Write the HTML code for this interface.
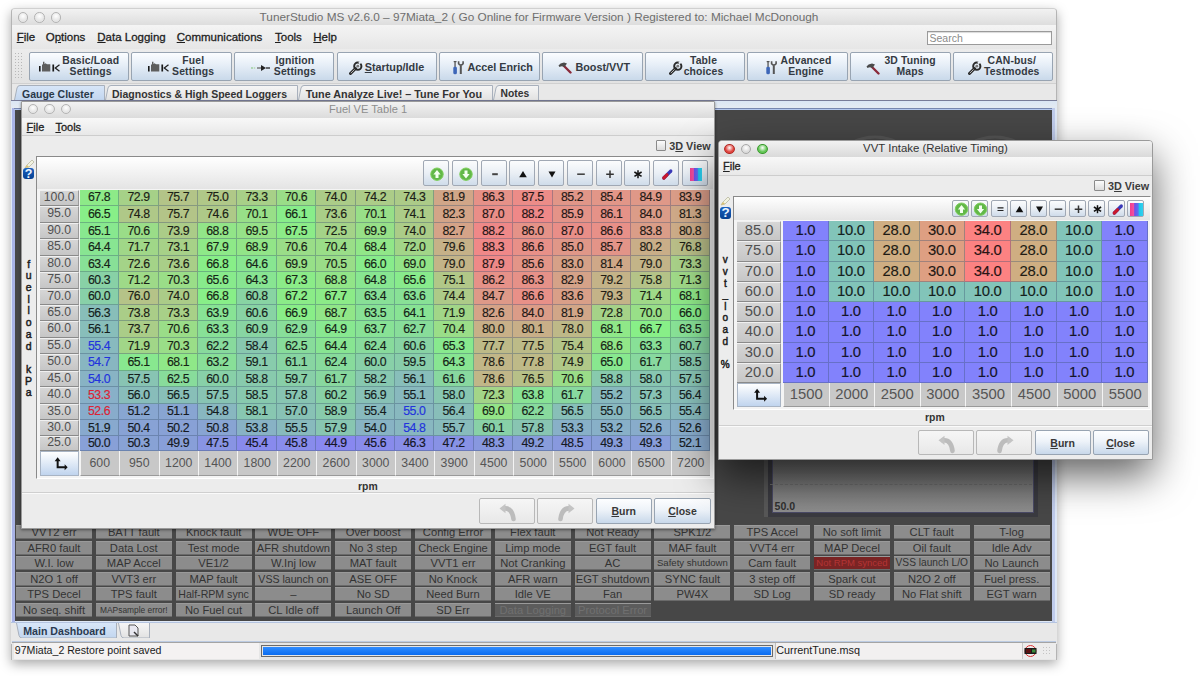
<!DOCTYPE html><html><head><meta charset="utf-8"><style>
html,body{margin:0;padding:0;width:1200px;height:676px;overflow:hidden;background:#fff;font-family:"Liberation Sans", sans-serif;}
div{font-family:"Liberation Sans", sans-serif;}
</style></head><body>
<div style="position:absolute;left:11px;top:7.5px;width:1046px;height:652.5px;box-sizing:border-box;background:#e8e8e8;border:1px solid #b4b4b4;border-top-color:#d0d0d0;border-radius:4px 4px 0 0;box-shadow:0 4px 12px rgba(0,0,0,0.34);"></div>
<div style="position:absolute;left:12px;top:8.5px;width:1044px;height:16.5px;background:linear-gradient(#f2f2f2,#dddddd);border-radius:3px 3px 0 0;border-bottom:1px solid #bcbcbc;"></div>
<div style="position:absolute;left:17.8px;top:12.2px;width:10.4px;height:10.4px;border-radius:50%;box-sizing:border-box;border:1px solid #b4b4b4;background:radial-gradient(circle at 50% 35%, #ffffff 0%, #e6e6e6 60%);"></div>
<div style="position:absolute;left:34.199999999999996px;top:12.2px;width:10.4px;height:10.4px;border-radius:50%;box-sizing:border-box;border:1px solid #b4b4b4;background:radial-gradient(circle at 50% 35%, #ffffff 0%, #e6e6e6 60%);"></div>
<div style="position:absolute;left:50.599999999999994px;top:12.2px;width:10.4px;height:10.4px;border-radius:50%;box-sizing:border-box;border:1px solid #b4b4b4;background:radial-gradient(circle at 50% 35%, #ffffff 0%, #e6e6e6 60%);"></div>
<div style="position:absolute;left:239px;width:600px;text-align:center;top:12px;font-size:11.8px;font-weight:normal;color:#6e6e6e;white-space:nowrap;line-height:1;">TunerStudio MS v2.6.0 – 97Miata_2 ( Go Online for Firmware Version ) Registered to: Michael McDonough</div>
<div style="position:absolute;left:12px;top:25px;width:1044px;height:24px;background:linear-gradient(#f4f4f4,#e6e6e6);border-bottom:1px solid #cfcfcf;"></div>
<div style="position:absolute;left:16.7px;top:32px;font-size:11.5px;font-weight:normal;color:#1e1e1e;white-space:nowrap;line-height:1;-webkit-text-stroke:0.3px #1e1e1e;"><u>F</u>ile</div>
<div style="position:absolute;left:45.7px;top:32px;font-size:11.5px;font-weight:normal;color:#1e1e1e;white-space:nowrap;line-height:1;-webkit-text-stroke:0.3px #1e1e1e;">O<u>p</u>tions</div>
<div style="position:absolute;left:97.3px;top:32px;font-size:11.5px;font-weight:normal;color:#1e1e1e;white-space:nowrap;line-height:1;-webkit-text-stroke:0.3px #1e1e1e;"><u>D</u>ata Logging</div>
<div style="position:absolute;left:176.7px;top:32px;font-size:11.5px;font-weight:normal;color:#1e1e1e;white-space:nowrap;line-height:1;-webkit-text-stroke:0.3px #1e1e1e;"><u>C</u>ommunications</div>
<div style="position:absolute;left:275px;top:32px;font-size:11.5px;font-weight:normal;color:#1e1e1e;white-space:nowrap;line-height:1;-webkit-text-stroke:0.3px #1e1e1e;"><u>T</u>ools</div>
<div style="position:absolute;left:313.3px;top:32px;font-size:11.5px;font-weight:normal;color:#1e1e1e;white-space:nowrap;line-height:1;-webkit-text-stroke:0.3px #1e1e1e;"><u>H</u>elp</div>
<div style="position:absolute;left:927px;top:30.5px;width:125px;height:14px;box-sizing:border-box;background:#fff;border:1px solid #9a9a9a;box-shadow:inset 0 1px 1px rgba(0,0,0,0.15);"></div>
<div style="position:absolute;left:929.5px;top:33px;font-size:10.5px;font-weight:normal;color:#8a8a8a;white-space:nowrap;line-height:1;">Search</div>
<div style="position:absolute;left:12px;top:49px;width:1044px;height:34px;background:linear-gradient(#ececec,#e2e2e2);border-bottom:1px solid #d0d0d0;"></div>
<div style="position:absolute;left:14px;top:52px;width:8px;height:28px;background-image:radial-gradient(#b8b8b8 0.7px, transparent 0.8px);background-size:3px 3px;"></div>
<div style="position:absolute;left:28.5px;top:52.3px;width:100.5px;height:28.5px;box-sizing:border-box;border:1px solid #98a4b2;border-radius:2px;background:linear-gradient(#fbfdff 0%,#e6eef7 45%,#c9d9ea 100%);"><svg style="position:absolute;left:9.899999999999999px;top:8.0px" width="22" height="12" viewBox="0 0 22 12"><rect x="0" y="5" width="1.6" height="5.5" fill="#1a1a1a"/><path d="M3 10.5 V4 L4 3 V0.8 H5.4 V3 L6.5 2.2 L8 3.2 H11.3 V10.5 Z" fill="#5e5e5e"/><rect x="13.4" y="3.5" width="1.7" height="7" fill="#1a1a1a"/><path d="M20.5 3.8 L16.3 7 L20.5 10.2" stroke="#222" stroke-width="1.3" fill="none"/></svg></div>
<div style="position:absolute;left:-209.3px;width:600px;text-align:center;top:55.5px;font-size:10.4px;font-weight:bold;color:#343a42;white-space:nowrap;line-height:1;letter-spacing:0.15px;">Basic/Load</div>
<div style="position:absolute;left:-209.3px;width:600px;text-align:center;top:67.2px;font-size:10.4px;font-weight:bold;color:#343a42;white-space:nowrap;line-height:1;letter-spacing:0.15px;">Settings</div>
<div style="position:absolute;left:131.2px;top:52.3px;width:100.5px;height:28.5px;box-sizing:border-box;border:1px solid #98a4b2;border-radius:2px;background:linear-gradient(#fbfdff 0%,#e6eef7 45%,#c9d9ea 100%);"><svg style="position:absolute;left:16.30000000000001px;top:8.0px" width="22" height="12" viewBox="0 0 22 12"><rect x="0" y="5" width="1.6" height="5.5" fill="#1a1a1a"/><path d="M3 10.5 V4 L4 3 V0.8 H5.4 V3 L6.5 2.2 L8 3.2 H11.3 V10.5 Z" fill="#5e5e5e"/><rect x="13.4" y="3.5" width="1.7" height="7" fill="#1a1a1a"/><path d="M20.5 3.8 L16.3 7 L20.5 10.2" stroke="#222" stroke-width="1.3" fill="none"/></svg></div>
<div style="position:absolute;left:-106.80000000000001px;width:600px;text-align:center;top:55.5px;font-size:10.4px;font-weight:bold;color:#343a42;white-space:nowrap;line-height:1;letter-spacing:0.15px;">Fuel</div>
<div style="position:absolute;left:-106.80000000000001px;width:600px;text-align:center;top:67.2px;font-size:10.4px;font-weight:bold;color:#343a42;white-space:nowrap;line-height:1;letter-spacing:0.15px;">Settings</div>
<div style="position:absolute;left:233.9px;top:52.3px;width:100.5px;height:28.5px;box-sizing:border-box;border:1px solid #98a4b2;border-radius:2px;background:linear-gradient(#fbfdff 0%,#e6eef7 45%,#c9d9ea 100%);"><svg style="position:absolute;left:15.099999999999994px;top:9.200000000000003px" width="22" height="12" viewBox="0 0 22 12"><circle cx="2" cy="6" r="0.9" fill="#9c9"/><circle cx="4.5" cy="6" r="0.9" fill="#bdb"/><path d="M7 6 H11" stroke="#666" stroke-width="1.3"/><path d="M11 3 V9 L16 6 Z" fill="#222"/><path d="M16 6 H20" stroke="#222" stroke-width="1.3"/></svg></div>
<div style="position:absolute;left:-5.100000000000023px;width:600px;text-align:center;top:55.5px;font-size:10.4px;font-weight:bold;color:#343a42;white-space:nowrap;line-height:1;letter-spacing:0.15px;">Ignition</div>
<div style="position:absolute;left:-5.100000000000023px;width:600px;text-align:center;top:67.2px;font-size:10.4px;font-weight:bold;color:#343a42;white-space:nowrap;line-height:1;letter-spacing:0.15px;">Settings</div>
<div style="position:absolute;left:336.6px;top:52.3px;width:100.5px;height:28.5px;box-sizing:border-box;border:1px solid #98a4b2;border-radius:2px;background:linear-gradient(#fbfdff 0%,#e6eef7 45%,#c9d9ea 100%);"><svg style="position:absolute;left:11.099999999999966px;top:7.600000000000001px" width="14" height="14" viewBox="0 0 14 14"><path d="M1.5 12.5 L6.5 7.5" stroke="#2a2a2a" stroke-width="3" stroke-linecap="round"/><path d="M1.8 12.2 L6.2 7.8" stroke="#d8d8d8" stroke-width="0.8"/><circle cx="8.8" cy="5.2" r="3.6" fill="none" stroke="#2a2a2a" stroke-width="2"/><circle cx="8.8" cy="5.2" r="1.4" fill="#777"/><path d="M10 2.5 L13.5 -0.5" stroke="#e8eef6" stroke-width="2.2"/></svg></div>
<div style="position:absolute;left:364.75px;top:61.8px;font-size:10.8px;font-weight:bold;color:#343a42;white-space:nowrap;line-height:1;"><u>S</u>tartup/Idle</div>
<div style="position:absolute;left:439.3px;top:52.3px;width:100.5px;height:28.5px;box-sizing:border-box;border:1px solid #98a4b2;border-radius:2px;background:linear-gradient(#fbfdff 0%,#e6eef7 45%,#c9d9ea 100%);"><svg style="position:absolute;left:12.699999999999989px;top:7.700000000000003px" width="12" height="14" viewBox="0 0 12 14"><rect x="0.3" y="5.5" width="3.6" height="7.8" rx="1.5" fill="#3d66b8"/><rect x="1.4" y="0.3" width="1.3" height="5.5" fill="#555"/><rect x="0.7" y="0" width="2.8" height="1.2" fill="#555"/><path d="M7.8 4.5 V13" stroke="#555" stroke-width="2"/><path d="M5.6 0.3 V2.8 Q7.8 5.5 10.1 2.8 V0.3" stroke="#555" stroke-width="1.6" fill="none"/></svg></div>
<div style="position:absolute;left:467.5px;top:61.8px;font-size:10.8px;font-weight:bold;color:#343a42;white-space:nowrap;line-height:1;">Accel Enrich</div>
<div style="position:absolute;left:542.0px;top:52.3px;width:100.5px;height:28.5px;box-sizing:border-box;border:1px solid #98a4b2;border-radius:2px;background:linear-gradient(#fbfdff 0%,#e6eef7 45%,#c9d9ea 100%);"><svg style="position:absolute;left:15.0px;top:8.700000000000003px" width="14" height="12" viewBox="0 0 14 12"><path d="M5.5 3.5 L12.5 10.5" stroke="#8a2a3a" stroke-width="2.4" stroke-linecap="round"/><path d="M0.5 3.5 Q2 1 6 0.5 L9 1.5 L6.5 5 Q4 3.5 1.5 5 Z" fill="#4a4a4a"/></svg></div>
<div style="position:absolute;left:575.4px;top:61.8px;font-size:10.8px;font-weight:bold;color:#343a42;white-space:nowrap;line-height:1;">Boost/VVT</div>
<div style="position:absolute;left:644.7px;top:52.3px;width:100.5px;height:28.5px;box-sizing:border-box;border:1px solid #98a4b2;border-radius:2px;background:linear-gradient(#fbfdff 0%,#e6eef7 45%,#c9d9ea 100%);"><svg style="position:absolute;left:23.299999999999955px;top:8.200000000000003px" width="14" height="14" viewBox="0 0 14 14"><path d="M1.5 12.5 L6.5 7.5" stroke="#2a2a2a" stroke-width="3" stroke-linecap="round"/><path d="M1.8 12.2 L6.2 7.8" stroke="#d8d8d8" stroke-width="0.8"/><circle cx="8.8" cy="5.2" r="3.6" fill="none" stroke="#2a2a2a" stroke-width="2"/><circle cx="8.8" cy="5.2" r="1.4" fill="#777"/><path d="M10 2.5 L13.5 -0.5" stroke="#e8eef6" stroke-width="2.2"/></svg></div>
<div style="position:absolute;left:403.5px;width:600px;text-align:center;top:55.5px;font-size:10.4px;font-weight:bold;color:#343a42;white-space:nowrap;line-height:1;letter-spacing:0.15px;">Table</div>
<div style="position:absolute;left:403.5px;width:600px;text-align:center;top:67.2px;font-size:10.4px;font-weight:bold;color:#343a42;white-space:nowrap;line-height:1;letter-spacing:0.15px;">choices</div>
<div style="position:absolute;left:747.4px;top:52.3px;width:100.5px;height:28.5px;box-sizing:border-box;border:1px solid #98a4b2;border-radius:2px;background:linear-gradient(#fbfdff 0%,#e6eef7 45%,#c9d9ea 100%);"><svg style="position:absolute;left:18.0px;top:7.700000000000003px" width="12" height="14" viewBox="0 0 12 14"><rect x="0.3" y="5.5" width="3.6" height="7.8" rx="1.5" fill="#3d66b8"/><rect x="1.4" y="0.3" width="1.3" height="5.5" fill="#555"/><rect x="0.7" y="0" width="2.8" height="1.2" fill="#555"/><path d="M7.8 4.5 V13" stroke="#555" stroke-width="2"/><path d="M5.6 0.3 V2.8 Q7.8 5.5 10.1 2.8 V0.3" stroke="#555" stroke-width="1.6" fill="none"/></svg></div>
<div style="position:absolute;left:506.0px;width:600px;text-align:center;top:55.5px;font-size:10.4px;font-weight:bold;color:#343a42;white-space:nowrap;line-height:1;letter-spacing:0.15px;">Advanced</div>
<div style="position:absolute;left:506.0px;width:600px;text-align:center;top:67.2px;font-size:10.4px;font-weight:bold;color:#343a42;white-space:nowrap;line-height:1;letter-spacing:0.15px;">Engine</div>
<div style="position:absolute;left:850.1px;top:52.3px;width:100.5px;height:28.5px;box-sizing:border-box;border:1px solid #98a4b2;border-radius:2px;background:linear-gradient(#fbfdff 0%,#e6eef7 45%,#c9d9ea 100%);"><svg style="position:absolute;left:14.899999999999977px;top:9.700000000000003px" width="14" height="12" viewBox="0 0 14 12"><path d="M5.5 3.5 L12.5 10.5" stroke="#8a2a3a" stroke-width="2.4" stroke-linecap="round"/><path d="M0.5 3.5 Q2 1 6 0.5 L9 1.5 L6.5 5 Q4 3.5 1.5 5 Z" fill="#4a4a4a"/></svg></div>
<div style="position:absolute;left:610.1px;width:600px;text-align:center;top:55.5px;font-size:10.4px;font-weight:bold;color:#343a42;white-space:nowrap;line-height:1;letter-spacing:0.15px;">3D Tuning</div>
<div style="position:absolute;left:610.1px;width:600px;text-align:center;top:67.2px;font-size:10.4px;font-weight:bold;color:#343a42;white-space:nowrap;line-height:1;letter-spacing:0.15px;">Maps</div>
<div style="position:absolute;left:952.8000000000001px;top:52.3px;width:100.5px;height:28.5px;box-sizing:border-box;border:1px solid #98a4b2;border-radius:2px;background:linear-gradient(#fbfdff 0%,#e6eef7 45%,#c9d9ea 100%);"><svg style="position:absolute;left:14.699999999999932px;top:7.700000000000003px" width="14" height="14" viewBox="0 0 14 14"><path d="M1.5 12.5 L6.5 7.5" stroke="#2a2a2a" stroke-width="3" stroke-linecap="round"/><path d="M1.8 12.2 L6.2 7.8" stroke="#d8d8d8" stroke-width="0.8"/><circle cx="8.8" cy="5.2" r="3.6" fill="none" stroke="#2a2a2a" stroke-width="2"/><circle cx="8.8" cy="5.2" r="1.4" fill="#777"/><path d="M10 2.5 L13.5 -0.5" stroke="#e8eef6" stroke-width="2.2"/></svg></div>
<div style="position:absolute;left:711.8000000000001px;width:600px;text-align:center;top:55.5px;font-size:10.4px;font-weight:bold;color:#343a42;white-space:nowrap;line-height:1;letter-spacing:0.15px;">CAN-bus/</div>
<div style="position:absolute;left:711.8000000000001px;width:600px;text-align:center;top:67.2px;font-size:10.4px;font-weight:bold;color:#343a42;white-space:nowrap;line-height:1;letter-spacing:0.15px;">Testmodes</div>
<svg style="position:absolute;left:13.5px;top:85px" width="91" height="15"><defs><linearGradient id="tgsel" x1="0" y1="0" x2="0" y2="1"><stop offset="0" stop-color="#d8e6f8"/><stop offset="1" stop-color="#c2d6ef"/></linearGradient></defs><path d="M0.5 15 L3 3 Q3.6 0.5 6 0.5 H90.5 V15" fill="url(#tgsel)" stroke="#a8b0bc" stroke-width="1"/></svg>
<svg style="position:absolute;left:104.5px;top:85px" width="193" height="15"><defs><linearGradient id="tguns" x1="0" y1="0" x2="0" y2="1"><stop offset="0" stop-color="#f6f6f6"/><stop offset="1" stop-color="#e2e2e2"/></linearGradient></defs><path d="M0.5 15 L3 3 Q3.6 0.5 6 0.5 H192.5 V15" fill="url(#tguns)" stroke="#a8b0bc" stroke-width="1"/></svg>
<svg style="position:absolute;left:297.5px;top:85px" width="195" height="15"><defs><linearGradient id="tguns" x1="0" y1="0" x2="0" y2="1"><stop offset="0" stop-color="#f6f6f6"/><stop offset="1" stop-color="#e2e2e2"/></linearGradient></defs><path d="M0.5 15 L3 3 Q3.6 0.5 6 0.5 H194.5 V15" fill="url(#tguns)" stroke="#a8b0bc" stroke-width="1"/></svg>
<svg style="position:absolute;left:492.5px;top:85px" width="46" height="15"><defs><linearGradient id="tguns" x1="0" y1="0" x2="0" y2="1"><stop offset="0" stop-color="#f6f6f6"/><stop offset="1" stop-color="#e2e2e2"/></linearGradient></defs><path d="M0.5 15 L3 3 Q3.6 0.5 6 0.5 H45.5 V15" fill="url(#tguns)" stroke="#a8b0bc" stroke-width="1"/></svg>
<div style="position:absolute;left:22px;top:88.6px;font-size:10.5px;font-weight:bold;color:#2a3848;white-space:nowrap;line-height:1;">Gauge Cluster</div>
<div style="position:absolute;left:112px;top:88.6px;font-size:10.5px;font-weight:bold;color:#333;white-space:nowrap;line-height:1;">Diagnostics &amp; High Speed Loggers</div>
<div style="position:absolute;left:305.7px;top:88.6px;font-size:10.8px;font-weight:bold;color:#333;white-space:nowrap;line-height:1;">Tune Analyze Live! – Tune For You</div>
<div style="position:absolute;left:500.5px;top:88.9px;font-size:10.3px;font-weight:bold;color:#333;white-space:nowrap;line-height:1;">Notes</div>
<div style="position:absolute;left:11px;top:99.5px;width:1046px;height:523.5px;box-sizing:border-box;background:linear-gradient(#dae6f4,#e6ecf2 8px,#dfe8f6 9px);border-top:1px solid #787c98;"></div>
<div style="position:absolute;left:11.5px;top:107.5px;width:3px;height:515px;background:#a9b3e6;"></div>
<div style="position:absolute;left:13.5px;top:107.5px;width:1041px;height:1px;background:#7888b0;"></div>
<div style="position:absolute;left:13.5px;top:108.5px;width:1041px;height:1.5px;background:#b4c8ee;"></div>
<div style="position:absolute;left:1052px;top:107.5px;width:3px;height:515px;background:#c0ccec;"></div>
<div style="position:absolute;left:15px;top:110px;width:1037px;height:511px;background:#474747;"></div>
<svg style="position:absolute;left:715px;top:110px" width="337" height="31"><circle cx="160" cy="75" r="48" fill="none" stroke="#555" stroke-width="3"/><circle cx="280" cy="75" r="48" fill="none" stroke="#555" stroke-width="3"/></svg>
<div style="position:absolute;left:764px;top:430px;width:274px;height:87px;box-sizing:border-box;border:4px solid #3a3a40;border-left-width:8px;border-top:none;background:linear-gradient(#505050,#8e8e8e);box-shadow:inset 0 0 0 1px #4a4a66;"></div>
<div style="position:absolute;left:764px;top:430px;width:4px;height:87px;background:#585858;"></div>
<div style="position:absolute;left:770px;top:484px;width:262px;height:0;border-top:1px dashed #6a6a6a;"></div>
<div style="position:absolute;left:774.5px;top:501px;font-size:10.6px;font-weight:bold;color:#303030;white-space:nowrap;line-height:1;">50.0</div>
<div style="position:absolute;left:16.0px;top:525.2px;width:76px;height:14px;box-sizing:border-box;background:#8c8c8c;border-top:1px solid #9a9a9a;border-bottom:1px solid #6a6a6a;"></div>
<div style="position:absolute;left:16.0px;top:525.2px;width:76px;height:14px;line-height:14px;text-align:center;font-size:11.2px;color:#333;white-space:nowrap;overflow:hidden;">VVT2 err</div>
<div style="position:absolute;left:95.8px;top:525.2px;width:76px;height:14px;box-sizing:border-box;background:#8c8c8c;border-top:1px solid #9a9a9a;border-bottom:1px solid #6a6a6a;"></div>
<div style="position:absolute;left:95.8px;top:525.2px;width:76px;height:14px;line-height:14px;text-align:center;font-size:11.2px;color:#333;white-space:nowrap;overflow:hidden;">BATT fault</div>
<div style="position:absolute;left:175.6px;top:525.2px;width:76px;height:14px;box-sizing:border-box;background:#8c8c8c;border-top:1px solid #9a9a9a;border-bottom:1px solid #6a6a6a;"></div>
<div style="position:absolute;left:175.6px;top:525.2px;width:76px;height:14px;line-height:14px;text-align:center;font-size:11.2px;color:#333;white-space:nowrap;overflow:hidden;">Knock fault</div>
<div style="position:absolute;left:255.39999999999998px;top:525.2px;width:76px;height:14px;box-sizing:border-box;background:#8c8c8c;border-top:1px solid #9a9a9a;border-bottom:1px solid #6a6a6a;"></div>
<div style="position:absolute;left:255.39999999999998px;top:525.2px;width:76px;height:14px;line-height:14px;text-align:center;font-size:11.2px;color:#333;white-space:nowrap;overflow:hidden;">WUE OFF</div>
<div style="position:absolute;left:335.2px;top:525.2px;width:76px;height:14px;box-sizing:border-box;background:#8c8c8c;border-top:1px solid #9a9a9a;border-bottom:1px solid #6a6a6a;"></div>
<div style="position:absolute;left:335.2px;top:525.2px;width:76px;height:14px;line-height:14px;text-align:center;font-size:11.2px;color:#333;white-space:nowrap;overflow:hidden;">Over boost</div>
<div style="position:absolute;left:415.0px;top:525.2px;width:76px;height:14px;box-sizing:border-box;background:#8c8c8c;border-top:1px solid #9a9a9a;border-bottom:1px solid #6a6a6a;"></div>
<div style="position:absolute;left:415.0px;top:525.2px;width:76px;height:14px;line-height:14px;text-align:center;font-size:11.2px;color:#333;white-space:nowrap;overflow:hidden;">Config Error</div>
<div style="position:absolute;left:494.79999999999995px;top:525.2px;width:76px;height:14px;box-sizing:border-box;background:#8c8c8c;border-top:1px solid #9a9a9a;border-bottom:1px solid #6a6a6a;"></div>
<div style="position:absolute;left:494.79999999999995px;top:525.2px;width:76px;height:14px;line-height:14px;text-align:center;font-size:11.2px;color:#333;white-space:nowrap;overflow:hidden;">Flex fault</div>
<div style="position:absolute;left:574.6px;top:525.2px;width:76px;height:14px;box-sizing:border-box;background:#8c8c8c;border-top:1px solid #9a9a9a;border-bottom:1px solid #6a6a6a;"></div>
<div style="position:absolute;left:574.6px;top:525.2px;width:76px;height:14px;line-height:14px;text-align:center;font-size:11.2px;color:#333;white-space:nowrap;overflow:hidden;">Not Ready</div>
<div style="position:absolute;left:654.4px;top:525.2px;width:76px;height:14px;box-sizing:border-box;background:#8c8c8c;border-top:1px solid #9a9a9a;border-bottom:1px solid #6a6a6a;"></div>
<div style="position:absolute;left:654.4px;top:525.2px;width:76px;height:14px;line-height:14px;text-align:center;font-size:11.2px;color:#333;white-space:nowrap;overflow:hidden;">SPK1/2</div>
<div style="position:absolute;left:734.1999999999999px;top:525.2px;width:76px;height:14px;box-sizing:border-box;background:#8c8c8c;border-top:1px solid #9a9a9a;border-bottom:1px solid #6a6a6a;"></div>
<div style="position:absolute;left:734.1999999999999px;top:525.2px;width:76px;height:14px;line-height:14px;text-align:center;font-size:11.2px;color:#333;white-space:nowrap;overflow:hidden;">TPS Accel</div>
<div style="position:absolute;left:814.0px;top:525.2px;width:76px;height:14px;box-sizing:border-box;background:#8c8c8c;border-top:1px solid #9a9a9a;border-bottom:1px solid #6a6a6a;"></div>
<div style="position:absolute;left:814.0px;top:525.2px;width:76px;height:14px;line-height:14px;text-align:center;font-size:11.2px;color:#333;white-space:nowrap;overflow:hidden;">No soft limit</div>
<div style="position:absolute;left:893.8px;top:525.2px;width:76px;height:14px;box-sizing:border-box;background:#8c8c8c;border-top:1px solid #9a9a9a;border-bottom:1px solid #6a6a6a;"></div>
<div style="position:absolute;left:893.8px;top:525.2px;width:76px;height:14px;line-height:14px;text-align:center;font-size:11.2px;color:#333;white-space:nowrap;overflow:hidden;">CLT fault</div>
<div style="position:absolute;left:973.5999999999999px;top:525.2px;width:76px;height:14px;box-sizing:border-box;background:#8c8c8c;border-top:1px solid #9a9a9a;border-bottom:1px solid #6a6a6a;"></div>
<div style="position:absolute;left:973.5999999999999px;top:525.2px;width:76px;height:14px;line-height:14px;text-align:center;font-size:11.2px;color:#333;white-space:nowrap;overflow:hidden;">T-log</div>
<div style="position:absolute;left:16.0px;top:540.75px;width:76px;height:14px;box-sizing:border-box;background:#8c8c8c;border-top:1px solid #9a9a9a;border-bottom:1px solid #6a6a6a;"></div>
<div style="position:absolute;left:16.0px;top:540.75px;width:76px;height:14px;line-height:14px;text-align:center;font-size:11.2px;color:#333;white-space:nowrap;overflow:hidden;">AFR0 fault</div>
<div style="position:absolute;left:95.8px;top:540.75px;width:76px;height:14px;box-sizing:border-box;background:#8c8c8c;border-top:1px solid #9a9a9a;border-bottom:1px solid #6a6a6a;"></div>
<div style="position:absolute;left:95.8px;top:540.75px;width:76px;height:14px;line-height:14px;text-align:center;font-size:11.2px;color:#333;white-space:nowrap;overflow:hidden;">Data Lost</div>
<div style="position:absolute;left:175.6px;top:540.75px;width:76px;height:14px;box-sizing:border-box;background:#8c8c8c;border-top:1px solid #9a9a9a;border-bottom:1px solid #6a6a6a;"></div>
<div style="position:absolute;left:175.6px;top:540.75px;width:76px;height:14px;line-height:14px;text-align:center;font-size:11.2px;color:#333;white-space:nowrap;overflow:hidden;">Test mode</div>
<div style="position:absolute;left:255.39999999999998px;top:540.75px;width:76px;height:14px;box-sizing:border-box;background:#8c8c8c;border-top:1px solid #9a9a9a;border-bottom:1px solid #6a6a6a;"></div>
<div style="position:absolute;left:255.39999999999998px;top:540.75px;width:76px;height:14px;line-height:14px;text-align:center;font-size:11.2px;color:#333;white-space:nowrap;overflow:hidden;">AFR shutdown</div>
<div style="position:absolute;left:335.2px;top:540.75px;width:76px;height:14px;box-sizing:border-box;background:#8c8c8c;border-top:1px solid #9a9a9a;border-bottom:1px solid #6a6a6a;"></div>
<div style="position:absolute;left:335.2px;top:540.75px;width:76px;height:14px;line-height:14px;text-align:center;font-size:11.2px;color:#333;white-space:nowrap;overflow:hidden;">No 3 step</div>
<div style="position:absolute;left:415.0px;top:540.75px;width:76px;height:14px;box-sizing:border-box;background:#8c8c8c;border-top:1px solid #9a9a9a;border-bottom:1px solid #6a6a6a;"></div>
<div style="position:absolute;left:415.0px;top:540.75px;width:76px;height:14px;line-height:14px;text-align:center;font-size:11.2px;color:#333;white-space:nowrap;overflow:hidden;">Check Engine</div>
<div style="position:absolute;left:494.79999999999995px;top:540.75px;width:76px;height:14px;box-sizing:border-box;background:#8c8c8c;border-top:1px solid #9a9a9a;border-bottom:1px solid #6a6a6a;"></div>
<div style="position:absolute;left:494.79999999999995px;top:540.75px;width:76px;height:14px;line-height:14px;text-align:center;font-size:11.2px;color:#333;white-space:nowrap;overflow:hidden;">Limp mode</div>
<div style="position:absolute;left:574.6px;top:540.75px;width:76px;height:14px;box-sizing:border-box;background:#8c8c8c;border-top:1px solid #9a9a9a;border-bottom:1px solid #6a6a6a;"></div>
<div style="position:absolute;left:574.6px;top:540.75px;width:76px;height:14px;line-height:14px;text-align:center;font-size:11.2px;color:#333;white-space:nowrap;overflow:hidden;">EGT fault</div>
<div style="position:absolute;left:654.4px;top:540.75px;width:76px;height:14px;box-sizing:border-box;background:#8c8c8c;border-top:1px solid #9a9a9a;border-bottom:1px solid #6a6a6a;"></div>
<div style="position:absolute;left:654.4px;top:540.75px;width:76px;height:14px;line-height:14px;text-align:center;font-size:11.2px;color:#333;white-space:nowrap;overflow:hidden;">MAF fault</div>
<div style="position:absolute;left:734.1999999999999px;top:540.75px;width:76px;height:14px;box-sizing:border-box;background:#8c8c8c;border-top:1px solid #9a9a9a;border-bottom:1px solid #6a6a6a;"></div>
<div style="position:absolute;left:734.1999999999999px;top:540.75px;width:76px;height:14px;line-height:14px;text-align:center;font-size:11.2px;color:#333;white-space:nowrap;overflow:hidden;">VVT4 err</div>
<div style="position:absolute;left:814.0px;top:540.75px;width:76px;height:14px;box-sizing:border-box;background:#8c8c8c;border-top:1px solid #9a9a9a;border-bottom:1px solid #6a6a6a;"></div>
<div style="position:absolute;left:814.0px;top:540.75px;width:76px;height:14px;line-height:14px;text-align:center;font-size:11.2px;color:#333;white-space:nowrap;overflow:hidden;">MAP Decel</div>
<div style="position:absolute;left:893.8px;top:540.75px;width:76px;height:14px;box-sizing:border-box;background:#8c8c8c;border-top:1px solid #9a9a9a;border-bottom:1px solid #6a6a6a;"></div>
<div style="position:absolute;left:893.8px;top:540.75px;width:76px;height:14px;line-height:14px;text-align:center;font-size:11.2px;color:#333;white-space:nowrap;overflow:hidden;">Oil fault</div>
<div style="position:absolute;left:973.5999999999999px;top:540.75px;width:76px;height:14px;box-sizing:border-box;background:#8c8c8c;border-top:1px solid #9a9a9a;border-bottom:1px solid #6a6a6a;"></div>
<div style="position:absolute;left:973.5999999999999px;top:540.75px;width:76px;height:14px;line-height:14px;text-align:center;font-size:11.2px;color:#333;white-space:nowrap;overflow:hidden;">Idle Adv</div>
<div style="position:absolute;left:16.0px;top:556.3000000000001px;width:76px;height:14px;box-sizing:border-box;background:#8c8c8c;border-top:1px solid #9a9a9a;border-bottom:1px solid #6a6a6a;"></div>
<div style="position:absolute;left:16.0px;top:556.3000000000001px;width:76px;height:14px;line-height:14px;text-align:center;font-size:11.2px;color:#333;white-space:nowrap;overflow:hidden;">W.I. low</div>
<div style="position:absolute;left:95.8px;top:556.3000000000001px;width:76px;height:14px;box-sizing:border-box;background:#8c8c8c;border-top:1px solid #9a9a9a;border-bottom:1px solid #6a6a6a;"></div>
<div style="position:absolute;left:95.8px;top:556.3000000000001px;width:76px;height:14px;line-height:14px;text-align:center;font-size:11.2px;color:#333;white-space:nowrap;overflow:hidden;">MAP Accel</div>
<div style="position:absolute;left:175.6px;top:556.3000000000001px;width:76px;height:14px;box-sizing:border-box;background:#8c8c8c;border-top:1px solid #9a9a9a;border-bottom:1px solid #6a6a6a;"></div>
<div style="position:absolute;left:175.6px;top:556.3000000000001px;width:76px;height:14px;line-height:14px;text-align:center;font-size:11.2px;color:#333;white-space:nowrap;overflow:hidden;">VE1/2</div>
<div style="position:absolute;left:255.39999999999998px;top:556.3000000000001px;width:76px;height:14px;box-sizing:border-box;background:#8c8c8c;border-top:1px solid #9a9a9a;border-bottom:1px solid #6a6a6a;"></div>
<div style="position:absolute;left:255.39999999999998px;top:556.3000000000001px;width:76px;height:14px;line-height:14px;text-align:center;font-size:11.2px;color:#333;white-space:nowrap;overflow:hidden;">W.Inj low</div>
<div style="position:absolute;left:335.2px;top:556.3000000000001px;width:76px;height:14px;box-sizing:border-box;background:#8c8c8c;border-top:1px solid #9a9a9a;border-bottom:1px solid #6a6a6a;"></div>
<div style="position:absolute;left:335.2px;top:556.3000000000001px;width:76px;height:14px;line-height:14px;text-align:center;font-size:11.2px;color:#333;white-space:nowrap;overflow:hidden;">MAT fault</div>
<div style="position:absolute;left:415.0px;top:556.3000000000001px;width:76px;height:14px;box-sizing:border-box;background:#8c8c8c;border-top:1px solid #9a9a9a;border-bottom:1px solid #6a6a6a;"></div>
<div style="position:absolute;left:415.0px;top:556.3000000000001px;width:76px;height:14px;line-height:14px;text-align:center;font-size:11.2px;color:#333;white-space:nowrap;overflow:hidden;">VVT1 err</div>
<div style="position:absolute;left:494.79999999999995px;top:556.3000000000001px;width:76px;height:14px;box-sizing:border-box;background:#8c8c8c;border-top:1px solid #9a9a9a;border-bottom:1px solid #6a6a6a;"></div>
<div style="position:absolute;left:494.79999999999995px;top:556.3000000000001px;width:76px;height:14px;line-height:14px;text-align:center;font-size:11.2px;color:#333;white-space:nowrap;overflow:hidden;">Not Cranking</div>
<div style="position:absolute;left:574.6px;top:556.3000000000001px;width:76px;height:14px;box-sizing:border-box;background:#8c8c8c;border-top:1px solid #9a9a9a;border-bottom:1px solid #6a6a6a;"></div>
<div style="position:absolute;left:574.6px;top:556.3000000000001px;width:76px;height:14px;line-height:14px;text-align:center;font-size:11.2px;color:#333;white-space:nowrap;overflow:hidden;">AC</div>
<div style="position:absolute;left:654.4px;top:556.3000000000001px;width:76px;height:14px;box-sizing:border-box;background:#8c8c8c;border-top:1px solid #9a9a9a;border-bottom:1px solid #6a6a6a;"></div>
<div style="position:absolute;left:654.4px;top:556.3000000000001px;width:76px;height:14px;line-height:14px;text-align:center;font-size:9.6px;color:#333;white-space:nowrap;overflow:hidden;">Safety shutdown</div>
<div style="position:absolute;left:734.1999999999999px;top:556.3000000000001px;width:76px;height:14px;box-sizing:border-box;background:#8c8c8c;border-top:1px solid #9a9a9a;border-bottom:1px solid #6a6a6a;"></div>
<div style="position:absolute;left:734.1999999999999px;top:556.3000000000001px;width:76px;height:14px;line-height:14px;text-align:center;font-size:11.2px;color:#333;white-space:nowrap;overflow:hidden;">Cam fault</div>
<div style="position:absolute;left:814.0px;top:556.3000000000001px;width:76px;height:14px;box-sizing:border-box;background:#7a2424;border-top:1px solid #9a9a9a;border-bottom:1px solid #6a6a6a;"></div>
<div style="position:absolute;left:814.0px;top:556.3000000000001px;width:76px;height:14px;line-height:14px;text-align:center;font-size:9.5px;color:#b43434;white-space:nowrap;overflow:hidden;">Not RPM synced</div>
<div style="position:absolute;left:893.8px;top:556.3000000000001px;width:76px;height:14px;box-sizing:border-box;background:#8c8c8c;border-top:1px solid #9a9a9a;border-bottom:1px solid #6a6a6a;"></div>
<div style="position:absolute;left:893.8px;top:556.3000000000001px;width:76px;height:14px;line-height:14px;text-align:center;font-size:10.2px;color:#333;white-space:nowrap;overflow:hidden;">VSS launch L/O</div>
<div style="position:absolute;left:973.5999999999999px;top:556.3000000000001px;width:76px;height:14px;box-sizing:border-box;background:#8c8c8c;border-top:1px solid #9a9a9a;border-bottom:1px solid #6a6a6a;"></div>
<div style="position:absolute;left:973.5999999999999px;top:556.3000000000001px;width:76px;height:14px;line-height:14px;text-align:center;font-size:11.2px;color:#333;white-space:nowrap;overflow:hidden;">No Launch</div>
<div style="position:absolute;left:16.0px;top:571.85px;width:76px;height:14px;box-sizing:border-box;background:#8c8c8c;border-top:1px solid #9a9a9a;border-bottom:1px solid #6a6a6a;"></div>
<div style="position:absolute;left:16.0px;top:571.85px;width:76px;height:14px;line-height:14px;text-align:center;font-size:11.2px;color:#333;white-space:nowrap;overflow:hidden;">N2O 1 off</div>
<div style="position:absolute;left:95.8px;top:571.85px;width:76px;height:14px;box-sizing:border-box;background:#8c8c8c;border-top:1px solid #9a9a9a;border-bottom:1px solid #6a6a6a;"></div>
<div style="position:absolute;left:95.8px;top:571.85px;width:76px;height:14px;line-height:14px;text-align:center;font-size:11.2px;color:#333;white-space:nowrap;overflow:hidden;">VVT3 err</div>
<div style="position:absolute;left:175.6px;top:571.85px;width:76px;height:14px;box-sizing:border-box;background:#8c8c8c;border-top:1px solid #9a9a9a;border-bottom:1px solid #6a6a6a;"></div>
<div style="position:absolute;left:175.6px;top:571.85px;width:76px;height:14px;line-height:14px;text-align:center;font-size:11.2px;color:#333;white-space:nowrap;overflow:hidden;">MAP fault</div>
<div style="position:absolute;left:255.39999999999998px;top:571.85px;width:76px;height:14px;box-sizing:border-box;background:#8c8c8c;border-top:1px solid #9a9a9a;border-bottom:1px solid #6a6a6a;"></div>
<div style="position:absolute;left:255.39999999999998px;top:571.85px;width:76px;height:14px;line-height:14px;text-align:center;font-size:10.6px;color:#333;white-space:nowrap;overflow:hidden;">VSS launch on</div>
<div style="position:absolute;left:335.2px;top:571.85px;width:76px;height:14px;box-sizing:border-box;background:#8c8c8c;border-top:1px solid #9a9a9a;border-bottom:1px solid #6a6a6a;"></div>
<div style="position:absolute;left:335.2px;top:571.85px;width:76px;height:14px;line-height:14px;text-align:center;font-size:11.2px;color:#333;white-space:nowrap;overflow:hidden;">ASE OFF</div>
<div style="position:absolute;left:415.0px;top:571.85px;width:76px;height:14px;box-sizing:border-box;background:#8c8c8c;border-top:1px solid #9a9a9a;border-bottom:1px solid #6a6a6a;"></div>
<div style="position:absolute;left:415.0px;top:571.85px;width:76px;height:14px;line-height:14px;text-align:center;font-size:11.2px;color:#333;white-space:nowrap;overflow:hidden;">No Knock</div>
<div style="position:absolute;left:494.79999999999995px;top:571.85px;width:76px;height:14px;box-sizing:border-box;background:#8c8c8c;border-top:1px solid #9a9a9a;border-bottom:1px solid #6a6a6a;"></div>
<div style="position:absolute;left:494.79999999999995px;top:571.85px;width:76px;height:14px;line-height:14px;text-align:center;font-size:11.2px;color:#333;white-space:nowrap;overflow:hidden;">AFR warn</div>
<div style="position:absolute;left:574.6px;top:571.85px;width:76px;height:14px;box-sizing:border-box;background:#8c8c8c;border-top:1px solid #9a9a9a;border-bottom:1px solid #6a6a6a;"></div>
<div style="position:absolute;left:574.6px;top:571.85px;width:76px;height:14px;line-height:14px;text-align:center;font-size:11.2px;color:#333;white-space:nowrap;overflow:hidden;">EGT shutdown</div>
<div style="position:absolute;left:654.4px;top:571.85px;width:76px;height:14px;box-sizing:border-box;background:#8c8c8c;border-top:1px solid #9a9a9a;border-bottom:1px solid #6a6a6a;"></div>
<div style="position:absolute;left:654.4px;top:571.85px;width:76px;height:14px;line-height:14px;text-align:center;font-size:11.2px;color:#333;white-space:nowrap;overflow:hidden;">SYNC fault</div>
<div style="position:absolute;left:734.1999999999999px;top:571.85px;width:76px;height:14px;box-sizing:border-box;background:#8c8c8c;border-top:1px solid #9a9a9a;border-bottom:1px solid #6a6a6a;"></div>
<div style="position:absolute;left:734.1999999999999px;top:571.85px;width:76px;height:14px;line-height:14px;text-align:center;font-size:11.2px;color:#333;white-space:nowrap;overflow:hidden;">3 step off</div>
<div style="position:absolute;left:814.0px;top:571.85px;width:76px;height:14px;box-sizing:border-box;background:#8c8c8c;border-top:1px solid #9a9a9a;border-bottom:1px solid #6a6a6a;"></div>
<div style="position:absolute;left:814.0px;top:571.85px;width:76px;height:14px;line-height:14px;text-align:center;font-size:11.2px;color:#333;white-space:nowrap;overflow:hidden;">Spark cut</div>
<div style="position:absolute;left:893.8px;top:571.85px;width:76px;height:14px;box-sizing:border-box;background:#8c8c8c;border-top:1px solid #9a9a9a;border-bottom:1px solid #6a6a6a;"></div>
<div style="position:absolute;left:893.8px;top:571.85px;width:76px;height:14px;line-height:14px;text-align:center;font-size:11.2px;color:#333;white-space:nowrap;overflow:hidden;">N2O 2 off</div>
<div style="position:absolute;left:973.5999999999999px;top:571.85px;width:76px;height:14px;box-sizing:border-box;background:#8c8c8c;border-top:1px solid #9a9a9a;border-bottom:1px solid #6a6a6a;"></div>
<div style="position:absolute;left:973.5999999999999px;top:571.85px;width:76px;height:14px;line-height:14px;text-align:center;font-size:11.2px;color:#333;white-space:nowrap;overflow:hidden;">Fuel press.</div>
<div style="position:absolute;left:16.0px;top:587.4000000000001px;width:76px;height:14px;box-sizing:border-box;background:#8c8c8c;border-top:1px solid #9a9a9a;border-bottom:1px solid #6a6a6a;"></div>
<div style="position:absolute;left:16.0px;top:587.4000000000001px;width:76px;height:14px;line-height:14px;text-align:center;font-size:11.2px;color:#333;white-space:nowrap;overflow:hidden;">TPS Decel</div>
<div style="position:absolute;left:95.8px;top:587.4000000000001px;width:76px;height:14px;box-sizing:border-box;background:#8c8c8c;border-top:1px solid #9a9a9a;border-bottom:1px solid #6a6a6a;"></div>
<div style="position:absolute;left:95.8px;top:587.4000000000001px;width:76px;height:14px;line-height:14px;text-align:center;font-size:11.2px;color:#333;white-space:nowrap;overflow:hidden;">TPS fault</div>
<div style="position:absolute;left:175.6px;top:587.4000000000001px;width:76px;height:14px;box-sizing:border-box;background:#8c8c8c;border-top:1px solid #9a9a9a;border-bottom:1px solid #6a6a6a;"></div>
<div style="position:absolute;left:175.6px;top:587.4000000000001px;width:76px;height:14px;line-height:14px;text-align:center;font-size:10.6px;color:#333;white-space:nowrap;overflow:hidden;">Half-RPM sync</div>
<div style="position:absolute;left:255.39999999999998px;top:587.4000000000001px;width:76px;height:14px;box-sizing:border-box;background:#8c8c8c;border-top:1px solid #9a9a9a;border-bottom:1px solid #6a6a6a;"></div>
<div style="position:absolute;left:255.39999999999998px;top:587.4000000000001px;width:76px;height:14px;line-height:14px;text-align:center;font-size:11.2px;color:#333;white-space:nowrap;overflow:hidden;">–</div>
<div style="position:absolute;left:335.2px;top:587.4000000000001px;width:76px;height:14px;box-sizing:border-box;background:#8c8c8c;border-top:1px solid #9a9a9a;border-bottom:1px solid #6a6a6a;"></div>
<div style="position:absolute;left:335.2px;top:587.4000000000001px;width:76px;height:14px;line-height:14px;text-align:center;font-size:11.2px;color:#333;white-space:nowrap;overflow:hidden;">No SD</div>
<div style="position:absolute;left:415.0px;top:587.4000000000001px;width:76px;height:14px;box-sizing:border-box;background:#8c8c8c;border-top:1px solid #9a9a9a;border-bottom:1px solid #6a6a6a;"></div>
<div style="position:absolute;left:415.0px;top:587.4000000000001px;width:76px;height:14px;line-height:14px;text-align:center;font-size:11.2px;color:#333;white-space:nowrap;overflow:hidden;">Need Burn</div>
<div style="position:absolute;left:494.79999999999995px;top:587.4000000000001px;width:76px;height:14px;box-sizing:border-box;background:#8c8c8c;border-top:1px solid #9a9a9a;border-bottom:1px solid #6a6a6a;"></div>
<div style="position:absolute;left:494.79999999999995px;top:587.4000000000001px;width:76px;height:14px;line-height:14px;text-align:center;font-size:11.2px;color:#333;white-space:nowrap;overflow:hidden;">Idle VE</div>
<div style="position:absolute;left:574.6px;top:587.4000000000001px;width:76px;height:14px;box-sizing:border-box;background:#8c8c8c;border-top:1px solid #9a9a9a;border-bottom:1px solid #6a6a6a;"></div>
<div style="position:absolute;left:574.6px;top:587.4000000000001px;width:76px;height:14px;line-height:14px;text-align:center;font-size:11.2px;color:#333;white-space:nowrap;overflow:hidden;">Fan</div>
<div style="position:absolute;left:654.4px;top:587.4000000000001px;width:76px;height:14px;box-sizing:border-box;background:#8c8c8c;border-top:1px solid #9a9a9a;border-bottom:1px solid #6a6a6a;"></div>
<div style="position:absolute;left:654.4px;top:587.4000000000001px;width:76px;height:14px;line-height:14px;text-align:center;font-size:11.2px;color:#333;white-space:nowrap;overflow:hidden;">PW4X</div>
<div style="position:absolute;left:734.1999999999999px;top:587.4000000000001px;width:76px;height:14px;box-sizing:border-box;background:#8c8c8c;border-top:1px solid #9a9a9a;border-bottom:1px solid #6a6a6a;"></div>
<div style="position:absolute;left:734.1999999999999px;top:587.4000000000001px;width:76px;height:14px;line-height:14px;text-align:center;font-size:11.2px;color:#333;white-space:nowrap;overflow:hidden;">SD Log</div>
<div style="position:absolute;left:814.0px;top:587.4000000000001px;width:76px;height:14px;box-sizing:border-box;background:#8c8c8c;border-top:1px solid #9a9a9a;border-bottom:1px solid #6a6a6a;"></div>
<div style="position:absolute;left:814.0px;top:587.4000000000001px;width:76px;height:14px;line-height:14px;text-align:center;font-size:11.2px;color:#333;white-space:nowrap;overflow:hidden;">SD ready</div>
<div style="position:absolute;left:893.8px;top:587.4000000000001px;width:76px;height:14px;box-sizing:border-box;background:#8c8c8c;border-top:1px solid #9a9a9a;border-bottom:1px solid #6a6a6a;"></div>
<div style="position:absolute;left:893.8px;top:587.4000000000001px;width:76px;height:14px;line-height:14px;text-align:center;font-size:11.2px;color:#333;white-space:nowrap;overflow:hidden;">No Flat shift</div>
<div style="position:absolute;left:973.5999999999999px;top:587.4000000000001px;width:76px;height:14px;box-sizing:border-box;background:#8c8c8c;border-top:1px solid #9a9a9a;border-bottom:1px solid #6a6a6a;"></div>
<div style="position:absolute;left:973.5999999999999px;top:587.4000000000001px;width:76px;height:14px;line-height:14px;text-align:center;font-size:11.2px;color:#333;white-space:nowrap;overflow:hidden;">EGT warn</div>
<div style="position:absolute;left:16.0px;top:602.95px;width:76px;height:14px;box-sizing:border-box;background:#8c8c8c;border-top:1px solid #9a9a9a;border-bottom:1px solid #6a6a6a;"></div>
<div style="position:absolute;left:16.0px;top:602.95px;width:76px;height:14px;line-height:14px;text-align:center;font-size:11.2px;color:#333;white-space:nowrap;overflow:hidden;">No seq. shift</div>
<div style="position:absolute;left:95.8px;top:602.95px;width:76px;height:14px;box-sizing:border-box;background:#8c8c8c;border-top:1px solid #9a9a9a;border-bottom:1px solid #6a6a6a;"></div>
<div style="position:absolute;left:95.8px;top:602.95px;width:76px;height:14px;line-height:14px;text-align:center;font-size:8.4px;color:#333;white-space:nowrap;overflow:hidden;">MAPsample error!</div>
<div style="position:absolute;left:175.6px;top:602.95px;width:76px;height:14px;box-sizing:border-box;background:#8c8c8c;border-top:1px solid #9a9a9a;border-bottom:1px solid #6a6a6a;"></div>
<div style="position:absolute;left:175.6px;top:602.95px;width:76px;height:14px;line-height:14px;text-align:center;font-size:11.2px;color:#333;white-space:nowrap;overflow:hidden;">No Fuel cut</div>
<div style="position:absolute;left:255.39999999999998px;top:602.95px;width:76px;height:14px;box-sizing:border-box;background:#8c8c8c;border-top:1px solid #9a9a9a;border-bottom:1px solid #6a6a6a;"></div>
<div style="position:absolute;left:255.39999999999998px;top:602.95px;width:76px;height:14px;line-height:14px;text-align:center;font-size:11.2px;color:#333;white-space:nowrap;overflow:hidden;">CL Idle off</div>
<div style="position:absolute;left:335.2px;top:602.95px;width:76px;height:14px;box-sizing:border-box;background:#8c8c8c;border-top:1px solid #9a9a9a;border-bottom:1px solid #6a6a6a;"></div>
<div style="position:absolute;left:335.2px;top:602.95px;width:76px;height:14px;line-height:14px;text-align:center;font-size:11.2px;color:#333;white-space:nowrap;overflow:hidden;">Launch Off</div>
<div style="position:absolute;left:415.0px;top:602.95px;width:76px;height:14px;box-sizing:border-box;background:#8c8c8c;border-top:1px solid #9a9a9a;border-bottom:1px solid #6a6a6a;"></div>
<div style="position:absolute;left:415.0px;top:602.95px;width:76px;height:14px;line-height:14px;text-align:center;font-size:11.2px;color:#333;white-space:nowrap;overflow:hidden;">SD Err</div>
<div style="position:absolute;left:494.79999999999995px;top:602.95px;width:76px;height:14px;box-sizing:border-box;background:#5c5c5c;border-top:1px solid #9a9a9a;border-bottom:1px solid #6a6a6a;"></div>
<div style="position:absolute;left:494.79999999999995px;top:602.95px;width:76px;height:14px;line-height:14px;text-align:center;font-size:11.2px;color:#707070;white-space:nowrap;overflow:hidden;">Data Logging</div>
<div style="position:absolute;left:574.6px;top:602.95px;width:76px;height:14px;box-sizing:border-box;background:#5c5c5c;border-top:1px solid #9a9a9a;border-bottom:1px solid #6a6a6a;"></div>
<div style="position:absolute;left:574.6px;top:602.95px;width:76px;height:14px;line-height:14px;text-align:center;font-size:11.2px;color:#707070;white-space:nowrap;overflow:hidden;">Protocol Error</div>
<div style="position:absolute;left:11px;top:622px;width:1046px;height:21px;background:#e8e8e8;border-top:1px solid #b4c4e0;"></div>
<svg style="position:absolute;left:15.5px;top:622.5px" width="101" height="15.5"><defs><linearGradient id="tgsel" x1="0" y1="0" x2="0" y2="1"><stop offset="0" stop-color="#d8e6f8"/><stop offset="1" stop-color="#c2d6ef"/></linearGradient></defs><path d="M0.5 0 L3 12.5 Q3.6 15.0 6 15.0 H100.5 V0" fill="url(#tgsel)" stroke="#a8b0bc" stroke-width="1"/></svg>
<div style="position:absolute;left:23.3px;top:626px;font-size:10.6px;font-weight:bold;color:#2a3a50;white-space:nowrap;line-height:1;">Main Dashboard</div>
<svg style="position:absolute;left:117.5px;top:622.5px" width="32" height="15.5"><defs><linearGradient id="tguns" x1="0" y1="0" x2="0" y2="1"><stop offset="0" stop-color="#f6f6f6"/><stop offset="1" stop-color="#e2e2e2"/></linearGradient></defs><path d="M0.5 0 L3 12.5 Q3.6 15.0 6 15.0 H31.5 V0" fill="url(#tguns)" stroke="#a8b0bc" stroke-width="1"/></svg>
<svg style="position:absolute;left:128px;top:624px" width="12" height="13" viewBox="0 0 12 13"><path d="M1 1 H7 L10 4 V12 H1 Z" fill="#e8e8f0" stroke="#555" stroke-width="1"/><path d="M6 8 L10 12" stroke="#333" stroke-width="1.5"/></svg>
<div style="position:absolute;left:12px;top:640.5px;width:1044px;height:1px;background:#bccbe2;"></div>
<div style="position:absolute;left:12px;top:641.5px;width:1044px;height:18px;background:#e6e6e6;border-top:1px solid #a4a4a4;box-sizing:border-box;"></div>
<div style="position:absolute;left:13.5px;top:642.5px;width:245px;height:16.5px;box-sizing:border-box;background:#f4f2f2;"></div>
<div style="position:absolute;left:14.8px;top:645px;font-size:10.6px;font-weight:normal;color:#1a1a1a;white-space:nowrap;line-height:1;">97Miata_2 Restore point saved</div>
<div style="position:absolute;left:260.5px;top:644.5px;width:512px;height:12.5px;box-sizing:border-box;border:1px solid #6a6a6a;background:#e6e6e6;padding:1px;"><div style="width:100%;height:100%;background:linear-gradient(#2f8cff,#0a6cf0);"></div></div>
<div style="position:absolute;left:774.5px;top:642.5px;width:247px;height:16.5px;box-sizing:border-box;background:#f2f0f0;border-left:1px solid #c0c0c0;"></div>
<div style="position:absolute;left:776.3px;top:645px;font-size:10.8px;font-weight:normal;color:#1a1a1a;white-space:nowrap;line-height:1;">CurrentTune.msq</div>
<div style="position:absolute;left:1022px;top:642.5px;width:34px;height:16.5px;box-sizing:border-box;background:#ececec;border-left:1px solid #c8c8c8;"></div>
<svg style="position:absolute;left:1023px;top:645px" width="15" height="12" viewBox="0 0 15 12"><circle cx="7.5" cy="6" r="5.5" fill="none" stroke="#d33" stroke-width="1"/><rect x="1.5" y="3" width="12" height="6" fill="#1a1a1a"/><rect x="3" y="4" width="5" height="4" fill="#5a1010"/><rect x="9" y="4.5" width="3.5" height="3" fill="#3a8a3a"/></svg>
<div style="position:absolute;left:1042px;top:646px;width:10px;height:10px;background-image:radial-gradient(#c4c4c4 0.6px, transparent 0.7px);background-size:3px 3px;"></div>
<div style="position:absolute;left:21px;top:100.5px;width:694px;height:428.5px;box-sizing:border-box;background:#ececec;border:1px solid #9a9a9a;border-radius:1px 1px 0 0;box-shadow:0 1px 3px rgba(0,0,0,0.45);"></div>
<div style="position:absolute;left:22px;top:101.5px;width:692px;height:17px;background:linear-gradient(#f2f2f2,#dadada);border-bottom:1px solid #b0b0b0;border-radius:0px 0px 0 0;"></div>
<div style="position:absolute;left:27.8px;top:104.1px;width:10.4px;height:10.4px;border-radius:50%;box-sizing:border-box;border:1px solid #b4b4b4;background:radial-gradient(circle at 50% 35%, #ffffff 0%, #e6e6e6 60%);"></div>
<div style="position:absolute;left:44.199999999999996px;top:104.1px;width:10.4px;height:10.4px;border-radius:50%;box-sizing:border-box;border:1px solid #b4b4b4;background:radial-gradient(circle at 50% 35%, #ffffff 0%, #e6e6e6 60%);"></div>
<div style="position:absolute;left:60.599999999999994px;top:104.1px;width:10.4px;height:10.4px;border-radius:50%;box-sizing:border-box;border:1px solid #b4b4b4;background:radial-gradient(circle at 50% 35%, #ffffff 0%, #e6e6e6 60%);"></div>
<div style="position:absolute;left:68.0px;width:600px;text-align:center;top:104.0px;font-size:11.1px;font-weight:normal;color:#8e8e8e;white-space:nowrap;line-height:1;">Fuel VE Table 1</div>
<div style="position:absolute;left:22px;top:118px;width:692px;height:17px;background:linear-gradient(#f8f8f8,#e8e8e8);border-bottom:1px solid #d4d4d4;"></div>
<div style="position:absolute;left:26.6px;top:121.5px;font-size:11px;font-weight:normal;color:#222;white-space:nowrap;line-height:1;-webkit-text-stroke:0.3px #222;"><u>F</u>ile</div>
<div style="position:absolute;left:55.4px;top:121.5px;font-size:11px;font-weight:normal;color:#222;white-space:nowrap;line-height:1;-webkit-text-stroke:0.3px #222;"><u>T</u>ools</div>
<div style="position:absolute;left:22px;top:135px;width:692px;height:21px;background:#ececec;border-top:1px solid #cdcdcd;box-sizing:border-box;"></div>
<div style="position:absolute;left:655.5px;top:140px;width:10.5px;height:10.5px;box-sizing:border-box;border:1px solid #8a8a8a;background:linear-gradient(#fcfcfc,#dcdcdc);border-radius:1px;"></div>
<div style="position:absolute;left:669.3px;top:140.5px;font-size:10.8px;font-weight:bold;color:#3c3c3c;white-space:nowrap;line-height:1;">3<u>D</u> View</div>
<div style="position:absolute;left:36px;top:156px;width:678px;height:323px;box-sizing:border-box;background:#f4f4f4;border-left:1px solid #8a8a8a;border-top:1px solid #8a8a8a;border-right:1px solid #ffffff;border-bottom:1px solid #ffffff;"></div>
<div style="position:absolute;left:37px;top:157px;width:676px;height:31.80000000000001px;background:linear-gradient(#ffffff,#e4e4e4);"></div>
<div style="position:absolute;left:423.2px;top:160.1px;width:26px;height:26.4px;box-sizing:border-box;border:1px solid #a0a8b4;border-radius:2px;background:linear-gradient(#fbfcfd,#eaeff5 50%,#cfdcea);"><svg style="position:absolute;left:0;top:0" width="26" height="26.4"><circle cx="13.0" cy="13.2" r="6.2" fill="#62b848" stroke="#7fcf5c" stroke-width="1"/><path d="M13.0 9.0 L16.6 13.399999999999999 H14.5 V17.0 H11.5 V13.399999999999999 H9.4 Z" fill="#f4fff0"/></svg></div>
<div style="position:absolute;left:451.95px;top:160.1px;width:26px;height:26.4px;box-sizing:border-box;border:1px solid #a0a8b4;border-radius:2px;background:linear-gradient(#fbfcfd,#eaeff5 50%,#cfdcea);"><svg style="position:absolute;left:0;top:0" width="26" height="26.4"><circle cx="13.0" cy="13.2" r="6.2" fill="#62b848" stroke="#7fcf5c" stroke-width="1"/><path d="M13.0 17.4 L16.6 13.0 H14.5 V9.399999999999999 H11.5 V13.0 H9.4 Z" fill="#f4fff0"/></svg></div>
<div style="position:absolute;left:480.7px;top:160.1px;width:26px;height:26.4px;box-sizing:border-box;border:1px solid #a0a8b4;border-radius:2px;background:linear-gradient(#fbfcfd,#eaeff5 50%,#cfdcea);"><svg style="position:absolute;left:0;top:0" width="26" height="26.4"><path d="M10.2 13.2 H15.8" stroke="#444" stroke-width="2"/></svg></div>
<div style="position:absolute;left:509.45px;top:160.1px;width:26px;height:26.4px;box-sizing:border-box;border:1px solid #a0a8b4;border-radius:2px;background:linear-gradient(#fbfcfd,#eaeff5 50%,#cfdcea);"><svg style="position:absolute;left:0;top:0" width="26" height="26.4"><path d="M13.0 9.899999999999999 L16.8 16.2 H9.2 Z" fill="#111"/></svg></div>
<div style="position:absolute;left:538.2px;top:160.1px;width:26px;height:26.4px;box-sizing:border-box;border:1px solid #a0a8b4;border-radius:2px;background:linear-gradient(#fbfcfd,#eaeff5 50%,#cfdcea);"><svg style="position:absolute;left:0;top:0" width="26" height="26.4"><path d="M9.5 10.399999999999999 H16.5 L13.0 16.4 Z" fill="#111"/></svg></div>
<div style="position:absolute;left:566.95px;top:160.1px;width:26px;height:26.4px;box-sizing:border-box;border:1px solid #a0a8b4;border-radius:2px;background:linear-gradient(#fbfcfd,#eaeff5 50%,#cfdcea);"><svg style="position:absolute;left:0;top:0" width="26" height="26.4"><path d="M9.2 13.2 H16.8" stroke="#444" stroke-width="1.6"/></svg></div>
<div style="position:absolute;left:595.7px;top:160.1px;width:26px;height:26.4px;box-sizing:border-box;border:1px solid #a0a8b4;border-radius:2px;background:linear-gradient(#fbfcfd,#eaeff5 50%,#cfdcea);"><svg style="position:absolute;left:0;top:0" width="26" height="26.4"><path d="M9.2 13.2 H16.8 M13.0 9.399999999999999 V17.0" stroke="#333" stroke-width="1.5"/></svg></div>
<div style="position:absolute;left:624.45px;top:160.1px;width:26px;height:26.4px;box-sizing:border-box;border:1px solid #a0a8b4;border-radius:2px;background:linear-gradient(#fbfcfd,#eaeff5 50%,#cfdcea);"><svg style="position:absolute;left:0;top:0" width="26" height="26.4"><g stroke="#111" stroke-width="1.5"><path d="M13.0 9.2 V17.2"/><path d="M9.4 11.0 L16.6 15.399999999999999"/><path d="M16.6 11.0 L9.4 15.399999999999999"/></g></svg></div>
<div style="position:absolute;left:653.2px;top:160.1px;width:26px;height:26.4px;box-sizing:border-box;border:1px solid #a0a8b4;border-radius:2px;background:linear-gradient(#fbfcfd,#eaeff5 50%,#cfdcea);"><svg style="position:absolute;left:0;top:0" width="26" height="26.4"><path d="M9.8 17.0 L16.8 10.0" stroke="#3a3ab8" stroke-width="3.2" stroke-linecap="round"/><path d="M9.8 17.0 L13.0 13.799999999999999" stroke="#c8182c" stroke-width="3.2" stroke-linecap="round"/></svg></div>
<div style="position:absolute;left:681.95px;top:160.1px;width:26px;height:26.4px;box-sizing:border-box;border:1px solid #a0a8b4;border-radius:2px;background:linear-gradient(#fbfcfd,#eaeff5 50%,#cfdcea);"><div style="position:absolute;left:6.6px;top:6.799999999999999px;width:12.8px;height:12.8px;background:linear-gradient(90deg,#f03c8c 0%,#f050a0 28%,#7050e8 36%,#5a70f0 62%,#20c8e8 72%,#30d0f0 100%);"></div></div>
<div style="position:absolute;left:39.5px;top:190.0px;width:39.3px;height:16.0px;box-sizing:border-box;background:linear-gradient(#d6d6d6,#c6c6c6);border-top:1px solid #f0f0f0;border-bottom:1px solid #8a8a8a;border-right:1px solid #9a9a9a;"></div>
<div style="position:absolute;left:39.5px;top:190.0px;width:39.3px;height:16.0px;line-height:14.8px;text-align:center;font-size:12.3px;color:#505050;">100.0</div>
<div style="position:absolute;left:79.5px;top:190.0px;width:39.5px;height:16.0px;box-sizing:border-box;background:#8dea88;border-right:1px solid rgba(60,85,115,0.38);border-bottom:1px solid rgba(60,85,115,0.38);line-height:15.6px;text-align:center;font-size:12.3px;letter-spacing:-0.45px;text-indent:0.45px;color:#162515;-webkit-text-stroke:0.15px #162515;">67.8</div>
<div style="position:absolute;left:119.0px;top:190.0px;width:39.5px;height:16.0px;box-sizing:border-box;background:#a6d188;border-right:1px solid rgba(60,85,115,0.38);border-bottom:1px solid rgba(60,85,115,0.38);line-height:15.6px;text-align:center;font-size:12.3px;letter-spacing:-0.45px;text-indent:0.45px;color:#1a2115;-webkit-text-stroke:0.15px #1a2115;">72.9</div>
<div style="position:absolute;left:158.5px;top:190.0px;width:39.5px;height:16.0px;box-sizing:border-box;background:#b3c488;border-right:1px solid rgba(60,85,115,0.38);border-bottom:1px solid rgba(60,85,115,0.38);line-height:15.6px;text-align:center;font-size:12.3px;letter-spacing:-0.45px;text-indent:0.45px;color:#1c1f15;-webkit-text-stroke:0.15px #1c1f15;">75.7</div>
<div style="position:absolute;left:198.0px;top:190.0px;width:39.0px;height:16.0px;box-sizing:border-box;background:#b0c888;border-right:1px solid rgba(60,85,115,0.38);border-bottom:1px solid rgba(60,85,115,0.38);line-height:15.6px;text-align:center;font-size:12.3px;letter-spacing:-0.45px;text-indent:0.45px;color:#1c2015;-webkit-text-stroke:0.15px #1c2015;">75.0</div>
<div style="position:absolute;left:237.0px;top:190.0px;width:39.5px;height:16.0px;box-sizing:border-box;background:#a8d088;border-right:1px solid rgba(60,85,115,0.38);border-bottom:1px solid rgba(60,85,115,0.38);line-height:15.6px;text-align:center;font-size:12.3px;letter-spacing:-0.45px;text-indent:0.45px;color:#1a2115;-webkit-text-stroke:0.15px #1a2115;">73.3</div>
<div style="position:absolute;left:276.5px;top:190.0px;width:39.5px;height:16.0px;box-sizing:border-box;background:#9add88;border-right:1px solid rgba(60,85,115,0.38);border-bottom:1px solid rgba(60,85,115,0.38);line-height:15.6px;text-align:center;font-size:12.3px;letter-spacing:-0.45px;text-indent:0.45px;color:#182315;-webkit-text-stroke:0.15px #182315;">70.6</div>
<div style="position:absolute;left:316.0px;top:190.0px;width:39.5px;height:16.0px;box-sizing:border-box;background:#abcc88;border-right:1px solid rgba(60,85,115,0.38);border-bottom:1px solid rgba(60,85,115,0.38);line-height:15.6px;text-align:center;font-size:12.3px;letter-spacing:-0.45px;text-indent:0.45px;color:#1b2015;-webkit-text-stroke:0.15px #1b2015;">74.0</div>
<div style="position:absolute;left:355.5px;top:190.0px;width:39.5px;height:16.0px;box-sizing:border-box;background:#accc88;border-right:1px solid rgba(60,85,115,0.38);border-bottom:1px solid rgba(60,85,115,0.38);line-height:15.6px;text-align:center;font-size:12.3px;letter-spacing:-0.45px;text-indent:0.45px;color:#1b2015;-webkit-text-stroke:0.15px #1b2015;">74.2</div>
<div style="position:absolute;left:395.0px;top:190.0px;width:39.0px;height:16.0px;box-sizing:border-box;background:#accb88;border-right:1px solid rgba(60,85,115,0.38);border-bottom:1px solid rgba(60,85,115,0.38);line-height:15.6px;text-align:center;font-size:12.3px;letter-spacing:-0.45px;text-indent:0.45px;color:#1b2015;-webkit-text-stroke:0.15px #1b2015;">74.3</div>
<div style="position:absolute;left:434.0px;top:190.0px;width:39.5px;height:16.0px;box-sizing:border-box;background:#d1a688;border-right:1px solid rgba(60,85,115,0.38);border-bottom:1px solid rgba(60,85,115,0.38);line-height:15.6px;text-align:center;font-size:12.3px;letter-spacing:-0.45px;text-indent:0.45px;color:#211a15;-webkit-text-stroke:0.15px #211a15;">81.9</div>
<div style="position:absolute;left:473.5px;top:190.0px;width:39.5px;height:16.0px;box-sizing:border-box;background:#e69188;border-right:1px solid rgba(60,85,115,0.38);border-bottom:1px solid rgba(60,85,115,0.38);line-height:15.6px;text-align:center;font-size:12.3px;letter-spacing:-0.45px;text-indent:0.45px;color:#241715;-webkit-text-stroke:0.15px #241715;">86.3</div>
<div style="position:absolute;left:513.0px;top:190.0px;width:39.5px;height:16.0px;box-sizing:border-box;background:#ec8c88;border-right:1px solid rgba(60,85,115,0.38);border-bottom:1px solid rgba(60,85,115,0.38);line-height:15.6px;text-align:center;font-size:12.3px;letter-spacing:-0.45px;text-indent:0.45px;color:#251615;-webkit-text-stroke:0.15px #251615;">87.5</div>
<div style="position:absolute;left:552.5px;top:190.0px;width:39.5px;height:16.0px;box-sizing:border-box;background:#e19688;border-right:1px solid rgba(60,85,115,0.38);border-bottom:1px solid rgba(60,85,115,0.38);line-height:15.6px;text-align:center;font-size:12.3px;letter-spacing:-0.45px;text-indent:0.45px;color:#241815;-webkit-text-stroke:0.15px #241815;">85.2</div>
<div style="position:absolute;left:592.0px;top:190.0px;width:39.0px;height:16.0px;box-sizing:border-box;background:#e29688;border-right:1px solid rgba(60,85,115,0.38);border-bottom:1px solid rgba(60,85,115,0.38);line-height:15.6px;text-align:center;font-size:12.3px;letter-spacing:-0.45px;text-indent:0.45px;color:#241815;-webkit-text-stroke:0.15px #241815;">85.4</div>
<div style="position:absolute;left:631.0px;top:190.0px;width:39.5px;height:16.0px;box-sizing:border-box;background:#df9888;border-right:1px solid rgba(60,85,115,0.38);border-bottom:1px solid rgba(60,85,115,0.38);line-height:15.6px;text-align:center;font-size:12.3px;letter-spacing:-0.45px;text-indent:0.45px;color:#231815;-webkit-text-stroke:0.15px #231815;">84.9</div>
<div style="position:absolute;left:670.5px;top:190.0px;width:39.5px;height:16.0px;box-sizing:border-box;background:#da9d88;border-right:1px solid rgba(60,85,115,0.38);border-bottom:1px solid rgba(60,85,115,0.38);line-height:15.6px;text-align:center;font-size:12.3px;letter-spacing:-0.45px;text-indent:0.45px;color:#221915;-webkit-text-stroke:0.15px #221915;">83.9</div>
<div style="position:absolute;left:39.5px;top:206.0px;width:39.3px;height:16.5px;box-sizing:border-box;background:linear-gradient(#d6d6d6,#c6c6c6);border-top:1px solid #f0f0f0;border-bottom:1px solid #8a8a8a;border-right:1px solid #9a9a9a;"></div>
<div style="position:absolute;left:39.5px;top:206.0px;width:39.3px;height:16.5px;line-height:15.3px;text-align:center;font-size:12.3px;color:#505050;">95.0</div>
<div style="position:absolute;left:79.5px;top:206.0px;width:39.5px;height:16.5px;box-sizing:border-box;background:#88ef88;border-right:1px solid rgba(60,85,115,0.38);border-bottom:1px solid rgba(60,85,115,0.38);line-height:16.1px;text-align:center;font-size:12.3px;letter-spacing:-0.45px;text-indent:0.45px;color:#152615;-webkit-text-stroke:0.15px #152615;">66.5</div>
<div style="position:absolute;left:119.0px;top:206.0px;width:39.5px;height:16.5px;box-sizing:border-box;background:#afc888;border-right:1px solid rgba(60,85,115,0.38);border-bottom:1px solid rgba(60,85,115,0.38);line-height:16.1px;text-align:center;font-size:12.3px;letter-spacing:-0.45px;text-indent:0.45px;color:#1c2015;-webkit-text-stroke:0.15px #1c2015;">74.8</div>
<div style="position:absolute;left:158.5px;top:206.0px;width:39.5px;height:16.5px;box-sizing:border-box;background:#b3c488;border-right:1px solid rgba(60,85,115,0.38);border-bottom:1px solid rgba(60,85,115,0.38);line-height:16.1px;text-align:center;font-size:12.3px;letter-spacing:-0.45px;text-indent:0.45px;color:#1c1f15;-webkit-text-stroke:0.15px #1c1f15;">75.7</div>
<div style="position:absolute;left:198.0px;top:206.0px;width:39.0px;height:16.5px;box-sizing:border-box;background:#aec988;border-right:1px solid rgba(60,85,115,0.38);border-bottom:1px solid rgba(60,85,115,0.38);line-height:16.1px;text-align:center;font-size:12.3px;letter-spacing:-0.45px;text-indent:0.45px;color:#1b2015;-webkit-text-stroke:0.15px #1b2015;">74.6</div>
<div style="position:absolute;left:237.0px;top:206.0px;width:39.5px;height:16.5px;box-sizing:border-box;background:#98df88;border-right:1px solid rgba(60,85,115,0.38);border-bottom:1px solid rgba(60,85,115,0.38);line-height:16.1px;text-align:center;font-size:12.3px;letter-spacing:-0.45px;text-indent:0.45px;color:#182315;-webkit-text-stroke:0.15px #182315;">70.1</div>
<div style="position:absolute;left:276.5px;top:206.0px;width:39.5px;height:16.5px;box-sizing:border-box;background:#88ed8a;border-right:1px solid rgba(60,85,115,0.38);border-bottom:1px solid rgba(60,85,115,0.38);line-height:16.1px;text-align:center;font-size:12.3px;letter-spacing:-0.45px;text-indent:0.45px;color:#152516;-webkit-text-stroke:0.15px #152516;">66.1</div>
<div style="position:absolute;left:316.0px;top:206.0px;width:39.5px;height:16.5px;box-sizing:border-box;background:#a9ce88;border-right:1px solid rgba(60,85,115,0.38);border-bottom:1px solid rgba(60,85,115,0.38);line-height:16.1px;text-align:center;font-size:12.3px;letter-spacing:-0.45px;text-indent:0.45px;color:#1b2015;-webkit-text-stroke:0.15px #1b2015;">73.6</div>
<div style="position:absolute;left:355.5px;top:206.0px;width:39.5px;height:16.5px;box-sizing:border-box;background:#98df88;border-right:1px solid rgba(60,85,115,0.38);border-bottom:1px solid rgba(60,85,115,0.38);line-height:16.1px;text-align:center;font-size:12.3px;letter-spacing:-0.45px;text-indent:0.45px;color:#182315;-webkit-text-stroke:0.15px #182315;">70.1</div>
<div style="position:absolute;left:395.0px;top:206.0px;width:39.0px;height:16.5px;box-sizing:border-box;background:#accc88;border-right:1px solid rgba(60,85,115,0.38);border-bottom:1px solid rgba(60,85,115,0.38);line-height:16.1px;text-align:center;font-size:12.3px;letter-spacing:-0.45px;text-indent:0.45px;color:#1b2015;-webkit-text-stroke:0.15px #1b2015;">74.1</div>
<div style="position:absolute;left:434.0px;top:206.0px;width:39.5px;height:16.5px;box-sizing:border-box;background:#d3a488;border-right:1px solid rgba(60,85,115,0.38);border-bottom:1px solid rgba(60,85,115,0.38);line-height:16.1px;text-align:center;font-size:12.3px;letter-spacing:-0.45px;text-indent:0.45px;color:#211a15;-webkit-text-stroke:0.15px #211a15;">82.3</div>
<div style="position:absolute;left:473.5px;top:206.0px;width:39.5px;height:16.5px;box-sizing:border-box;background:#e98e88;border-right:1px solid rgba(60,85,115,0.38);border-bottom:1px solid rgba(60,85,115,0.38);line-height:16.1px;text-align:center;font-size:12.3px;letter-spacing:-0.45px;text-indent:0.45px;color:#251615;-webkit-text-stroke:0.15px #251615;">87.0</div>
<div style="position:absolute;left:513.0px;top:206.0px;width:39.5px;height:16.5px;box-sizing:border-box;background:#ef8888;border-right:1px solid rgba(60,85,115,0.38);border-bottom:1px solid rgba(60,85,115,0.38);line-height:16.1px;text-align:center;font-size:12.3px;letter-spacing:-0.45px;text-indent:0.45px;color:#261515;-webkit-text-stroke:0.15px #261515;">88.2</div>
<div style="position:absolute;left:552.5px;top:206.0px;width:39.5px;height:16.5px;box-sizing:border-box;background:#e49388;border-right:1px solid rgba(60,85,115,0.38);border-bottom:1px solid rgba(60,85,115,0.38);line-height:16.1px;text-align:center;font-size:12.3px;letter-spacing:-0.45px;text-indent:0.45px;color:#241715;-webkit-text-stroke:0.15px #241715;">85.9</div>
<div style="position:absolute;left:592.0px;top:206.0px;width:39.0px;height:16.5px;box-sizing:border-box;background:#e59288;border-right:1px solid rgba(60,85,115,0.38);border-bottom:1px solid rgba(60,85,115,0.38);line-height:16.1px;text-align:center;font-size:12.3px;letter-spacing:-0.45px;text-indent:0.45px;color:#241715;-webkit-text-stroke:0.15px #241715;">86.1</div>
<div style="position:absolute;left:631.0px;top:206.0px;width:39.5px;height:16.5px;box-sizing:border-box;background:#db9c88;border-right:1px solid rgba(60,85,115,0.38);border-bottom:1px solid rgba(60,85,115,0.38);line-height:16.1px;text-align:center;font-size:12.3px;letter-spacing:-0.45px;text-indent:0.45px;color:#231815;-webkit-text-stroke:0.15px #231815;">84.0</div>
<div style="position:absolute;left:670.5px;top:206.0px;width:39.5px;height:16.5px;box-sizing:border-box;background:#cea988;border-right:1px solid rgba(60,85,115,0.38);border-bottom:1px solid rgba(60,85,115,0.38);line-height:16.1px;text-align:center;font-size:12.3px;letter-spacing:-0.45px;text-indent:0.45px;color:#201b15;-webkit-text-stroke:0.15px #201b15;">81.3</div>
<div style="position:absolute;left:39.5px;top:222.5px;width:39.3px;height:16.5px;box-sizing:border-box;background:linear-gradient(#d6d6d6,#c6c6c6);border-top:1px solid #f0f0f0;border-bottom:1px solid #8a8a8a;border-right:1px solid #9a9a9a;"></div>
<div style="position:absolute;left:39.5px;top:222.5px;width:39.3px;height:16.5px;line-height:15.3px;text-align:center;font-size:12.3px;color:#505050;">90.0</div>
<div style="position:absolute;left:79.5px;top:222.5px;width:39.5px;height:16.5px;box-sizing:border-box;background:#88e88f;border-right:1px solid rgba(60,85,115,0.38);border-bottom:1px solid rgba(60,85,115,0.38);line-height:16.1px;text-align:center;font-size:12.3px;letter-spacing:-0.45px;text-indent:0.45px;color:#152516;-webkit-text-stroke:0.15px #152516;">65.1</div>
<div style="position:absolute;left:119.0px;top:222.5px;width:39.5px;height:16.5px;box-sizing:border-box;background:#9add88;border-right:1px solid rgba(60,85,115,0.38);border-bottom:1px solid rgba(60,85,115,0.38);line-height:16.1px;text-align:center;font-size:12.3px;letter-spacing:-0.45px;text-indent:0.45px;color:#182315;-webkit-text-stroke:0.15px #182315;">70.6</div>
<div style="position:absolute;left:158.5px;top:222.5px;width:39.5px;height:16.5px;box-sizing:border-box;background:#abcc88;border-right:1px solid rgba(60,85,115,0.38);border-bottom:1px solid rgba(60,85,115,0.38);line-height:16.1px;text-align:center;font-size:12.3px;letter-spacing:-0.45px;text-indent:0.45px;color:#1b2015;-webkit-text-stroke:0.15px #1b2015;">73.9</div>
<div style="position:absolute;left:198.0px;top:222.5px;width:39.0px;height:16.5px;box-sizing:border-box;background:#92e588;border-right:1px solid rgba(60,85,115,0.38);border-bottom:1px solid rgba(60,85,115,0.38);line-height:16.1px;text-align:center;font-size:12.3px;letter-spacing:-0.45px;text-indent:0.45px;color:#172415;-webkit-text-stroke:0.15px #172415;">68.8</div>
<div style="position:absolute;left:237.0px;top:222.5px;width:39.5px;height:16.5px;box-sizing:border-box;background:#96e288;border-right:1px solid rgba(60,85,115,0.38);border-bottom:1px solid rgba(60,85,115,0.38);line-height:16.1px;text-align:center;font-size:12.3px;letter-spacing:-0.45px;text-indent:0.45px;color:#182415;-webkit-text-stroke:0.15px #182415;">69.5</div>
<div style="position:absolute;left:276.5px;top:222.5px;width:39.5px;height:16.5px;box-sizing:border-box;background:#8cec88;border-right:1px solid rgba(60,85,115,0.38);border-bottom:1px solid rgba(60,85,115,0.38);line-height:16.1px;text-align:center;font-size:12.3px;letter-spacing:-0.45px;text-indent:0.45px;color:#162515;-webkit-text-stroke:0.15px #162515;">67.5</div>
<div style="position:absolute;left:316.0px;top:222.5px;width:39.5px;height:16.5px;box-sizing:border-box;background:#a4d388;border-right:1px solid rgba(60,85,115,0.38);border-bottom:1px solid rgba(60,85,115,0.38);line-height:16.1px;text-align:center;font-size:12.3px;letter-spacing:-0.45px;text-indent:0.45px;color:#1a2115;-webkit-text-stroke:0.15px #1a2115;">72.5</div>
<div style="position:absolute;left:355.5px;top:222.5px;width:39.5px;height:16.5px;box-sizing:border-box;background:#97e088;border-right:1px solid rgba(60,85,115,0.38);border-bottom:1px solid rgba(60,85,115,0.38);line-height:16.1px;text-align:center;font-size:12.3px;letter-spacing:-0.45px;text-indent:0.45px;color:#182315;-webkit-text-stroke:0.15px #182315;">69.9</div>
<div style="position:absolute;left:395.0px;top:222.5px;width:39.0px;height:16.5px;box-sizing:border-box;background:#abcc88;border-right:1px solid rgba(60,85,115,0.38);border-bottom:1px solid rgba(60,85,115,0.38);line-height:16.1px;text-align:center;font-size:12.3px;letter-spacing:-0.45px;text-indent:0.45px;color:#1b2015;-webkit-text-stroke:0.15px #1b2015;">74.0</div>
<div style="position:absolute;left:434.0px;top:222.5px;width:39.5px;height:16.5px;box-sizing:border-box;background:#d5a388;border-right:1px solid rgba(60,85,115,0.38);border-bottom:1px solid rgba(60,85,115,0.38);line-height:16.1px;text-align:center;font-size:12.3px;letter-spacing:-0.45px;text-indent:0.45px;color:#221a15;-webkit-text-stroke:0.15px #221a15;">82.7</div>
<div style="position:absolute;left:473.5px;top:222.5px;width:39.5px;height:16.5px;box-sizing:border-box;background:#ef8888;border-right:1px solid rgba(60,85,115,0.38);border-bottom:1px solid rgba(60,85,115,0.38);line-height:16.1px;text-align:center;font-size:12.3px;letter-spacing:-0.45px;text-indent:0.45px;color:#261515;-webkit-text-stroke:0.15px #261515;">88.2</div>
<div style="position:absolute;left:513.0px;top:222.5px;width:39.5px;height:16.5px;box-sizing:border-box;background:#e59288;border-right:1px solid rgba(60,85,115,0.38);border-bottom:1px solid rgba(60,85,115,0.38);line-height:16.1px;text-align:center;font-size:12.3px;letter-spacing:-0.45px;text-indent:0.45px;color:#241715;-webkit-text-stroke:0.15px #241715;">86.0</div>
<div style="position:absolute;left:552.5px;top:222.5px;width:39.5px;height:16.5px;box-sizing:border-box;background:#e98e88;border-right:1px solid rgba(60,85,115,0.38);border-bottom:1px solid rgba(60,85,115,0.38);line-height:16.1px;text-align:center;font-size:12.3px;letter-spacing:-0.45px;text-indent:0.45px;color:#251615;-webkit-text-stroke:0.15px #251615;">87.0</div>
<div style="position:absolute;left:592.0px;top:222.5px;width:39.0px;height:16.5px;box-sizing:border-box;background:#e89088;border-right:1px solid rgba(60,85,115,0.38);border-bottom:1px solid rgba(60,85,115,0.38);line-height:16.1px;text-align:center;font-size:12.3px;letter-spacing:-0.45px;text-indent:0.45px;color:#251715;-webkit-text-stroke:0.15px #251715;">86.6</div>
<div style="position:absolute;left:631.0px;top:222.5px;width:39.5px;height:16.5px;box-sizing:border-box;background:#da9d88;border-right:1px solid rgba(60,85,115,0.38);border-bottom:1px solid rgba(60,85,115,0.38);line-height:16.1px;text-align:center;font-size:12.3px;letter-spacing:-0.45px;text-indent:0.45px;color:#221915;-webkit-text-stroke:0.15px #221915;">83.8</div>
<div style="position:absolute;left:670.5px;top:222.5px;width:39.5px;height:16.5px;box-sizing:border-box;background:#ccac88;border-right:1px solid rgba(60,85,115,0.38);border-bottom:1px solid rgba(60,85,115,0.38);line-height:16.1px;text-align:center;font-size:12.3px;letter-spacing:-0.45px;text-indent:0.45px;color:#201b15;-webkit-text-stroke:0.15px #201b15;">80.8</div>
<div style="position:absolute;left:39.5px;top:239.0px;width:39.3px;height:16.5px;box-sizing:border-box;background:linear-gradient(#d6d6d6,#c6c6c6);border-top:1px solid #f0f0f0;border-bottom:1px solid #8a8a8a;border-right:1px solid #9a9a9a;"></div>
<div style="position:absolute;left:39.5px;top:239.0px;width:39.3px;height:16.5px;line-height:15.3px;text-align:center;font-size:12.3px;color:#505050;">85.0</div>
<div style="position:absolute;left:79.5px;top:239.0px;width:39.5px;height:16.5px;box-sizing:border-box;background:#88e592;border-right:1px solid rgba(60,85,115,0.38);border-bottom:1px solid rgba(60,85,115,0.38);line-height:16.1px;text-align:center;font-size:12.3px;letter-spacing:-0.45px;text-indent:0.45px;color:#152417;-webkit-text-stroke:0.15px #152417;">64.4</div>
<div style="position:absolute;left:119.0px;top:239.0px;width:39.5px;height:16.5px;box-sizing:border-box;background:#a0d788;border-right:1px solid rgba(60,85,115,0.38);border-bottom:1px solid rgba(60,85,115,0.38);line-height:16.1px;text-align:center;font-size:12.3px;letter-spacing:-0.45px;text-indent:0.45px;color:#192215;-webkit-text-stroke:0.15px #192215;">71.7</div>
<div style="position:absolute;left:158.5px;top:239.0px;width:39.5px;height:16.5px;box-sizing:border-box;background:#a7d188;border-right:1px solid rgba(60,85,115,0.38);border-bottom:1px solid rgba(60,85,115,0.38);line-height:16.1px;text-align:center;font-size:12.3px;letter-spacing:-0.45px;text-indent:0.45px;color:#1a2115;-webkit-text-stroke:0.15px #1a2115;">73.1</div>
<div style="position:absolute;left:198.0px;top:239.0px;width:39.0px;height:16.5px;box-sizing:border-box;background:#8ee988;border-right:1px solid rgba(60,85,115,0.38);border-bottom:1px solid rgba(60,85,115,0.38);line-height:16.1px;text-align:center;font-size:12.3px;letter-spacing:-0.45px;text-indent:0.45px;color:#162515;-webkit-text-stroke:0.15px #162515;">67.9</div>
<div style="position:absolute;left:237.0px;top:239.0px;width:39.5px;height:16.5px;box-sizing:border-box;background:#92e588;border-right:1px solid rgba(60,85,115,0.38);border-bottom:1px solid rgba(60,85,115,0.38);line-height:16.1px;text-align:center;font-size:12.3px;letter-spacing:-0.45px;text-indent:0.45px;color:#172415;-webkit-text-stroke:0.15px #172415;">68.9</div>
<div style="position:absolute;left:276.5px;top:239.0px;width:39.5px;height:16.5px;box-sizing:border-box;background:#9add88;border-right:1px solid rgba(60,85,115,0.38);border-bottom:1px solid rgba(60,85,115,0.38);line-height:16.1px;text-align:center;font-size:12.3px;letter-spacing:-0.45px;text-indent:0.45px;color:#182315;-webkit-text-stroke:0.15px #182315;">70.6</div>
<div style="position:absolute;left:316.0px;top:239.0px;width:39.5px;height:16.5px;box-sizing:border-box;background:#9ade88;border-right:1px solid rgba(60,85,115,0.38);border-bottom:1px solid rgba(60,85,115,0.38);line-height:16.1px;text-align:center;font-size:12.3px;letter-spacing:-0.45px;text-indent:0.45px;color:#182315;-webkit-text-stroke:0.15px #182315;">70.4</div>
<div style="position:absolute;left:355.5px;top:239.0px;width:39.5px;height:16.5px;box-sizing:border-box;background:#91e788;border-right:1px solid rgba(60,85,115,0.38);border-bottom:1px solid rgba(60,85,115,0.38);line-height:16.1px;text-align:center;font-size:12.3px;letter-spacing:-0.45px;text-indent:0.45px;color:#172415;-webkit-text-stroke:0.15px #172415;">68.4</div>
<div style="position:absolute;left:395.0px;top:239.0px;width:39.0px;height:16.5px;box-sizing:border-box;background:#a2d588;border-right:1px solid rgba(60,85,115,0.38);border-bottom:1px solid rgba(60,85,115,0.38);line-height:16.1px;text-align:center;font-size:12.3px;letter-spacing:-0.45px;text-indent:0.45px;color:#192215;-webkit-text-stroke:0.15px #192215;">72.0</div>
<div style="position:absolute;left:434.0px;top:239.0px;width:39.5px;height:16.5px;box-sizing:border-box;background:#c6b188;border-right:1px solid rgba(60,85,115,0.38);border-bottom:1px solid rgba(60,85,115,0.38);line-height:16.1px;text-align:center;font-size:12.3px;letter-spacing:-0.45px;text-indent:0.45px;color:#1f1c15;-webkit-text-stroke:0.15px #1f1c15;">79.6</div>
<div style="position:absolute;left:473.5px;top:239.0px;width:39.5px;height:16.5px;box-sizing:border-box;background:#f08888;border-right:1px solid rgba(60,85,115,0.38);border-bottom:1px solid rgba(60,85,115,0.38);line-height:16.1px;text-align:center;font-size:12.3px;letter-spacing:-0.45px;text-indent:0.45px;color:#261515;-webkit-text-stroke:0.15px #261515;">88.3</div>
<div style="position:absolute;left:513.0px;top:239.0px;width:39.5px;height:16.5px;box-sizing:border-box;background:#e89088;border-right:1px solid rgba(60,85,115,0.38);border-bottom:1px solid rgba(60,85,115,0.38);line-height:16.1px;text-align:center;font-size:12.3px;letter-spacing:-0.45px;text-indent:0.45px;color:#251715;-webkit-text-stroke:0.15px #251715;">86.6</div>
<div style="position:absolute;left:552.5px;top:239.0px;width:39.5px;height:16.5px;box-sizing:border-box;background:#e09788;border-right:1px solid rgba(60,85,115,0.38);border-bottom:1px solid rgba(60,85,115,0.38);line-height:16.1px;text-align:center;font-size:12.3px;letter-spacing:-0.45px;text-indent:0.45px;color:#231815;-webkit-text-stroke:0.15px #231815;">85.0</div>
<div style="position:absolute;left:592.0px;top:239.0px;width:39.0px;height:16.5px;box-sizing:border-box;background:#e39488;border-right:1px solid rgba(60,85,115,0.38);border-bottom:1px solid rgba(60,85,115,0.38);line-height:16.1px;text-align:center;font-size:12.3px;letter-spacing:-0.45px;text-indent:0.45px;color:#241715;-webkit-text-stroke:0.15px #241715;">85.7</div>
<div style="position:absolute;left:631.0px;top:239.0px;width:39.5px;height:16.5px;box-sizing:border-box;background:#c9ae88;border-right:1px solid rgba(60,85,115,0.38);border-bottom:1px solid rgba(60,85,115,0.38);line-height:16.1px;text-align:center;font-size:12.3px;letter-spacing:-0.45px;text-indent:0.45px;color:#201b15;-webkit-text-stroke:0.15px #201b15;">80.2</div>
<div style="position:absolute;left:670.5px;top:239.0px;width:39.5px;height:16.5px;box-sizing:border-box;background:#b9be88;border-right:1px solid rgba(60,85,115,0.38);border-bottom:1px solid rgba(60,85,115,0.38);line-height:16.1px;text-align:center;font-size:12.3px;letter-spacing:-0.45px;text-indent:0.45px;color:#1d1e15;-webkit-text-stroke:0.15px #1d1e15;">76.8</div>
<div style="position:absolute;left:39.5px;top:255.5px;width:39.3px;height:16.5px;box-sizing:border-box;background:linear-gradient(#d6d6d6,#c6c6c6);border-top:1px solid #f0f0f0;border-bottom:1px solid #8a8a8a;border-right:1px solid #9a9a9a;"></div>
<div style="position:absolute;left:39.5px;top:255.5px;width:39.3px;height:16.5px;line-height:15.3px;text-align:center;font-size:12.3px;color:#505050;">80.0</div>
<div style="position:absolute;left:79.5px;top:255.5px;width:39.5px;height:16.5px;box-sizing:border-box;background:#88e097;border-right:1px solid rgba(60,85,115,0.38);border-bottom:1px solid rgba(60,85,115,0.38);line-height:16.1px;text-align:center;font-size:12.3px;letter-spacing:-0.45px;text-indent:0.45px;color:#152318;-webkit-text-stroke:0.15px #152318;">63.4</div>
<div style="position:absolute;left:119.0px;top:255.5px;width:39.5px;height:16.5px;box-sizing:border-box;background:#a4d388;border-right:1px solid rgba(60,85,115,0.38);border-bottom:1px solid rgba(60,85,115,0.38);line-height:16.1px;text-align:center;font-size:12.3px;letter-spacing:-0.45px;text-indent:0.45px;color:#1a2115;-webkit-text-stroke:0.15px #1a2115;">72.6</div>
<div style="position:absolute;left:158.5px;top:255.5px;width:39.5px;height:16.5px;box-sizing:border-box;background:#a9ce88;border-right:1px solid rgba(60,85,115,0.38);border-bottom:1px solid rgba(60,85,115,0.38);line-height:16.1px;text-align:center;font-size:12.3px;letter-spacing:-0.45px;text-indent:0.45px;color:#1b2015;-webkit-text-stroke:0.15px #1b2015;">73.6</div>
<div style="position:absolute;left:198.0px;top:255.5px;width:39.0px;height:16.5px;box-sizing:border-box;background:#88ef88;border-right:1px solid rgba(60,85,115,0.38);border-bottom:1px solid rgba(60,85,115,0.38);line-height:16.1px;text-align:center;font-size:12.3px;letter-spacing:-0.45px;text-indent:0.45px;color:#152615;-webkit-text-stroke:0.15px #152615;">66.8</div>
<div style="position:absolute;left:237.0px;top:255.5px;width:39.5px;height:16.5px;box-sizing:border-box;background:#88e691;border-right:1px solid rgba(60,85,115,0.38);border-bottom:1px solid rgba(60,85,115,0.38);line-height:16.1px;text-align:center;font-size:12.3px;letter-spacing:-0.45px;text-indent:0.45px;color:#152417;-webkit-text-stroke:0.15px #152417;">64.6</div>
<div style="position:absolute;left:276.5px;top:255.5px;width:39.5px;height:16.5px;box-sizing:border-box;background:#97e088;border-right:1px solid rgba(60,85,115,0.38);border-bottom:1px solid rgba(60,85,115,0.38);line-height:16.1px;text-align:center;font-size:12.3px;letter-spacing:-0.45px;text-indent:0.45px;color:#182315;-webkit-text-stroke:0.15px #182315;">69.9</div>
<div style="position:absolute;left:316.0px;top:255.5px;width:39.5px;height:16.5px;box-sizing:border-box;background:#9add88;border-right:1px solid rgba(60,85,115,0.38);border-bottom:1px solid rgba(60,85,115,0.38);line-height:16.1px;text-align:center;font-size:12.3px;letter-spacing:-0.45px;text-indent:0.45px;color:#182315;-webkit-text-stroke:0.15px #182315;">70.5</div>
<div style="position:absolute;left:355.5px;top:255.5px;width:39.5px;height:16.5px;box-sizing:border-box;background:#88ec8b;border-right:1px solid rgba(60,85,115,0.38);border-bottom:1px solid rgba(60,85,115,0.38);line-height:16.1px;text-align:center;font-size:12.3px;letter-spacing:-0.45px;text-indent:0.45px;color:#152516;-webkit-text-stroke:0.15px #152516;">66.0</div>
<div style="position:absolute;left:395.0px;top:255.5px;width:39.0px;height:16.5px;box-sizing:border-box;background:#93e488;border-right:1px solid rgba(60,85,115,0.38);border-bottom:1px solid rgba(60,85,115,0.38);line-height:16.1px;text-align:center;font-size:12.3px;letter-spacing:-0.45px;text-indent:0.45px;color:#172415;-webkit-text-stroke:0.15px #172415;">69.0</div>
<div style="position:absolute;left:434.0px;top:255.5px;width:39.5px;height:16.5px;box-sizing:border-box;background:#c3b488;border-right:1px solid rgba(60,85,115,0.38);border-bottom:1px solid rgba(60,85,115,0.38);line-height:16.1px;text-align:center;font-size:12.3px;letter-spacing:-0.45px;text-indent:0.45px;color:#1f1c15;-webkit-text-stroke:0.15px #1f1c15;">79.0</div>
<div style="position:absolute;left:473.5px;top:255.5px;width:39.5px;height:16.5px;box-sizing:border-box;background:#ee8988;border-right:1px solid rgba(60,85,115,0.38);border-bottom:1px solid rgba(60,85,115,0.38);line-height:16.1px;text-align:center;font-size:12.3px;letter-spacing:-0.45px;text-indent:0.45px;color:#261515;-webkit-text-stroke:0.15px #261515;">87.9</div>
<div style="position:absolute;left:513.0px;top:255.5px;width:39.5px;height:16.5px;box-sizing:border-box;background:#e39588;border-right:1px solid rgba(60,85,115,0.38);border-bottom:1px solid rgba(60,85,115,0.38);line-height:16.1px;text-align:center;font-size:12.3px;letter-spacing:-0.45px;text-indent:0.45px;color:#241715;-webkit-text-stroke:0.15px #241715;">85.6</div>
<div style="position:absolute;left:552.5px;top:255.5px;width:39.5px;height:16.5px;box-sizing:border-box;background:#d6a188;border-right:1px solid rgba(60,85,115,0.38);border-bottom:1px solid rgba(60,85,115,0.38);line-height:16.1px;text-align:center;font-size:12.3px;letter-spacing:-0.45px;text-indent:0.45px;color:#221915;-webkit-text-stroke:0.15px #221915;">83.0</div>
<div style="position:absolute;left:592.0px;top:255.5px;width:39.0px;height:16.5px;box-sizing:border-box;background:#cfa888;border-right:1px solid rgba(60,85,115,0.38);border-bottom:1px solid rgba(60,85,115,0.38);line-height:16.1px;text-align:center;font-size:12.3px;letter-spacing:-0.45px;text-indent:0.45px;color:#211a15;-webkit-text-stroke:0.15px #211a15;">81.4</div>
<div style="position:absolute;left:631.0px;top:255.5px;width:39.5px;height:16.5px;box-sizing:border-box;background:#c3b488;border-right:1px solid rgba(60,85,115,0.38);border-bottom:1px solid rgba(60,85,115,0.38);line-height:16.1px;text-align:center;font-size:12.3px;letter-spacing:-0.45px;text-indent:0.45px;color:#1f1c15;-webkit-text-stroke:0.15px #1f1c15;">79.0</div>
<div style="position:absolute;left:670.5px;top:255.5px;width:39.5px;height:16.5px;box-sizing:border-box;background:#a8d088;border-right:1px solid rgba(60,85,115,0.38);border-bottom:1px solid rgba(60,85,115,0.38);line-height:16.1px;text-align:center;font-size:12.3px;letter-spacing:-0.45px;text-indent:0.45px;color:#1a2115;-webkit-text-stroke:0.15px #1a2115;">73.3</div>
<div style="position:absolute;left:39.5px;top:272.0px;width:39.3px;height:16.5px;box-sizing:border-box;background:linear-gradient(#d6d6d6,#c6c6c6);border-top:1px solid #f0f0f0;border-bottom:1px solid #8a8a8a;border-right:1px solid #9a9a9a;"></div>
<div style="position:absolute;left:39.5px;top:272.0px;width:39.3px;height:16.5px;line-height:15.3px;text-align:center;font-size:12.3px;color:#505050;">75.0</div>
<div style="position:absolute;left:79.5px;top:272.0px;width:39.5px;height:16.5px;box-sizing:border-box;background:#88d1a6;border-right:1px solid rgba(60,85,115,0.38);border-bottom:1px solid rgba(60,85,115,0.38);line-height:16.1px;text-align:center;font-size:12.3px;letter-spacing:-0.45px;text-indent:0.45px;color:#15211a;-webkit-text-stroke:0.15px #15211a;">60.3</div>
<div style="position:absolute;left:119.0px;top:272.0px;width:39.5px;height:16.5px;box-sizing:border-box;background:#9eda88;border-right:1px solid rgba(60,85,115,0.38);border-bottom:1px solid rgba(60,85,115,0.38);line-height:16.1px;text-align:center;font-size:12.3px;letter-spacing:-0.45px;text-indent:0.45px;color:#192215;-webkit-text-stroke:0.15px #192215;">71.2</div>
<div style="position:absolute;left:158.5px;top:272.0px;width:39.5px;height:16.5px;box-sizing:border-box;background:#9ade88;border-right:1px solid rgba(60,85,115,0.38);border-bottom:1px solid rgba(60,85,115,0.38);line-height:16.1px;text-align:center;font-size:12.3px;letter-spacing:-0.45px;text-indent:0.45px;color:#182315;-webkit-text-stroke:0.15px #182315;">70.3</div>
<div style="position:absolute;left:198.0px;top:272.0px;width:39.0px;height:16.5px;box-sizing:border-box;background:#88eb8c;border-right:1px solid rgba(60,85,115,0.38);border-bottom:1px solid rgba(60,85,115,0.38);line-height:16.1px;text-align:center;font-size:12.3px;letter-spacing:-0.45px;text-indent:0.45px;color:#152516;-webkit-text-stroke:0.15px #152516;">65.6</div>
<div style="position:absolute;left:237.0px;top:272.0px;width:39.5px;height:16.5px;box-sizing:border-box;background:#88e592;border-right:1px solid rgba(60,85,115,0.38);border-bottom:1px solid rgba(60,85,115,0.38);line-height:16.1px;text-align:center;font-size:12.3px;letter-spacing:-0.45px;text-indent:0.45px;color:#152417;-webkit-text-stroke:0.15px #152417;">64.3</div>
<div style="position:absolute;left:276.5px;top:272.0px;width:39.5px;height:16.5px;box-sizing:border-box;background:#8bec88;border-right:1px solid rgba(60,85,115,0.38);border-bottom:1px solid rgba(60,85,115,0.38);line-height:16.1px;text-align:center;font-size:12.3px;letter-spacing:-0.45px;text-indent:0.45px;color:#162515;-webkit-text-stroke:0.15px #162515;">67.3</div>
<div style="position:absolute;left:316.0px;top:272.0px;width:39.5px;height:16.5px;box-sizing:border-box;background:#92e588;border-right:1px solid rgba(60,85,115,0.38);border-bottom:1px solid rgba(60,85,115,0.38);line-height:16.1px;text-align:center;font-size:12.3px;letter-spacing:-0.45px;text-indent:0.45px;color:#172415;-webkit-text-stroke:0.15px #172415;">68.8</div>
<div style="position:absolute;left:355.5px;top:272.0px;width:39.5px;height:16.5px;box-sizing:border-box;background:#88e791;border-right:1px solid rgba(60,85,115,0.38);border-bottom:1px solid rgba(60,85,115,0.38);line-height:16.1px;text-align:center;font-size:12.3px;letter-spacing:-0.45px;text-indent:0.45px;color:#152417;-webkit-text-stroke:0.15px #152417;">64.8</div>
<div style="position:absolute;left:395.0px;top:272.0px;width:39.0px;height:16.5px;box-sizing:border-box;background:#88eb8c;border-right:1px solid rgba(60,85,115,0.38);border-bottom:1px solid rgba(60,85,115,0.38);line-height:16.1px;text-align:center;font-size:12.3px;letter-spacing:-0.45px;text-indent:0.45px;color:#152516;-webkit-text-stroke:0.15px #152516;">65.6</div>
<div style="position:absolute;left:434.0px;top:272.0px;width:39.5px;height:16.5px;box-sizing:border-box;background:#b1c788;border-right:1px solid rgba(60,85,115,0.38);border-bottom:1px solid rgba(60,85,115,0.38);line-height:16.1px;text-align:center;font-size:12.3px;letter-spacing:-0.45px;text-indent:0.45px;color:#1c1f15;-webkit-text-stroke:0.15px #1c1f15;">75.1</div>
<div style="position:absolute;left:473.5px;top:272.0px;width:39.5px;height:16.5px;box-sizing:border-box;background:#e69188;border-right:1px solid rgba(60,85,115,0.38);border-bottom:1px solid rgba(60,85,115,0.38);line-height:16.1px;text-align:center;font-size:12.3px;letter-spacing:-0.45px;text-indent:0.45px;color:#241715;-webkit-text-stroke:0.15px #241715;">86.2</div>
<div style="position:absolute;left:513.0px;top:272.0px;width:39.5px;height:16.5px;box-sizing:border-box;background:#e69188;border-right:1px solid rgba(60,85,115,0.38);border-bottom:1px solid rgba(60,85,115,0.38);line-height:16.1px;text-align:center;font-size:12.3px;letter-spacing:-0.45px;text-indent:0.45px;color:#241715;-webkit-text-stroke:0.15px #241715;">86.3</div>
<div style="position:absolute;left:552.5px;top:272.0px;width:39.5px;height:16.5px;box-sizing:border-box;background:#d5a288;border-right:1px solid rgba(60,85,115,0.38);border-bottom:1px solid rgba(60,85,115,0.38);line-height:16.1px;text-align:center;font-size:12.3px;letter-spacing:-0.45px;text-indent:0.45px;color:#221915;-webkit-text-stroke:0.15px #221915;">82.9</div>
<div style="position:absolute;left:592.0px;top:272.0px;width:39.0px;height:16.5px;box-sizing:border-box;background:#c4b388;border-right:1px solid rgba(60,85,115,0.38);border-bottom:1px solid rgba(60,85,115,0.38);line-height:16.1px;text-align:center;font-size:12.3px;letter-spacing:-0.45px;text-indent:0.45px;color:#1f1c15;-webkit-text-stroke:0.15px #1f1c15;">79.2</div>
<div style="position:absolute;left:631.0px;top:272.0px;width:39.5px;height:16.5px;box-sizing:border-box;background:#b4c388;border-right:1px solid rgba(60,85,115,0.38);border-bottom:1px solid rgba(60,85,115,0.38);line-height:16.1px;text-align:center;font-size:12.3px;letter-spacing:-0.45px;text-indent:0.45px;color:#1c1f15;-webkit-text-stroke:0.15px #1c1f15;">75.8</div>
<div style="position:absolute;left:670.5px;top:272.0px;width:39.5px;height:16.5px;box-sizing:border-box;background:#9fd988;border-right:1px solid rgba(60,85,115,0.38);border-bottom:1px solid rgba(60,85,115,0.38);line-height:16.1px;text-align:center;font-size:12.3px;letter-spacing:-0.45px;text-indent:0.45px;color:#192215;-webkit-text-stroke:0.15px #192215;">71.3</div>
<div style="position:absolute;left:39.5px;top:288.5px;width:39.3px;height:16.0px;box-sizing:border-box;background:linear-gradient(#d6d6d6,#c6c6c6);border-top:1px solid #f0f0f0;border-bottom:1px solid #8a8a8a;border-right:1px solid #9a9a9a;"></div>
<div style="position:absolute;left:39.5px;top:288.5px;width:39.3px;height:16.0px;line-height:14.8px;text-align:center;font-size:12.3px;color:#505050;">70.0</div>
<div style="position:absolute;left:79.5px;top:288.5px;width:39.5px;height:16.0px;box-sizing:border-box;background:#88d0a8;border-right:1px solid rgba(60,85,115,0.38);border-bottom:1px solid rgba(60,85,115,0.38);line-height:15.6px;text-align:center;font-size:12.3px;letter-spacing:-0.45px;text-indent:0.45px;color:#15211a;-webkit-text-stroke:0.15px #15211a;">60.0</div>
<div style="position:absolute;left:119.0px;top:288.5px;width:39.5px;height:16.0px;box-sizing:border-box;background:#b5c388;border-right:1px solid rgba(60,85,115,0.38);border-bottom:1px solid rgba(60,85,115,0.38);line-height:15.6px;text-align:center;font-size:12.3px;letter-spacing:-0.45px;text-indent:0.45px;color:#1c1f15;-webkit-text-stroke:0.15px #1c1f15;">76.0</div>
<div style="position:absolute;left:158.5px;top:288.5px;width:39.5px;height:16.0px;box-sizing:border-box;background:#abcc88;border-right:1px solid rgba(60,85,115,0.38);border-bottom:1px solid rgba(60,85,115,0.38);line-height:15.6px;text-align:center;font-size:12.3px;letter-spacing:-0.45px;text-indent:0.45px;color:#1b2015;-webkit-text-stroke:0.15px #1b2015;">74.0</div>
<div style="position:absolute;left:198.0px;top:288.5px;width:39.0px;height:16.0px;box-sizing:border-box;background:#88ef88;border-right:1px solid rgba(60,85,115,0.38);border-bottom:1px solid rgba(60,85,115,0.38);line-height:15.6px;text-align:center;font-size:12.3px;letter-spacing:-0.45px;text-indent:0.45px;color:#152615;-webkit-text-stroke:0.15px #152615;">66.8</div>
<div style="position:absolute;left:237.0px;top:288.5px;width:39.5px;height:16.0px;box-sizing:border-box;background:#88d4a3;border-right:1px solid rgba(60,85,115,0.38);border-bottom:1px solid rgba(60,85,115,0.38);line-height:15.6px;text-align:center;font-size:12.3px;letter-spacing:-0.45px;text-indent:0.45px;color:#15211a;-webkit-text-stroke:0.15px #15211a;">60.8</div>
<div style="position:absolute;left:276.5px;top:288.5px;width:39.5px;height:16.0px;box-sizing:border-box;background:#8bec88;border-right:1px solid rgba(60,85,115,0.38);border-bottom:1px solid rgba(60,85,115,0.38);line-height:15.6px;text-align:center;font-size:12.3px;letter-spacing:-0.45px;text-indent:0.45px;color:#162515;-webkit-text-stroke:0.15px #162515;">67.2</div>
<div style="position:absolute;left:316.0px;top:288.5px;width:39.5px;height:16.0px;box-sizing:border-box;background:#8ceb88;border-right:1px solid rgba(60,85,115,0.38);border-bottom:1px solid rgba(60,85,115,0.38);line-height:15.6px;text-align:center;font-size:12.3px;letter-spacing:-0.45px;text-indent:0.45px;color:#162515;-webkit-text-stroke:0.15px #162515;">67.7</div>
<div style="position:absolute;left:355.5px;top:288.5px;width:39.5px;height:16.0px;box-sizing:border-box;background:#88e097;border-right:1px solid rgba(60,85,115,0.38);border-bottom:1px solid rgba(60,85,115,0.38);line-height:15.6px;text-align:center;font-size:12.3px;letter-spacing:-0.45px;text-indent:0.45px;color:#152318;-webkit-text-stroke:0.15px #152318;">63.4</div>
<div style="position:absolute;left:395.0px;top:288.5px;width:39.0px;height:16.0px;box-sizing:border-box;background:#88e196;border-right:1px solid rgba(60,85,115,0.38);border-bottom:1px solid rgba(60,85,115,0.38);line-height:15.6px;text-align:center;font-size:12.3px;letter-spacing:-0.45px;text-indent:0.45px;color:#152418;-webkit-text-stroke:0.15px #152418;">63.6</div>
<div style="position:absolute;left:434.0px;top:288.5px;width:39.5px;height:16.0px;box-sizing:border-box;background:#adca88;border-right:1px solid rgba(60,85,115,0.38);border-bottom:1px solid rgba(60,85,115,0.38);line-height:15.6px;text-align:center;font-size:12.3px;letter-spacing:-0.45px;text-indent:0.45px;color:#1b2015;-webkit-text-stroke:0.15px #1b2015;">74.4</div>
<div style="position:absolute;left:473.5px;top:288.5px;width:39.5px;height:16.0px;box-sizing:border-box;background:#de9988;border-right:1px solid rgba(60,85,115,0.38);border-bottom:1px solid rgba(60,85,115,0.38);line-height:15.6px;text-align:center;font-size:12.3px;letter-spacing:-0.45px;text-indent:0.45px;color:#231815;-webkit-text-stroke:0.15px #231815;">84.7</div>
<div style="position:absolute;left:513.0px;top:288.5px;width:39.5px;height:16.0px;box-sizing:border-box;background:#e89088;border-right:1px solid rgba(60,85,115,0.38);border-bottom:1px solid rgba(60,85,115,0.38);line-height:15.6px;text-align:center;font-size:12.3px;letter-spacing:-0.45px;text-indent:0.45px;color:#251715;-webkit-text-stroke:0.15px #251715;">86.6</div>
<div style="position:absolute;left:552.5px;top:288.5px;width:39.5px;height:16.0px;box-sizing:border-box;background:#d99f88;border-right:1px solid rgba(60,85,115,0.38);border-bottom:1px solid rgba(60,85,115,0.38);line-height:15.6px;text-align:center;font-size:12.3px;letter-spacing:-0.45px;text-indent:0.45px;color:#221915;-webkit-text-stroke:0.15px #221915;">83.6</div>
<div style="position:absolute;left:592.0px;top:288.5px;width:39.0px;height:16.0px;box-sizing:border-box;background:#c4b388;border-right:1px solid rgba(60,85,115,0.38);border-bottom:1px solid rgba(60,85,115,0.38);line-height:15.6px;text-align:center;font-size:12.3px;letter-spacing:-0.45px;text-indent:0.45px;color:#1f1c15;-webkit-text-stroke:0.15px #1f1c15;">79.3</div>
<div style="position:absolute;left:631.0px;top:288.5px;width:39.5px;height:16.0px;box-sizing:border-box;background:#9fd988;border-right:1px solid rgba(60,85,115,0.38);border-bottom:1px solid rgba(60,85,115,0.38);line-height:15.6px;text-align:center;font-size:12.3px;letter-spacing:-0.45px;text-indent:0.45px;color:#192215;-webkit-text-stroke:0.15px #192215;">71.4</div>
<div style="position:absolute;left:670.5px;top:288.5px;width:39.5px;height:16.0px;box-sizing:border-box;background:#8fe888;border-right:1px solid rgba(60,85,115,0.38);border-bottom:1px solid rgba(60,85,115,0.38);line-height:15.6px;text-align:center;font-size:12.3px;letter-spacing:-0.45px;text-indent:0.45px;color:#162515;-webkit-text-stroke:0.15px #162515;">68.1</div>
<div style="position:absolute;left:39.5px;top:304.5px;width:39.3px;height:16.5px;box-sizing:border-box;background:linear-gradient(#d6d6d6,#c6c6c6);border-top:1px solid #f0f0f0;border-bottom:1px solid #8a8a8a;border-right:1px solid #9a9a9a;"></div>
<div style="position:absolute;left:39.5px;top:304.5px;width:39.3px;height:16.5px;line-height:15.3px;text-align:center;font-size:12.3px;color:#505050;">65.0</div>
<div style="position:absolute;left:79.5px;top:304.5px;width:39.5px;height:16.5px;box-sizing:border-box;background:#88beb9;border-right:1px solid rgba(60,85,115,0.38);border-bottom:1px solid rgba(60,85,115,0.38);line-height:16.1px;text-align:center;font-size:12.3px;letter-spacing:-0.45px;text-indent:0.45px;color:#151e1d;-webkit-text-stroke:0.15px #151e1d;">56.3</div>
<div style="position:absolute;left:119.0px;top:304.5px;width:39.5px;height:16.5px;box-sizing:border-box;background:#aacd88;border-right:1px solid rgba(60,85,115,0.38);border-bottom:1px solid rgba(60,85,115,0.38);line-height:16.1px;text-align:center;font-size:12.3px;letter-spacing:-0.45px;text-indent:0.45px;color:#1b2015;-webkit-text-stroke:0.15px #1b2015;">73.8</div>
<div style="position:absolute;left:158.5px;top:304.5px;width:39.5px;height:16.5px;box-sizing:border-box;background:#a8d088;border-right:1px solid rgba(60,85,115,0.38);border-bottom:1px solid rgba(60,85,115,0.38);line-height:16.1px;text-align:center;font-size:12.3px;letter-spacing:-0.45px;text-indent:0.45px;color:#1a2115;-webkit-text-stroke:0.15px #1a2115;">73.3</div>
<div style="position:absolute;left:198.0px;top:304.5px;width:39.0px;height:16.5px;box-sizing:border-box;background:#88e395;border-right:1px solid rgba(60,85,115,0.38);border-bottom:1px solid rgba(60,85,115,0.38);line-height:16.1px;text-align:center;font-size:12.3px;letter-spacing:-0.45px;text-indent:0.45px;color:#152417;-webkit-text-stroke:0.15px #152417;">63.9</div>
<div style="position:absolute;left:237.0px;top:304.5px;width:39.5px;height:16.5px;box-sizing:border-box;background:#88d3a4;border-right:1px solid rgba(60,85,115,0.38);border-bottom:1px solid rgba(60,85,115,0.38);line-height:16.1px;text-align:center;font-size:12.3px;letter-spacing:-0.45px;text-indent:0.45px;color:#15211a;-webkit-text-stroke:0.15px #15211a;">60.6</div>
<div style="position:absolute;left:276.5px;top:304.5px;width:39.5px;height:16.5px;box-sizing:border-box;background:#89ee88;border-right:1px solid rgba(60,85,115,0.38);border-bottom:1px solid rgba(60,85,115,0.38);line-height:16.1px;text-align:center;font-size:12.3px;letter-spacing:-0.45px;text-indent:0.45px;color:#152615;-webkit-text-stroke:0.15px #152615;">66.9</div>
<div style="position:absolute;left:316.0px;top:304.5px;width:39.5px;height:16.5px;box-sizing:border-box;background:#91e688;border-right:1px solid rgba(60,85,115,0.38);border-bottom:1px solid rgba(60,85,115,0.38);line-height:16.1px;text-align:center;font-size:12.3px;letter-spacing:-0.45px;text-indent:0.45px;color:#172415;-webkit-text-stroke:0.15px #172415;">68.7</div>
<div style="position:absolute;left:355.5px;top:304.5px;width:39.5px;height:16.5px;box-sizing:border-box;background:#88e196;border-right:1px solid rgba(60,85,115,0.38);border-bottom:1px solid rgba(60,85,115,0.38);line-height:16.1px;text-align:center;font-size:12.3px;letter-spacing:-0.45px;text-indent:0.45px;color:#152418;-webkit-text-stroke:0.15px #152418;">63.5</div>
<div style="position:absolute;left:395.0px;top:304.5px;width:39.0px;height:16.5px;box-sizing:border-box;background:#88e394;border-right:1px solid rgba(60,85,115,0.38);border-bottom:1px solid rgba(60,85,115,0.38);line-height:16.1px;text-align:center;font-size:12.3px;letter-spacing:-0.45px;text-indent:0.45px;color:#152417;-webkit-text-stroke:0.15px #152417;">64.1</div>
<div style="position:absolute;left:434.0px;top:304.5px;width:39.5px;height:16.5px;box-sizing:border-box;background:#a1d688;border-right:1px solid rgba(60,85,115,0.38);border-bottom:1px solid rgba(60,85,115,0.38);line-height:16.1px;text-align:center;font-size:12.3px;letter-spacing:-0.45px;text-indent:0.45px;color:#192215;-webkit-text-stroke:0.15px #192215;">71.9</div>
<div style="position:absolute;left:473.5px;top:304.5px;width:39.5px;height:16.5px;box-sizing:border-box;background:#d5a388;border-right:1px solid rgba(60,85,115,0.38);border-bottom:1px solid rgba(60,85,115,0.38);line-height:16.1px;text-align:center;font-size:12.3px;letter-spacing:-0.45px;text-indent:0.45px;color:#221a15;-webkit-text-stroke:0.15px #221a15;">82.6</div>
<div style="position:absolute;left:513.0px;top:304.5px;width:39.5px;height:16.5px;box-sizing:border-box;background:#db9c88;border-right:1px solid rgba(60,85,115,0.38);border-bottom:1px solid rgba(60,85,115,0.38);line-height:16.1px;text-align:center;font-size:12.3px;letter-spacing:-0.45px;text-indent:0.45px;color:#231815;-webkit-text-stroke:0.15px #231815;">84.0</div>
<div style="position:absolute;left:552.5px;top:304.5px;width:39.5px;height:16.5px;box-sizing:border-box;background:#d1a688;border-right:1px solid rgba(60,85,115,0.38);border-bottom:1px solid rgba(60,85,115,0.38);line-height:16.1px;text-align:center;font-size:12.3px;letter-spacing:-0.45px;text-indent:0.45px;color:#211a15;-webkit-text-stroke:0.15px #211a15;">81.9</div>
<div style="position:absolute;left:592.0px;top:304.5px;width:39.0px;height:16.5px;box-sizing:border-box;background:#a5d288;border-right:1px solid rgba(60,85,115,0.38);border-bottom:1px solid rgba(60,85,115,0.38);line-height:16.1px;text-align:center;font-size:12.3px;letter-spacing:-0.45px;text-indent:0.45px;color:#1a2115;-webkit-text-stroke:0.15px #1a2115;">72.8</div>
<div style="position:absolute;left:631.0px;top:304.5px;width:39.5px;height:16.5px;box-sizing:border-box;background:#98df88;border-right:1px solid rgba(60,85,115,0.38);border-bottom:1px solid rgba(60,85,115,0.38);line-height:16.1px;text-align:center;font-size:12.3px;letter-spacing:-0.45px;text-indent:0.45px;color:#182315;-webkit-text-stroke:0.15px #182315;">70.0</div>
<div style="position:absolute;left:670.5px;top:304.5px;width:39.5px;height:16.5px;box-sizing:border-box;background:#88ec8b;border-right:1px solid rgba(60,85,115,0.38);border-bottom:1px solid rgba(60,85,115,0.38);line-height:16.1px;text-align:center;font-size:12.3px;letter-spacing:-0.45px;text-indent:0.45px;color:#152516;-webkit-text-stroke:0.15px #152516;">66.0</div>
<div style="position:absolute;left:39.5px;top:321.0px;width:39.3px;height:16.5px;box-sizing:border-box;background:linear-gradient(#d6d6d6,#c6c6c6);border-top:1px solid #f0f0f0;border-bottom:1px solid #8a8a8a;border-right:1px solid #9a9a9a;"></div>
<div style="position:absolute;left:39.5px;top:321.0px;width:39.3px;height:16.5px;line-height:15.3px;text-align:center;font-size:12.3px;color:#505050;">60.0</div>
<div style="position:absolute;left:79.5px;top:321.0px;width:39.5px;height:16.5px;box-sizing:border-box;background:#88beba;border-right:1px solid rgba(60,85,115,0.38);border-bottom:1px solid rgba(60,85,115,0.38);line-height:16.1px;text-align:center;font-size:12.3px;letter-spacing:-0.45px;text-indent:0.45px;color:#151e1d;-webkit-text-stroke:0.15px #151e1d;">56.1</div>
<div style="position:absolute;left:119.0px;top:321.0px;width:39.5px;height:16.5px;box-sizing:border-box;background:#aacd88;border-right:1px solid rgba(60,85,115,0.38);border-bottom:1px solid rgba(60,85,115,0.38);line-height:16.1px;text-align:center;font-size:12.3px;letter-spacing:-0.45px;text-indent:0.45px;color:#1b2015;-webkit-text-stroke:0.15px #1b2015;">73.7</div>
<div style="position:absolute;left:158.5px;top:321.0px;width:39.5px;height:16.5px;box-sizing:border-box;background:#9add88;border-right:1px solid rgba(60,85,115,0.38);border-bottom:1px solid rgba(60,85,115,0.38);line-height:16.1px;text-align:center;font-size:12.3px;letter-spacing:-0.45px;text-indent:0.45px;color:#182315;-webkit-text-stroke:0.15px #182315;">70.6</div>
<div style="position:absolute;left:198.0px;top:321.0px;width:39.0px;height:16.5px;box-sizing:border-box;background:#88e097;border-right:1px solid rgba(60,85,115,0.38);border-bottom:1px solid rgba(60,85,115,0.38);line-height:16.1px;text-align:center;font-size:12.3px;letter-spacing:-0.45px;text-indent:0.45px;color:#152318;-webkit-text-stroke:0.15px #152318;">63.3</div>
<div style="position:absolute;left:237.0px;top:321.0px;width:39.5px;height:16.5px;box-sizing:border-box;background:#88d5a3;border-right:1px solid rgba(60,85,115,0.38);border-bottom:1px solid rgba(60,85,115,0.38);line-height:16.1px;text-align:center;font-size:12.3px;letter-spacing:-0.45px;text-indent:0.45px;color:#15221a;-webkit-text-stroke:0.15px #15221a;">60.9</div>
<div style="position:absolute;left:276.5px;top:321.0px;width:39.5px;height:16.5px;box-sizing:border-box;background:#88de9a;border-right:1px solid rgba(60,85,115,0.38);border-bottom:1px solid rgba(60,85,115,0.38);line-height:16.1px;text-align:center;font-size:12.3px;letter-spacing:-0.45px;text-indent:0.45px;color:#152318;-webkit-text-stroke:0.15px #152318;">62.9</div>
<div style="position:absolute;left:316.0px;top:321.0px;width:39.5px;height:16.5px;box-sizing:border-box;background:#88e890;border-right:1px solid rgba(60,85,115,0.38);border-bottom:1px solid rgba(60,85,115,0.38);line-height:16.1px;text-align:center;font-size:12.3px;letter-spacing:-0.45px;text-indent:0.45px;color:#152517;-webkit-text-stroke:0.15px #152517;">64.9</div>
<div style="position:absolute;left:355.5px;top:321.0px;width:39.5px;height:16.5px;box-sizing:border-box;background:#88e296;border-right:1px solid rgba(60,85,115,0.38);border-bottom:1px solid rgba(60,85,115,0.38);line-height:16.1px;text-align:center;font-size:12.3px;letter-spacing:-0.45px;text-indent:0.45px;color:#152418;-webkit-text-stroke:0.15px #152418;">63.7</div>
<div style="position:absolute;left:395.0px;top:321.0px;width:39.0px;height:16.5px;box-sizing:border-box;background:#88dd9a;border-right:1px solid rgba(60,85,115,0.38);border-bottom:1px solid rgba(60,85,115,0.38);line-height:16.1px;text-align:center;font-size:12.3px;letter-spacing:-0.45px;text-indent:0.45px;color:#152318;-webkit-text-stroke:0.15px #152318;">62.7</div>
<div style="position:absolute;left:434.0px;top:321.0px;width:39.5px;height:16.5px;box-sizing:border-box;background:#9ade88;border-right:1px solid rgba(60,85,115,0.38);border-bottom:1px solid rgba(60,85,115,0.38);line-height:16.1px;text-align:center;font-size:12.3px;letter-spacing:-0.45px;text-indent:0.45px;color:#182315;-webkit-text-stroke:0.15px #182315;">70.4</div>
<div style="position:absolute;left:473.5px;top:321.0px;width:39.5px;height:16.5px;box-sizing:border-box;background:#c8b088;border-right:1px solid rgba(60,85,115,0.38);border-bottom:1px solid rgba(60,85,115,0.38);line-height:16.1px;text-align:center;font-size:12.3px;letter-spacing:-0.45px;text-indent:0.45px;color:#201c15;-webkit-text-stroke:0.15px #201c15;">80.0</div>
<div style="position:absolute;left:513.0px;top:321.0px;width:39.5px;height:16.5px;box-sizing:border-box;background:#c8af88;border-right:1px solid rgba(60,85,115,0.38);border-bottom:1px solid rgba(60,85,115,0.38);line-height:16.1px;text-align:center;font-size:12.3px;letter-spacing:-0.45px;text-indent:0.45px;color:#201c15;-webkit-text-stroke:0.15px #201c15;">80.1</div>
<div style="position:absolute;left:552.5px;top:321.0px;width:39.5px;height:16.5px;box-sizing:border-box;background:#beb988;border-right:1px solid rgba(60,85,115,0.38);border-bottom:1px solid rgba(60,85,115,0.38);line-height:16.1px;text-align:center;font-size:12.3px;letter-spacing:-0.45px;text-indent:0.45px;color:#1e1d15;-webkit-text-stroke:0.15px #1e1d15;">78.0</div>
<div style="position:absolute;left:592.0px;top:321.0px;width:39.0px;height:16.5px;box-sizing:border-box;background:#8fe888;border-right:1px solid rgba(60,85,115,0.38);border-bottom:1px solid rgba(60,85,115,0.38);line-height:16.1px;text-align:center;font-size:12.3px;letter-spacing:-0.45px;text-indent:0.45px;color:#162515;-webkit-text-stroke:0.15px #162515;">68.1</div>
<div style="position:absolute;left:631.0px;top:321.0px;width:39.5px;height:16.5px;box-sizing:border-box;background:#88ef88;border-right:1px solid rgba(60,85,115,0.38);border-bottom:1px solid rgba(60,85,115,0.38);line-height:16.1px;text-align:center;font-size:12.3px;letter-spacing:-0.45px;text-indent:0.45px;color:#152615;-webkit-text-stroke:0.15px #152615;">66.7</div>
<div style="position:absolute;left:670.5px;top:321.0px;width:39.5px;height:16.5px;box-sizing:border-box;background:#88e196;border-right:1px solid rgba(60,85,115,0.38);border-bottom:1px solid rgba(60,85,115,0.38);line-height:16.1px;text-align:center;font-size:12.3px;letter-spacing:-0.45px;text-indent:0.45px;color:#152418;-webkit-text-stroke:0.15px #152418;">63.5</div>
<div style="position:absolute;left:39.5px;top:337.5px;width:39.3px;height:16.5px;box-sizing:border-box;background:linear-gradient(#d6d6d6,#c6c6c6);border-top:1px solid #f0f0f0;border-bottom:1px solid #8a8a8a;border-right:1px solid #9a9a9a;"></div>
<div style="position:absolute;left:39.5px;top:337.5px;width:39.3px;height:16.5px;line-height:15.3px;text-align:center;font-size:12.3px;color:#505050;">55.0</div>
<div style="position:absolute;left:79.5px;top:337.5px;width:39.5px;height:16.5px;box-sizing:border-box;background:#88babe;border-right:1px solid rgba(60,85,115,0.38);border-bottom:1px solid rgba(60,85,115,0.38);line-height:16.1px;text-align:center;font-size:12.3px;letter-spacing:-0.45px;text-indent:0.45px;color:#2233dd;-webkit-text-stroke:0.15px #2233dd;">55.4</div>
<div style="position:absolute;left:119.0px;top:337.5px;width:39.5px;height:16.5px;box-sizing:border-box;background:#a1d688;border-right:1px solid rgba(60,85,115,0.38);border-bottom:1px solid rgba(60,85,115,0.38);line-height:16.1px;text-align:center;font-size:12.3px;letter-spacing:-0.45px;text-indent:0.45px;color:#192215;-webkit-text-stroke:0.15px #192215;">71.9</div>
<div style="position:absolute;left:158.5px;top:337.5px;width:39.5px;height:16.5px;box-sizing:border-box;background:#9ade88;border-right:1px solid rgba(60,85,115,0.38);border-bottom:1px solid rgba(60,85,115,0.38);line-height:16.1px;text-align:center;font-size:12.3px;letter-spacing:-0.45px;text-indent:0.45px;color:#182315;-webkit-text-stroke:0.15px #182315;">70.3</div>
<div style="position:absolute;left:198.0px;top:337.5px;width:39.0px;height:16.5px;box-sizing:border-box;background:#88da9d;border-right:1px solid rgba(60,85,115,0.38);border-bottom:1px solid rgba(60,85,115,0.38);line-height:16.1px;text-align:center;font-size:12.3px;letter-spacing:-0.45px;text-indent:0.45px;color:#152219;-webkit-text-stroke:0.15px #152219;">62.2</div>
<div style="position:absolute;left:237.0px;top:337.5px;width:39.5px;height:16.5px;box-sizing:border-box;background:#88c8af;border-right:1px solid rgba(60,85,115,0.38);border-bottom:1px solid rgba(60,85,115,0.38);line-height:16.1px;text-align:center;font-size:12.3px;letter-spacing:-0.45px;text-indent:0.45px;color:#15201c;-webkit-text-stroke:0.15px #15201c;">58.4</div>
<div style="position:absolute;left:276.5px;top:337.5px;width:39.5px;height:16.5px;box-sizing:border-box;background:#88dc9b;border-right:1px solid rgba(60,85,115,0.38);border-bottom:1px solid rgba(60,85,115,0.38);line-height:16.1px;text-align:center;font-size:12.3px;letter-spacing:-0.45px;text-indent:0.45px;color:#152318;-webkit-text-stroke:0.15px #152318;">62.5</div>
<div style="position:absolute;left:316.0px;top:337.5px;width:39.5px;height:16.5px;box-sizing:border-box;background:#88e592;border-right:1px solid rgba(60,85,115,0.38);border-bottom:1px solid rgba(60,85,115,0.38);line-height:16.1px;text-align:center;font-size:12.3px;letter-spacing:-0.45px;text-indent:0.45px;color:#152417;-webkit-text-stroke:0.15px #152417;">64.4</div>
<div style="position:absolute;left:355.5px;top:337.5px;width:39.5px;height:16.5px;box-sizing:border-box;background:#88db9c;border-right:1px solid rgba(60,85,115,0.38);border-bottom:1px solid rgba(60,85,115,0.38);line-height:16.1px;text-align:center;font-size:12.3px;letter-spacing:-0.45px;text-indent:0.45px;color:#152318;-webkit-text-stroke:0.15px #152318;">62.4</div>
<div style="position:absolute;left:395.0px;top:337.5px;width:39.0px;height:16.5px;box-sizing:border-box;background:#88d3a4;border-right:1px solid rgba(60,85,115,0.38);border-bottom:1px solid rgba(60,85,115,0.38);line-height:16.1px;text-align:center;font-size:12.3px;letter-spacing:-0.45px;text-indent:0.45px;color:#15211a;-webkit-text-stroke:0.15px #15211a;">60.6</div>
<div style="position:absolute;left:434.0px;top:337.5px;width:39.5px;height:16.5px;box-sizing:border-box;background:#88e98e;border-right:1px solid rgba(60,85,115,0.38);border-bottom:1px solid rgba(60,85,115,0.38);line-height:16.1px;text-align:center;font-size:12.3px;letter-spacing:-0.45px;text-indent:0.45px;color:#152516;-webkit-text-stroke:0.15px #152516;">65.3</div>
<div style="position:absolute;left:473.5px;top:337.5px;width:39.5px;height:16.5px;box-sizing:border-box;background:#bdba88;border-right:1px solid rgba(60,85,115,0.38);border-bottom:1px solid rgba(60,85,115,0.38);line-height:16.1px;text-align:center;font-size:12.3px;letter-spacing:-0.45px;text-indent:0.45px;color:#1e1d15;-webkit-text-stroke:0.15px #1e1d15;">77.7</div>
<div style="position:absolute;left:513.0px;top:337.5px;width:39.5px;height:16.5px;box-sizing:border-box;background:#bcbb88;border-right:1px solid rgba(60,85,115,0.38);border-bottom:1px solid rgba(60,85,115,0.38);line-height:16.1px;text-align:center;font-size:12.3px;letter-spacing:-0.45px;text-indent:0.45px;color:#1e1d15;-webkit-text-stroke:0.15px #1e1d15;">77.5</div>
<div style="position:absolute;left:552.5px;top:337.5px;width:39.5px;height:16.5px;box-sizing:border-box;background:#b2c588;border-right:1px solid rgba(60,85,115,0.38);border-bottom:1px solid rgba(60,85,115,0.38);line-height:16.1px;text-align:center;font-size:12.3px;letter-spacing:-0.45px;text-indent:0.45px;color:#1c1f15;-webkit-text-stroke:0.15px #1c1f15;">75.4</div>
<div style="position:absolute;left:592.0px;top:337.5px;width:39.0px;height:16.5px;box-sizing:border-box;background:#91e688;border-right:1px solid rgba(60,85,115,0.38);border-bottom:1px solid rgba(60,85,115,0.38);line-height:16.1px;text-align:center;font-size:12.3px;letter-spacing:-0.45px;text-indent:0.45px;color:#172415;-webkit-text-stroke:0.15px #172415;">68.6</div>
<div style="position:absolute;left:631.0px;top:337.5px;width:39.5px;height:16.5px;box-sizing:border-box;background:#88e097;border-right:1px solid rgba(60,85,115,0.38);border-bottom:1px solid rgba(60,85,115,0.38);line-height:16.1px;text-align:center;font-size:12.3px;letter-spacing:-0.45px;text-indent:0.45px;color:#152318;-webkit-text-stroke:0.15px #152318;">63.3</div>
<div style="position:absolute;left:670.5px;top:337.5px;width:39.5px;height:16.5px;box-sizing:border-box;background:#88d3a4;border-right:1px solid rgba(60,85,115,0.38);border-bottom:1px solid rgba(60,85,115,0.38);line-height:16.1px;text-align:center;font-size:12.3px;letter-spacing:-0.45px;text-indent:0.45px;color:#15211a;-webkit-text-stroke:0.15px #15211a;">60.7</div>
<div style="position:absolute;left:39.5px;top:354.0px;width:39.3px;height:16.5px;box-sizing:border-box;background:linear-gradient(#d6d6d6,#c6c6c6);border-top:1px solid #f0f0f0;border-bottom:1px solid #8a8a8a;border-right:1px solid #9a9a9a;"></div>
<div style="position:absolute;left:39.5px;top:354.0px;width:39.3px;height:16.5px;line-height:15.3px;text-align:center;font-size:12.3px;color:#505050;">50.0</div>
<div style="position:absolute;left:79.5px;top:354.0px;width:39.5px;height:16.5px;box-sizing:border-box;background:#88b6c1;border-right:1px solid rgba(60,85,115,0.38);border-bottom:1px solid rgba(60,85,115,0.38);line-height:16.1px;text-align:center;font-size:12.3px;letter-spacing:-0.45px;text-indent:0.45px;color:#2233dd;-webkit-text-stroke:0.15px #2233dd;">54.7</div>
<div style="position:absolute;left:119.0px;top:354.0px;width:39.5px;height:16.5px;box-sizing:border-box;background:#88e88f;border-right:1px solid rgba(60,85,115,0.38);border-bottom:1px solid rgba(60,85,115,0.38);line-height:16.1px;text-align:center;font-size:12.3px;letter-spacing:-0.45px;text-indent:0.45px;color:#152516;-webkit-text-stroke:0.15px #152516;">65.1</div>
<div style="position:absolute;left:158.5px;top:354.0px;width:39.5px;height:16.5px;box-sizing:border-box;background:#8fe888;border-right:1px solid rgba(60,85,115,0.38);border-bottom:1px solid rgba(60,85,115,0.38);line-height:16.1px;text-align:center;font-size:12.3px;letter-spacing:-0.45px;text-indent:0.45px;color:#162515;-webkit-text-stroke:0.15px #162515;">68.1</div>
<div style="position:absolute;left:198.0px;top:354.0px;width:39.0px;height:16.5px;box-sizing:border-box;background:#88df98;border-right:1px solid rgba(60,85,115,0.38);border-bottom:1px solid rgba(60,85,115,0.38);line-height:16.1px;text-align:center;font-size:12.3px;letter-spacing:-0.45px;text-indent:0.45px;color:#152318;-webkit-text-stroke:0.15px #152318;">63.2</div>
<div style="position:absolute;left:237.0px;top:354.0px;width:39.5px;height:16.5px;box-sizing:border-box;background:#88ccac;border-right:1px solid rgba(60,85,115,0.38);border-bottom:1px solid rgba(60,85,115,0.38);line-height:16.1px;text-align:center;font-size:12.3px;letter-spacing:-0.45px;text-indent:0.45px;color:#15201b;-webkit-text-stroke:0.15px #15201b;">59.1</div>
<div style="position:absolute;left:276.5px;top:354.0px;width:39.5px;height:16.5px;box-sizing:border-box;background:#88d5a2;border-right:1px solid rgba(60,85,115,0.38);border-bottom:1px solid rgba(60,85,115,0.38);line-height:16.1px;text-align:center;font-size:12.3px;letter-spacing:-0.45px;text-indent:0.45px;color:#152219;-webkit-text-stroke:0.15px #152219;">61.1</div>
<div style="position:absolute;left:316.0px;top:354.0px;width:39.5px;height:16.5px;box-sizing:border-box;background:#88db9c;border-right:1px solid rgba(60,85,115,0.38);border-bottom:1px solid rgba(60,85,115,0.38);line-height:16.1px;text-align:center;font-size:12.3px;letter-spacing:-0.45px;text-indent:0.45px;color:#152318;-webkit-text-stroke:0.15px #152318;">62.4</div>
<div style="position:absolute;left:355.5px;top:354.0px;width:39.5px;height:16.5px;box-sizing:border-box;background:#88d0a8;border-right:1px solid rgba(60,85,115,0.38);border-bottom:1px solid rgba(60,85,115,0.38);line-height:16.1px;text-align:center;font-size:12.3px;letter-spacing:-0.45px;text-indent:0.45px;color:#15211a;-webkit-text-stroke:0.15px #15211a;">60.0</div>
<div style="position:absolute;left:395.0px;top:354.0px;width:39.0px;height:16.5px;box-sizing:border-box;background:#88cdaa;border-right:1px solid rgba(60,85,115,0.38);border-bottom:1px solid rgba(60,85,115,0.38);line-height:16.1px;text-align:center;font-size:12.3px;letter-spacing:-0.45px;text-indent:0.45px;color:#15201b;-webkit-text-stroke:0.15px #15201b;">59.5</div>
<div style="position:absolute;left:434.0px;top:354.0px;width:39.5px;height:16.5px;box-sizing:border-box;background:#88e592;border-right:1px solid rgba(60,85,115,0.38);border-bottom:1px solid rgba(60,85,115,0.38);line-height:16.1px;text-align:center;font-size:12.3px;letter-spacing:-0.45px;text-indent:0.45px;color:#152417;-webkit-text-stroke:0.15px #152417;">64.3</div>
<div style="position:absolute;left:473.5px;top:354.0px;width:39.5px;height:16.5px;box-sizing:border-box;background:#c1b688;border-right:1px solid rgba(60,85,115,0.38);border-bottom:1px solid rgba(60,85,115,0.38);line-height:16.1px;text-align:center;font-size:12.3px;letter-spacing:-0.45px;text-indent:0.45px;color:#1e1d15;-webkit-text-stroke:0.15px #1e1d15;">78.6</div>
<div style="position:absolute;left:513.0px;top:354.0px;width:39.5px;height:16.5px;box-sizing:border-box;background:#beba88;border-right:1px solid rgba(60,85,115,0.38);border-bottom:1px solid rgba(60,85,115,0.38);line-height:16.1px;text-align:center;font-size:12.3px;letter-spacing:-0.45px;text-indent:0.45px;color:#1e1d15;-webkit-text-stroke:0.15px #1e1d15;">77.8</div>
<div style="position:absolute;left:552.5px;top:354.0px;width:39.5px;height:16.5px;box-sizing:border-box;background:#b0c888;border-right:1px solid rgba(60,85,115,0.38);border-bottom:1px solid rgba(60,85,115,0.38);line-height:16.1px;text-align:center;font-size:12.3px;letter-spacing:-0.45px;text-indent:0.45px;color:#1c2015;-webkit-text-stroke:0.15px #1c2015;">74.9</div>
<div style="position:absolute;left:592.0px;top:354.0px;width:39.0px;height:16.5px;box-sizing:border-box;background:#88e88f;border-right:1px solid rgba(60,85,115,0.38);border-bottom:1px solid rgba(60,85,115,0.38);line-height:16.1px;text-align:center;font-size:12.3px;letter-spacing:-0.45px;text-indent:0.45px;color:#152516;-webkit-text-stroke:0.15px #152516;">65.0</div>
<div style="position:absolute;left:631.0px;top:354.0px;width:39.5px;height:16.5px;box-sizing:border-box;background:#88d89f;border-right:1px solid rgba(60,85,115,0.38);border-bottom:1px solid rgba(60,85,115,0.38);line-height:16.1px;text-align:center;font-size:12.3px;letter-spacing:-0.45px;text-indent:0.45px;color:#152219;-webkit-text-stroke:0.15px #152219;">61.7</div>
<div style="position:absolute;left:670.5px;top:354.0px;width:39.5px;height:16.5px;box-sizing:border-box;background:#88c9ae;border-right:1px solid rgba(60,85,115,0.38);border-bottom:1px solid rgba(60,85,115,0.38);line-height:16.1px;text-align:center;font-size:12.3px;letter-spacing:-0.45px;text-indent:0.45px;color:#15201b;-webkit-text-stroke:0.15px #15201b;">58.5</div>
<div style="position:absolute;left:39.5px;top:370.5px;width:39.3px;height:16.5px;box-sizing:border-box;background:linear-gradient(#d6d6d6,#c6c6c6);border-top:1px solid #f0f0f0;border-bottom:1px solid #8a8a8a;border-right:1px solid #9a9a9a;"></div>
<div style="position:absolute;left:39.5px;top:370.5px;width:39.3px;height:16.5px;line-height:15.3px;text-align:center;font-size:12.3px;color:#505050;">45.0</div>
<div style="position:absolute;left:79.5px;top:370.5px;width:39.5px;height:16.5px;box-sizing:border-box;background:#88b3c4;border-right:1px solid rgba(60,85,115,0.38);border-bottom:1px solid rgba(60,85,115,0.38);line-height:16.1px;text-align:center;font-size:12.3px;letter-spacing:-0.45px;text-indent:0.45px;color:#2233dd;-webkit-text-stroke:0.15px #2233dd;">54.0</div>
<div style="position:absolute;left:119.0px;top:370.5px;width:39.5px;height:16.5px;box-sizing:border-box;background:#88c4b3;border-right:1px solid rgba(60,85,115,0.38);border-bottom:1px solid rgba(60,85,115,0.38);line-height:16.1px;text-align:center;font-size:12.3px;letter-spacing:-0.45px;text-indent:0.45px;color:#151f1c;-webkit-text-stroke:0.15px #151f1c;">57.5</div>
<div style="position:absolute;left:158.5px;top:370.5px;width:39.5px;height:16.5px;box-sizing:border-box;background:#88dc9b;border-right:1px solid rgba(60,85,115,0.38);border-bottom:1px solid rgba(60,85,115,0.38);line-height:16.1px;text-align:center;font-size:12.3px;letter-spacing:-0.45px;text-indent:0.45px;color:#152318;-webkit-text-stroke:0.15px #152318;">62.5</div>
<div style="position:absolute;left:198.0px;top:370.5px;width:39.0px;height:16.5px;box-sizing:border-box;background:#88d0a8;border-right:1px solid rgba(60,85,115,0.38);border-bottom:1px solid rgba(60,85,115,0.38);line-height:16.1px;text-align:center;font-size:12.3px;letter-spacing:-0.45px;text-indent:0.45px;color:#15211a;-webkit-text-stroke:0.15px #15211a;">60.0</div>
<div style="position:absolute;left:237.0px;top:370.5px;width:39.5px;height:16.5px;box-sizing:border-box;background:#88caad;border-right:1px solid rgba(60,85,115,0.38);border-bottom:1px solid rgba(60,85,115,0.38);line-height:16.1px;text-align:center;font-size:12.3px;letter-spacing:-0.45px;text-indent:0.45px;color:#15201b;-webkit-text-stroke:0.15px #15201b;">58.8</div>
<div style="position:absolute;left:276.5px;top:370.5px;width:39.5px;height:16.5px;box-sizing:border-box;background:#88cfa8;border-right:1px solid rgba(60,85,115,0.38);border-bottom:1px solid rgba(60,85,115,0.38);line-height:16.1px;text-align:center;font-size:12.3px;letter-spacing:-0.45px;text-indent:0.45px;color:#15211a;-webkit-text-stroke:0.15px #15211a;">59.7</div>
<div style="position:absolute;left:316.0px;top:370.5px;width:39.5px;height:16.5px;box-sizing:border-box;background:#88d89f;border-right:1px solid rgba(60,85,115,0.38);border-bottom:1px solid rgba(60,85,115,0.38);line-height:16.1px;text-align:center;font-size:12.3px;letter-spacing:-0.45px;text-indent:0.45px;color:#152219;-webkit-text-stroke:0.15px #152219;">61.7</div>
<div style="position:absolute;left:355.5px;top:370.5px;width:39.5px;height:16.5px;box-sizing:border-box;background:#88c8b0;border-right:1px solid rgba(60,85,115,0.38);border-bottom:1px solid rgba(60,85,115,0.38);line-height:16.1px;text-align:center;font-size:12.3px;letter-spacing:-0.45px;text-indent:0.45px;color:#15201c;-webkit-text-stroke:0.15px #15201c;">58.2</div>
<div style="position:absolute;left:395.0px;top:370.5px;width:39.0px;height:16.5px;box-sizing:border-box;background:#88beba;border-right:1px solid rgba(60,85,115,0.38);border-bottom:1px solid rgba(60,85,115,0.38);line-height:16.1px;text-align:center;font-size:12.3px;letter-spacing:-0.45px;text-indent:0.45px;color:#151e1d;-webkit-text-stroke:0.15px #151e1d;">56.1</div>
<div style="position:absolute;left:434.0px;top:370.5px;width:39.5px;height:16.5px;box-sizing:border-box;background:#88d89f;border-right:1px solid rgba(60,85,115,0.38);border-bottom:1px solid rgba(60,85,115,0.38);line-height:16.1px;text-align:center;font-size:12.3px;letter-spacing:-0.45px;text-indent:0.45px;color:#152219;-webkit-text-stroke:0.15px #152219;">61.6</div>
<div style="position:absolute;left:473.5px;top:370.5px;width:39.5px;height:16.5px;box-sizing:border-box;background:#c1b688;border-right:1px solid rgba(60,85,115,0.38);border-bottom:1px solid rgba(60,85,115,0.38);line-height:16.1px;text-align:center;font-size:12.3px;letter-spacing:-0.45px;text-indent:0.45px;color:#1e1d15;-webkit-text-stroke:0.15px #1e1d15;">78.6</div>
<div style="position:absolute;left:513.0px;top:370.5px;width:39.5px;height:16.5px;box-sizing:border-box;background:#b7c088;border-right:1px solid rgba(60,85,115,0.38);border-bottom:1px solid rgba(60,85,115,0.38);line-height:16.1px;text-align:center;font-size:12.3px;letter-spacing:-0.45px;text-indent:0.45px;color:#1d1e15;-webkit-text-stroke:0.15px #1d1e15;">76.5</div>
<div style="position:absolute;left:552.5px;top:370.5px;width:39.5px;height:16.5px;box-sizing:border-box;background:#9add88;border-right:1px solid rgba(60,85,115,0.38);border-bottom:1px solid rgba(60,85,115,0.38);line-height:16.1px;text-align:center;font-size:12.3px;letter-spacing:-0.45px;text-indent:0.45px;color:#182315;-webkit-text-stroke:0.15px #182315;">70.6</div>
<div style="position:absolute;left:592.0px;top:370.5px;width:39.0px;height:16.5px;box-sizing:border-box;background:#88caad;border-right:1px solid rgba(60,85,115,0.38);border-bottom:1px solid rgba(60,85,115,0.38);line-height:16.1px;text-align:center;font-size:12.3px;letter-spacing:-0.45px;text-indent:0.45px;color:#15201b;-webkit-text-stroke:0.15px #15201b;">58.8</div>
<div style="position:absolute;left:631.0px;top:370.5px;width:39.5px;height:16.5px;box-sizing:border-box;background:#88c7b1;border-right:1px solid rgba(60,85,115,0.38);border-bottom:1px solid rgba(60,85,115,0.38);line-height:16.1px;text-align:center;font-size:12.3px;letter-spacing:-0.45px;text-indent:0.45px;color:#151f1c;-webkit-text-stroke:0.15px #151f1c;">58.0</div>
<div style="position:absolute;left:670.5px;top:370.5px;width:39.5px;height:16.5px;box-sizing:border-box;background:#88c4b3;border-right:1px solid rgba(60,85,115,0.38);border-bottom:1px solid rgba(60,85,115,0.38);line-height:16.1px;text-align:center;font-size:12.3px;letter-spacing:-0.45px;text-indent:0.45px;color:#151f1c;-webkit-text-stroke:0.15px #151f1c;">57.5</div>
<div style="position:absolute;left:39.5px;top:387.0px;width:39.3px;height:16.5px;box-sizing:border-box;background:linear-gradient(#d6d6d6,#c6c6c6);border-top:1px solid #f0f0f0;border-bottom:1px solid #8a8a8a;border-right:1px solid #9a9a9a;"></div>
<div style="position:absolute;left:39.5px;top:387.0px;width:39.3px;height:16.5px;line-height:15.3px;text-align:center;font-size:12.3px;color:#505050;">40.0</div>
<div style="position:absolute;left:79.5px;top:387.0px;width:39.5px;height:16.5px;box-sizing:border-box;background:#88b0c8;border-right:1px solid rgba(60,85,115,0.38);border-bottom:1px solid rgba(60,85,115,0.38);line-height:16.1px;text-align:center;font-size:12.3px;letter-spacing:-0.45px;text-indent:0.45px;color:#dd2233;-webkit-text-stroke:0.15px #dd2233;">53.3</div>
<div style="position:absolute;left:119.0px;top:387.0px;width:39.5px;height:16.5px;box-sizing:border-box;background:#88bdba;border-right:1px solid rgba(60,85,115,0.38);border-bottom:1px solid rgba(60,85,115,0.38);line-height:16.1px;text-align:center;font-size:12.3px;letter-spacing:-0.45px;text-indent:0.45px;color:#151e1d;-webkit-text-stroke:0.15px #151e1d;">56.0</div>
<div style="position:absolute;left:158.5px;top:387.0px;width:39.5px;height:16.5px;box-sizing:border-box;background:#88bfb8;border-right:1px solid rgba(60,85,115,0.38);border-bottom:1px solid rgba(60,85,115,0.38);line-height:16.1px;text-align:center;font-size:12.3px;letter-spacing:-0.45px;text-indent:0.45px;color:#151e1d;-webkit-text-stroke:0.15px #151e1d;">56.5</div>
<div style="position:absolute;left:198.0px;top:387.0px;width:39.0px;height:16.5px;box-sizing:border-box;background:#88c4b3;border-right:1px solid rgba(60,85,115,0.38);border-bottom:1px solid rgba(60,85,115,0.38);line-height:16.1px;text-align:center;font-size:12.3px;letter-spacing:-0.45px;text-indent:0.45px;color:#151f1c;-webkit-text-stroke:0.15px #151f1c;">57.5</div>
<div style="position:absolute;left:237.0px;top:387.0px;width:39.5px;height:16.5px;box-sizing:border-box;background:#88c9ae;border-right:1px solid rgba(60,85,115,0.38);border-bottom:1px solid rgba(60,85,115,0.38);line-height:16.1px;text-align:center;font-size:12.3px;letter-spacing:-0.45px;text-indent:0.45px;color:#15201b;-webkit-text-stroke:0.15px #15201b;">58.5</div>
<div style="position:absolute;left:276.5px;top:387.0px;width:39.5px;height:16.5px;box-sizing:border-box;background:#88c5b2;border-right:1px solid rgba(60,85,115,0.38);border-bottom:1px solid rgba(60,85,115,0.38);line-height:16.1px;text-align:center;font-size:12.3px;letter-spacing:-0.45px;text-indent:0.45px;color:#151f1c;-webkit-text-stroke:0.15px #151f1c;">57.8</div>
<div style="position:absolute;left:316.0px;top:387.0px;width:39.5px;height:16.5px;box-sizing:border-box;background:#88d1a6;border-right:1px solid rgba(60,85,115,0.38);border-bottom:1px solid rgba(60,85,115,0.38);line-height:16.1px;text-align:center;font-size:12.3px;letter-spacing:-0.45px;text-indent:0.45px;color:#15211a;-webkit-text-stroke:0.15px #15211a;">60.2</div>
<div style="position:absolute;left:355.5px;top:387.0px;width:39.5px;height:16.5px;box-sizing:border-box;background:#88c1b6;border-right:1px solid rgba(60,85,115,0.38);border-bottom:1px solid rgba(60,85,115,0.38);line-height:16.1px;text-align:center;font-size:12.3px;letter-spacing:-0.45px;text-indent:0.45px;color:#151e1d;-webkit-text-stroke:0.15px #151e1d;">56.9</div>
<div style="position:absolute;left:395.0px;top:387.0px;width:39.0px;height:16.5px;box-sizing:border-box;background:#88b9be;border-right:1px solid rgba(60,85,115,0.38);border-bottom:1px solid rgba(60,85,115,0.38);line-height:16.1px;text-align:center;font-size:12.3px;letter-spacing:-0.45px;text-indent:0.45px;color:#151d1e;-webkit-text-stroke:0.15px #151d1e;">55.1</div>
<div style="position:absolute;left:434.0px;top:387.0px;width:39.5px;height:16.5px;box-sizing:border-box;background:#88c7b1;border-right:1px solid rgba(60,85,115,0.38);border-bottom:1px solid rgba(60,85,115,0.38);line-height:16.1px;text-align:center;font-size:12.3px;letter-spacing:-0.45px;text-indent:0.45px;color:#151f1c;-webkit-text-stroke:0.15px #151f1c;">58.0</div>
<div style="position:absolute;left:473.5px;top:387.0px;width:39.5px;height:16.5px;box-sizing:border-box;background:#a3d588;border-right:1px solid rgba(60,85,115,0.38);border-bottom:1px solid rgba(60,85,115,0.38);line-height:16.1px;text-align:center;font-size:12.3px;letter-spacing:-0.45px;text-indent:0.45px;color:#1a2215;-webkit-text-stroke:0.15px #1a2215;">72.3</div>
<div style="position:absolute;left:513.0px;top:387.0px;width:39.5px;height:16.5px;box-sizing:border-box;background:#88e395;border-right:1px solid rgba(60,85,115,0.38);border-bottom:1px solid rgba(60,85,115,0.38);line-height:16.1px;text-align:center;font-size:12.3px;letter-spacing:-0.45px;text-indent:0.45px;color:#152417;-webkit-text-stroke:0.15px #152417;">63.8</div>
<div style="position:absolute;left:552.5px;top:387.0px;width:39.5px;height:16.5px;box-sizing:border-box;background:#88d89f;border-right:1px solid rgba(60,85,115,0.38);border-bottom:1px solid rgba(60,85,115,0.38);line-height:16.1px;text-align:center;font-size:12.3px;letter-spacing:-0.45px;text-indent:0.45px;color:#152219;-webkit-text-stroke:0.15px #152219;">61.7</div>
<div style="position:absolute;left:592.0px;top:387.0px;width:39.0px;height:16.5px;box-sizing:border-box;background:#88b9be;border-right:1px solid rgba(60,85,115,0.38);border-bottom:1px solid rgba(60,85,115,0.38);line-height:16.1px;text-align:center;font-size:12.3px;letter-spacing:-0.45px;text-indent:0.45px;color:#151d1e;-webkit-text-stroke:0.15px #151d1e;">55.2</div>
<div style="position:absolute;left:631.0px;top:387.0px;width:39.5px;height:16.5px;box-sizing:border-box;background:#88c3b4;border-right:1px solid rgba(60,85,115,0.38);border-bottom:1px solid rgba(60,85,115,0.38);line-height:16.1px;text-align:center;font-size:12.3px;letter-spacing:-0.45px;text-indent:0.45px;color:#151f1c;-webkit-text-stroke:0.15px #151f1c;">57.3</div>
<div style="position:absolute;left:670.5px;top:387.0px;width:39.5px;height:16.5px;box-sizing:border-box;background:#88beb9;border-right:1px solid rgba(60,85,115,0.38);border-bottom:1px solid rgba(60,85,115,0.38);line-height:16.1px;text-align:center;font-size:12.3px;letter-spacing:-0.45px;text-indent:0.45px;color:#151e1d;-webkit-text-stroke:0.15px #151e1d;">56.4</div>
<div style="position:absolute;left:39.5px;top:403.5px;width:39.3px;height:16.0px;box-sizing:border-box;background:linear-gradient(#d6d6d6,#c6c6c6);border-top:1px solid #f0f0f0;border-bottom:1px solid #8a8a8a;border-right:1px solid #9a9a9a;"></div>
<div style="position:absolute;left:39.5px;top:403.5px;width:39.3px;height:16.0px;line-height:14.8px;text-align:center;font-size:12.3px;color:#505050;">35.0</div>
<div style="position:absolute;left:79.5px;top:403.5px;width:39.5px;height:16.0px;box-sizing:border-box;background:#88accb;border-right:1px solid rgba(60,85,115,0.38);border-bottom:1px solid rgba(60,85,115,0.38);line-height:15.6px;text-align:center;font-size:12.3px;letter-spacing:-0.45px;text-indent:0.45px;color:#dd2233;-webkit-text-stroke:0.15px #dd2233;">52.6</div>
<div style="position:absolute;left:119.0px;top:403.5px;width:39.5px;height:16.0px;box-sizing:border-box;background:#88a6d1;border-right:1px solid rgba(60,85,115,0.38);border-bottom:1px solid rgba(60,85,115,0.38);line-height:15.6px;text-align:center;font-size:12.3px;letter-spacing:-0.45px;text-indent:0.45px;color:#151a21;-webkit-text-stroke:0.15px #151a21;">51.2</div>
<div style="position:absolute;left:158.5px;top:403.5px;width:39.5px;height:16.0px;box-sizing:border-box;background:#88a5d2;border-right:1px solid rgba(60,85,115,0.38);border-bottom:1px solid rgba(60,85,115,0.38);line-height:15.6px;text-align:center;font-size:12.3px;letter-spacing:-0.45px;text-indent:0.45px;color:#151a21;-webkit-text-stroke:0.15px #151a21;">51.1</div>
<div style="position:absolute;left:198.0px;top:403.5px;width:39.0px;height:16.0px;box-sizing:border-box;background:#88b7c0;border-right:1px solid rgba(60,85,115,0.38);border-bottom:1px solid rgba(60,85,115,0.38);line-height:15.6px;text-align:center;font-size:12.3px;letter-spacing:-0.45px;text-indent:0.45px;color:#151d1e;-webkit-text-stroke:0.15px #151d1e;">54.8</div>
<div style="position:absolute;left:237.0px;top:403.5px;width:39.5px;height:16.0px;box-sizing:border-box;background:#88c7b1;border-right:1px solid rgba(60,85,115,0.38);border-bottom:1px solid rgba(60,85,115,0.38);line-height:15.6px;text-align:center;font-size:12.3px;letter-spacing:-0.45px;text-indent:0.45px;color:#151f1c;-webkit-text-stroke:0.15px #151f1c;">58.1</div>
<div style="position:absolute;left:276.5px;top:403.5px;width:39.5px;height:16.0px;box-sizing:border-box;background:#88c2b5;border-right:1px solid rgba(60,85,115,0.38);border-bottom:1px solid rgba(60,85,115,0.38);line-height:15.6px;text-align:center;font-size:12.3px;letter-spacing:-0.45px;text-indent:0.45px;color:#151f1c;-webkit-text-stroke:0.15px #151f1c;">57.0</div>
<div style="position:absolute;left:316.0px;top:403.5px;width:39.5px;height:16.0px;box-sizing:border-box;background:#88cbac;border-right:1px solid rgba(60,85,115,0.38);border-bottom:1px solid rgba(60,85,115,0.38);line-height:15.6px;text-align:center;font-size:12.3px;letter-spacing:-0.45px;text-indent:0.45px;color:#15201b;-webkit-text-stroke:0.15px #15201b;">58.9</div>
<div style="position:absolute;left:355.5px;top:403.5px;width:39.5px;height:16.0px;box-sizing:border-box;background:#88babe;border-right:1px solid rgba(60,85,115,0.38);border-bottom:1px solid rgba(60,85,115,0.38);line-height:15.6px;text-align:center;font-size:12.3px;letter-spacing:-0.45px;text-indent:0.45px;color:#151d1e;-webkit-text-stroke:0.15px #151d1e;">55.4</div>
<div style="position:absolute;left:395.0px;top:403.5px;width:39.0px;height:16.0px;box-sizing:border-box;background:#88b8bf;border-right:1px solid rgba(60,85,115,0.38);border-bottom:1px solid rgba(60,85,115,0.38);line-height:15.6px;text-align:center;font-size:12.3px;letter-spacing:-0.45px;text-indent:0.45px;color:#2233dd;-webkit-text-stroke:0.15px #2233dd;">55.0</div>
<div style="position:absolute;left:434.0px;top:403.5px;width:39.5px;height:16.0px;box-sizing:border-box;background:#88beb9;border-right:1px solid rgba(60,85,115,0.38);border-bottom:1px solid rgba(60,85,115,0.38);line-height:15.6px;text-align:center;font-size:12.3px;letter-spacing:-0.45px;text-indent:0.45px;color:#151e1d;-webkit-text-stroke:0.15px #151e1d;">56.4</div>
<div style="position:absolute;left:473.5px;top:403.5px;width:39.5px;height:16.0px;box-sizing:border-box;background:#93e488;border-right:1px solid rgba(60,85,115,0.38);border-bottom:1px solid rgba(60,85,115,0.38);line-height:15.6px;text-align:center;font-size:12.3px;letter-spacing:-0.45px;text-indent:0.45px;color:#172415;-webkit-text-stroke:0.15px #172415;">69.0</div>
<div style="position:absolute;left:513.0px;top:403.5px;width:39.5px;height:16.0px;box-sizing:border-box;background:#88da9d;border-right:1px solid rgba(60,85,115,0.38);border-bottom:1px solid rgba(60,85,115,0.38);line-height:15.6px;text-align:center;font-size:12.3px;letter-spacing:-0.45px;text-indent:0.45px;color:#152219;-webkit-text-stroke:0.15px #152219;">62.2</div>
<div style="position:absolute;left:552.5px;top:403.5px;width:39.5px;height:16.0px;box-sizing:border-box;background:#88bfb8;border-right:1px solid rgba(60,85,115,0.38);border-bottom:1px solid rgba(60,85,115,0.38);line-height:15.6px;text-align:center;font-size:12.3px;letter-spacing:-0.45px;text-indent:0.45px;color:#151e1d;-webkit-text-stroke:0.15px #151e1d;">56.5</div>
<div style="position:absolute;left:592.0px;top:403.5px;width:39.0px;height:16.0px;box-sizing:border-box;background:#88b8bf;border-right:1px solid rgba(60,85,115,0.38);border-bottom:1px solid rgba(60,85,115,0.38);line-height:15.6px;text-align:center;font-size:12.3px;letter-spacing:-0.45px;text-indent:0.45px;color:#151d1e;-webkit-text-stroke:0.15px #151d1e;">55.0</div>
<div style="position:absolute;left:631.0px;top:403.5px;width:39.5px;height:16.0px;box-sizing:border-box;background:#88bfb8;border-right:1px solid rgba(60,85,115,0.38);border-bottom:1px solid rgba(60,85,115,0.38);line-height:15.6px;text-align:center;font-size:12.3px;letter-spacing:-0.45px;text-indent:0.45px;color:#151e1d;-webkit-text-stroke:0.15px #151e1d;">56.5</div>
<div style="position:absolute;left:670.5px;top:403.5px;width:39.5px;height:16.0px;box-sizing:border-box;background:#88babe;border-right:1px solid rgba(60,85,115,0.38);border-bottom:1px solid rgba(60,85,115,0.38);line-height:15.6px;text-align:center;font-size:12.3px;letter-spacing:-0.45px;text-indent:0.45px;color:#151d1e;-webkit-text-stroke:0.15px #151d1e;">55.4</div>
<div style="position:absolute;left:39.5px;top:419.5px;width:39.3px;height:16.5px;box-sizing:border-box;background:linear-gradient(#d6d6d6,#c6c6c6);border-top:1px solid #f0f0f0;border-bottom:1px solid #8a8a8a;border-right:1px solid #9a9a9a;"></div>
<div style="position:absolute;left:39.5px;top:419.5px;width:39.3px;height:16.5px;line-height:15.3px;text-align:center;font-size:12.3px;color:#505050;">30.0</div>
<div style="position:absolute;left:79.5px;top:419.5px;width:39.5px;height:16.5px;box-sizing:border-box;background:#88a9ce;border-right:1px solid rgba(60,85,115,0.38);border-bottom:1px solid rgba(60,85,115,0.38);line-height:16.1px;text-align:center;font-size:12.3px;letter-spacing:-0.45px;text-indent:0.45px;color:#151b20;-webkit-text-stroke:0.15px #151b20;">51.9</div>
<div style="position:absolute;left:119.0px;top:419.5px;width:39.5px;height:16.5px;box-sizing:border-box;background:#88a2d5;border-right:1px solid rgba(60,85,115,0.38);border-bottom:1px solid rgba(60,85,115,0.38);line-height:16.1px;text-align:center;font-size:12.3px;letter-spacing:-0.45px;text-indent:0.45px;color:#151922;-webkit-text-stroke:0.15px #151922;">50.4</div>
<div style="position:absolute;left:158.5px;top:419.5px;width:39.5px;height:16.5px;box-sizing:border-box;background:#88a1d6;border-right:1px solid rgba(60,85,115,0.38);border-bottom:1px solid rgba(60,85,115,0.38);line-height:16.1px;text-align:center;font-size:12.3px;letter-spacing:-0.45px;text-indent:0.45px;color:#151922;-webkit-text-stroke:0.15px #151922;">50.2</div>
<div style="position:absolute;left:198.0px;top:419.5px;width:39.0px;height:16.5px;box-sizing:border-box;background:#88a4d3;border-right:1px solid rgba(60,85,115,0.38);border-bottom:1px solid rgba(60,85,115,0.38);line-height:16.1px;text-align:center;font-size:12.3px;letter-spacing:-0.45px;text-indent:0.45px;color:#151a21;-webkit-text-stroke:0.15px #151a21;">50.8</div>
<div style="position:absolute;left:237.0px;top:419.5px;width:39.5px;height:16.5px;box-sizing:border-box;background:#88b2c5;border-right:1px solid rgba(60,85,115,0.38);border-bottom:1px solid rgba(60,85,115,0.38);line-height:16.1px;text-align:center;font-size:12.3px;letter-spacing:-0.45px;text-indent:0.45px;color:#151c1f;-webkit-text-stroke:0.15px #151c1f;">53.8</div>
<div style="position:absolute;left:276.5px;top:419.5px;width:39.5px;height:16.5px;box-sizing:border-box;background:#88babd;border-right:1px solid rgba(60,85,115,0.38);border-bottom:1px solid rgba(60,85,115,0.38);line-height:16.1px;text-align:center;font-size:12.3px;letter-spacing:-0.45px;text-indent:0.45px;color:#151d1e;-webkit-text-stroke:0.15px #151d1e;">55.5</div>
<div style="position:absolute;left:316.0px;top:419.5px;width:39.5px;height:16.5px;box-sizing:border-box;background:#88c6b1;border-right:1px solid rgba(60,85,115,0.38);border-bottom:1px solid rgba(60,85,115,0.38);line-height:16.1px;text-align:center;font-size:12.3px;letter-spacing:-0.45px;text-indent:0.45px;color:#151f1c;-webkit-text-stroke:0.15px #151f1c;">57.9</div>
<div style="position:absolute;left:355.5px;top:419.5px;width:39.5px;height:16.5px;box-sizing:border-box;background:#88b3c4;border-right:1px solid rgba(60,85,115,0.38);border-bottom:1px solid rgba(60,85,115,0.38);line-height:16.1px;text-align:center;font-size:12.3px;letter-spacing:-0.45px;text-indent:0.45px;color:#151c1f;-webkit-text-stroke:0.15px #151c1f;">54.0</div>
<div style="position:absolute;left:395.0px;top:419.5px;width:39.0px;height:16.5px;box-sizing:border-box;background:#88b7c0;border-right:1px solid rgba(60,85,115,0.38);border-bottom:1px solid rgba(60,85,115,0.38);line-height:16.1px;text-align:center;font-size:12.3px;letter-spacing:-0.45px;text-indent:0.45px;color:#2233dd;-webkit-text-stroke:0.15px #2233dd;">54.8</div>
<div style="position:absolute;left:434.0px;top:419.5px;width:39.5px;height:16.5px;box-sizing:border-box;background:#88bbbc;border-right:1px solid rgba(60,85,115,0.38);border-bottom:1px solid rgba(60,85,115,0.38);line-height:16.1px;text-align:center;font-size:12.3px;letter-spacing:-0.45px;text-indent:0.45px;color:#151d1e;-webkit-text-stroke:0.15px #151d1e;">55.7</div>
<div style="position:absolute;left:473.5px;top:419.5px;width:39.5px;height:16.5px;box-sizing:border-box;background:#88d1a7;border-right:1px solid rgba(60,85,115,0.38);border-bottom:1px solid rgba(60,85,115,0.38);line-height:16.1px;text-align:center;font-size:12.3px;letter-spacing:-0.45px;text-indent:0.45px;color:#15211a;-webkit-text-stroke:0.15px #15211a;">60.1</div>
<div style="position:absolute;left:513.0px;top:419.5px;width:39.5px;height:16.5px;box-sizing:border-box;background:#88c5b2;border-right:1px solid rgba(60,85,115,0.38);border-bottom:1px solid rgba(60,85,115,0.38);line-height:16.1px;text-align:center;font-size:12.3px;letter-spacing:-0.45px;text-indent:0.45px;color:#151f1c;-webkit-text-stroke:0.15px #151f1c;">57.8</div>
<div style="position:absolute;left:552.5px;top:419.5px;width:39.5px;height:16.5px;box-sizing:border-box;background:#88b0c8;border-right:1px solid rgba(60,85,115,0.38);border-bottom:1px solid rgba(60,85,115,0.38);line-height:16.1px;text-align:center;font-size:12.3px;letter-spacing:-0.45px;text-indent:0.45px;color:#151c20;-webkit-text-stroke:0.15px #151c20;">53.3</div>
<div style="position:absolute;left:592.0px;top:419.5px;width:39.0px;height:16.5px;box-sizing:border-box;background:#88b0c8;border-right:1px solid rgba(60,85,115,0.38);border-bottom:1px solid rgba(60,85,115,0.38);line-height:16.1px;text-align:center;font-size:12.3px;letter-spacing:-0.45px;text-indent:0.45px;color:#151c20;-webkit-text-stroke:0.15px #151c20;">53.2</div>
<div style="position:absolute;left:631.0px;top:419.5px;width:39.5px;height:16.5px;box-sizing:border-box;background:#88accb;border-right:1px solid rgba(60,85,115,0.38);border-bottom:1px solid rgba(60,85,115,0.38);line-height:16.1px;text-align:center;font-size:12.3px;letter-spacing:-0.45px;text-indent:0.45px;color:#151b20;-webkit-text-stroke:0.15px #151b20;">52.6</div>
<div style="position:absolute;left:670.5px;top:419.5px;width:39.5px;height:16.5px;box-sizing:border-box;background:#88accb;border-right:1px solid rgba(60,85,115,0.38);border-bottom:1px solid rgba(60,85,115,0.38);line-height:16.1px;text-align:center;font-size:12.3px;letter-spacing:-0.45px;text-indent:0.45px;color:#151b20;-webkit-text-stroke:0.15px #151b20;">52.6</div>
<div style="position:absolute;left:39.5px;top:436.0px;width:39.3px;height:15.0px;box-sizing:border-box;background:linear-gradient(#d6d6d6,#c6c6c6);border-top:1px solid #f0f0f0;border-bottom:1px solid #8a8a8a;border-right:1px solid #9a9a9a;"></div>
<div style="position:absolute;left:39.5px;top:436.0px;width:39.3px;height:15.0px;line-height:13.8px;text-align:center;font-size:12.3px;color:#505050;">25.0</div>
<div style="position:absolute;left:79.5px;top:436.0px;width:39.5px;height:15.0px;box-sizing:border-box;background:#88a0d7;border-right:1px solid rgba(60,85,115,0.38);border-bottom:1px solid rgba(60,85,115,0.38);line-height:14.6px;text-align:center;font-size:12.3px;letter-spacing:-0.45px;text-indent:0.45px;color:#151922;-webkit-text-stroke:0.15px #151922;">50.0</div>
<div style="position:absolute;left:119.0px;top:436.0px;width:39.5px;height:15.0px;box-sizing:border-box;background:#88a2d5;border-right:1px solid rgba(60,85,115,0.38);border-bottom:1px solid rgba(60,85,115,0.38);line-height:14.6px;text-align:center;font-size:12.3px;letter-spacing:-0.45px;text-indent:0.45px;color:#151922;-webkit-text-stroke:0.15px #151922;">50.3</div>
<div style="position:absolute;left:158.5px;top:436.0px;width:39.5px;height:15.0px;box-sizing:border-box;background:#889fd8;border-right:1px solid rgba(60,85,115,0.38);border-bottom:1px solid rgba(60,85,115,0.38);line-height:14.6px;text-align:center;font-size:12.3px;letter-spacing:-0.45px;text-indent:0.45px;color:#151922;-webkit-text-stroke:0.15px #151922;">49.9</div>
<div style="position:absolute;left:198.0px;top:436.0px;width:39.0px;height:15.0px;box-sizing:border-box;background:#8894e3;border-right:1px solid rgba(60,85,115,0.38);border-bottom:1px solid rgba(60,85,115,0.38);line-height:14.6px;text-align:center;font-size:12.3px;letter-spacing:-0.45px;text-indent:0.45px;color:#151724;-webkit-text-stroke:0.15px #151724;">47.5</div>
<div style="position:absolute;left:237.0px;top:436.0px;width:39.5px;height:15.0px;box-sizing:border-box;background:#888aed;border-right:1px solid rgba(60,85,115,0.38);border-bottom:1px solid rgba(60,85,115,0.38);line-height:14.6px;text-align:center;font-size:12.3px;letter-spacing:-0.45px;text-indent:0.45px;color:#151625;-webkit-text-stroke:0.15px #151625;">45.4</div>
<div style="position:absolute;left:276.5px;top:436.0px;width:39.5px;height:15.0px;box-sizing:border-box;background:#888cec;border-right:1px solid rgba(60,85,115,0.38);border-bottom:1px solid rgba(60,85,115,0.38);line-height:14.6px;text-align:center;font-size:12.3px;letter-spacing:-0.45px;text-indent:0.45px;color:#151625;-webkit-text-stroke:0.15px #151625;">45.8</div>
<div style="position:absolute;left:316.0px;top:436.0px;width:39.5px;height:15.0px;box-sizing:border-box;background:#8888f0;border-right:1px solid rgba(60,85,115,0.38);border-bottom:1px solid rgba(60,85,115,0.38);line-height:14.6px;text-align:center;font-size:12.3px;letter-spacing:-0.45px;text-indent:0.45px;color:#151526;-webkit-text-stroke:0.15px #151526;">44.9</div>
<div style="position:absolute;left:355.5px;top:436.0px;width:39.5px;height:15.0px;box-sizing:border-box;background:#888bec;border-right:1px solid rgba(60,85,115,0.38);border-bottom:1px solid rgba(60,85,115,0.38);line-height:14.6px;text-align:center;font-size:12.3px;letter-spacing:-0.45px;text-indent:0.45px;color:#151625;-webkit-text-stroke:0.15px #151625;">45.6</div>
<div style="position:absolute;left:395.0px;top:436.0px;width:39.0px;height:15.0px;box-sizing:border-box;background:#888ee9;border-right:1px solid rgba(60,85,115,0.38);border-bottom:1px solid rgba(60,85,115,0.38);line-height:14.6px;text-align:center;font-size:12.3px;letter-spacing:-0.45px;text-indent:0.45px;color:#151625;-webkit-text-stroke:0.15px #151625;">46.3</div>
<div style="position:absolute;left:434.0px;top:436.0px;width:39.5px;height:15.0px;box-sizing:border-box;background:#8892e5;border-right:1px solid rgba(60,85,115,0.38);border-bottom:1px solid rgba(60,85,115,0.38);line-height:14.6px;text-align:center;font-size:12.3px;letter-spacing:-0.45px;text-indent:0.45px;color:#151724;-webkit-text-stroke:0.15px #151724;">47.2</div>
<div style="position:absolute;left:473.5px;top:436.0px;width:39.5px;height:15.0px;box-sizing:border-box;background:#8898df;border-right:1px solid rgba(60,85,115,0.38);border-bottom:1px solid rgba(60,85,115,0.38);line-height:14.6px;text-align:center;font-size:12.3px;letter-spacing:-0.45px;text-indent:0.45px;color:#151823;-webkit-text-stroke:0.15px #151823;">48.3</div>
<div style="position:absolute;left:513.0px;top:436.0px;width:39.5px;height:15.0px;box-sizing:border-box;background:#889cdb;border-right:1px solid rgba(60,85,115,0.38);border-bottom:1px solid rgba(60,85,115,0.38);line-height:14.6px;text-align:center;font-size:12.3px;letter-spacing:-0.45px;text-indent:0.45px;color:#151823;-webkit-text-stroke:0.15px #151823;">49.2</div>
<div style="position:absolute;left:552.5px;top:436.0px;width:39.5px;height:15.0px;box-sizing:border-box;background:#8899de;border-right:1px solid rgba(60,85,115,0.38);border-bottom:1px solid rgba(60,85,115,0.38);line-height:14.6px;text-align:center;font-size:12.3px;letter-spacing:-0.45px;text-indent:0.45px;color:#151823;-webkit-text-stroke:0.15px #151823;">48.5</div>
<div style="position:absolute;left:592.0px;top:436.0px;width:39.0px;height:15.0px;box-sizing:border-box;background:#889dda;border-right:1px solid rgba(60,85,115,0.38);border-bottom:1px solid rgba(60,85,115,0.38);line-height:14.6px;text-align:center;font-size:12.3px;letter-spacing:-0.45px;text-indent:0.45px;color:#151922;-webkit-text-stroke:0.15px #151922;">49.3</div>
<div style="position:absolute;left:631.0px;top:436.0px;width:39.5px;height:15.0px;box-sizing:border-box;background:#889dda;border-right:1px solid rgba(60,85,115,0.38);border-bottom:1px solid rgba(60,85,115,0.38);line-height:14.6px;text-align:center;font-size:12.3px;letter-spacing:-0.45px;text-indent:0.45px;color:#151922;-webkit-text-stroke:0.15px #151922;">49.3</div>
<div style="position:absolute;left:670.5px;top:436.0px;width:39.5px;height:15.0px;box-sizing:border-box;background:#88aacd;border-right:1px solid rgba(60,85,115,0.38);border-bottom:1px solid rgba(60,85,115,0.38);line-height:14.6px;text-align:center;font-size:12.3px;letter-spacing:-0.45px;text-indent:0.45px;color:#151b20;-webkit-text-stroke:0.15px #151b20;">52.1</div>
<div style="position:absolute;left:39.5px;top:451px;width:39.3px;height:24.5px;box-sizing:border-box;background:linear-gradient(#ffffff,#c0d4ee);border:1px solid #a8b4c4;"><svg style="position:absolute;left:0;top:0" width="39.3" height="24.5" viewBox="0 0 39.3 24.5"><g transform="translate(13.649999999999999,5.25)"><path d="M3 0 L0 4 H2 V11 H10 V13 L13 10 L10 7 V9 H4 V4 H6 Z" fill="#111"/></g></svg></div>
<div style="position:absolute;left:79.5px;top:451px;width:39.5px;height:24.5px;box-sizing:border-box;background:#c8c8c8;border-left:1px solid #f4f4f4;border-bottom:1px solid #9a9a9a;line-height:24.5px;text-align:center;font-size:12.3px;color:#555;">600</div>
<div style="position:absolute;left:119.0px;top:451px;width:39.5px;height:24.5px;box-sizing:border-box;background:#c8c8c8;border-left:1px solid #f4f4f4;border-bottom:1px solid #9a9a9a;line-height:24.5px;text-align:center;font-size:12.3px;color:#555;">950</div>
<div style="position:absolute;left:158.5px;top:451px;width:39.5px;height:24.5px;box-sizing:border-box;background:#c8c8c8;border-left:1px solid #f4f4f4;border-bottom:1px solid #9a9a9a;line-height:24.5px;text-align:center;font-size:12.3px;color:#555;">1200</div>
<div style="position:absolute;left:198.0px;top:451px;width:39.0px;height:24.5px;box-sizing:border-box;background:#c8c8c8;border-left:1px solid #f4f4f4;border-bottom:1px solid #9a9a9a;line-height:24.5px;text-align:center;font-size:12.3px;color:#555;">1400</div>
<div style="position:absolute;left:237.0px;top:451px;width:39.5px;height:24.5px;box-sizing:border-box;background:#c8c8c8;border-left:1px solid #f4f4f4;border-bottom:1px solid #9a9a9a;line-height:24.5px;text-align:center;font-size:12.3px;color:#555;">1800</div>
<div style="position:absolute;left:276.5px;top:451px;width:39.5px;height:24.5px;box-sizing:border-box;background:#c8c8c8;border-left:1px solid #f4f4f4;border-bottom:1px solid #9a9a9a;line-height:24.5px;text-align:center;font-size:12.3px;color:#555;">2200</div>
<div style="position:absolute;left:316.0px;top:451px;width:39.5px;height:24.5px;box-sizing:border-box;background:#c8c8c8;border-left:1px solid #f4f4f4;border-bottom:1px solid #9a9a9a;line-height:24.5px;text-align:center;font-size:12.3px;color:#555;">2600</div>
<div style="position:absolute;left:355.5px;top:451px;width:39.5px;height:24.5px;box-sizing:border-box;background:#c8c8c8;border-left:1px solid #f4f4f4;border-bottom:1px solid #9a9a9a;line-height:24.5px;text-align:center;font-size:12.3px;color:#555;">3000</div>
<div style="position:absolute;left:395.0px;top:451px;width:39.0px;height:24.5px;box-sizing:border-box;background:#c8c8c8;border-left:1px solid #f4f4f4;border-bottom:1px solid #9a9a9a;line-height:24.5px;text-align:center;font-size:12.3px;color:#555;">3400</div>
<div style="position:absolute;left:434.0px;top:451px;width:39.5px;height:24.5px;box-sizing:border-box;background:#c8c8c8;border-left:1px solid #f4f4f4;border-bottom:1px solid #9a9a9a;line-height:24.5px;text-align:center;font-size:12.3px;color:#555;">3900</div>
<div style="position:absolute;left:473.5px;top:451px;width:39.5px;height:24.5px;box-sizing:border-box;background:#c8c8c8;border-left:1px solid #f4f4f4;border-bottom:1px solid #9a9a9a;line-height:24.5px;text-align:center;font-size:12.3px;color:#555;">4500</div>
<div style="position:absolute;left:513.0px;top:451px;width:39.5px;height:24.5px;box-sizing:border-box;background:#c8c8c8;border-left:1px solid #f4f4f4;border-bottom:1px solid #9a9a9a;line-height:24.5px;text-align:center;font-size:12.3px;color:#555;">5000</div>
<div style="position:absolute;left:552.5px;top:451px;width:39.5px;height:24.5px;box-sizing:border-box;background:#c8c8c8;border-left:1px solid #f4f4f4;border-bottom:1px solid #9a9a9a;line-height:24.5px;text-align:center;font-size:12.3px;color:#555;">5500</div>
<div style="position:absolute;left:592.0px;top:451px;width:39.0px;height:24.5px;box-sizing:border-box;background:#c8c8c8;border-left:1px solid #f4f4f4;border-bottom:1px solid #9a9a9a;line-height:24.5px;text-align:center;font-size:12.3px;color:#555;">6000</div>
<div style="position:absolute;left:631.0px;top:451px;width:39.5px;height:24.5px;box-sizing:border-box;background:#c8c8c8;border-left:1px solid #f4f4f4;border-bottom:1px solid #9a9a9a;line-height:24.5px;text-align:center;font-size:12.3px;color:#555;">6500</div>
<div style="position:absolute;left:670.5px;top:451px;width:39.5px;height:24.5px;box-sizing:border-box;background:#c8c8c8;border-left:1px solid #f4f4f4;border-bottom:1px solid #9a9a9a;line-height:24.5px;text-align:center;font-size:12.3px;color:#555;">7200</div>
<div style="position:absolute;left:-271.4px;width:600px;text-align:center;top:258.6px;font-size:10.5px;font-weight:normal;color:#1a1a1a;white-space:nowrap;line-height:1;-webkit-text-stroke:0.45px #1a1a1a;">f</div>
<div style="position:absolute;left:-271.4px;width:600px;text-align:center;top:270.3px;font-size:10.5px;font-weight:normal;color:#1a1a1a;white-space:nowrap;line-height:1;-webkit-text-stroke:0.45px #1a1a1a;">u</div>
<div style="position:absolute;left:-271.4px;width:600px;text-align:center;top:282.0px;font-size:10.5px;font-weight:normal;color:#1a1a1a;white-space:nowrap;line-height:1;-webkit-text-stroke:0.45px #1a1a1a;">e</div>
<div style="position:absolute;left:-271.4px;width:600px;text-align:center;top:293.70000000000005px;font-size:10.5px;font-weight:normal;color:#1a1a1a;white-space:nowrap;line-height:1;-webkit-text-stroke:0.45px #1a1a1a;">l</div>
<div style="position:absolute;left:-271.4px;width:600px;text-align:center;top:305.40000000000003px;font-size:10.5px;font-weight:normal;color:#1a1a1a;white-space:nowrap;line-height:1;-webkit-text-stroke:0.45px #1a1a1a;">l</div>
<div style="position:absolute;left:-271.4px;width:600px;text-align:center;top:317.1px;font-size:10.5px;font-weight:normal;color:#1a1a1a;white-space:nowrap;line-height:1;-webkit-text-stroke:0.45px #1a1a1a;">o</div>
<div style="position:absolute;left:-271.4px;width:600px;text-align:center;top:328.8px;font-size:10.5px;font-weight:normal;color:#1a1a1a;white-space:nowrap;line-height:1;-webkit-text-stroke:0.45px #1a1a1a;">a</div>
<div style="position:absolute;left:-271.4px;width:600px;text-align:center;top:340.5px;font-size:10.5px;font-weight:normal;color:#1a1a1a;white-space:nowrap;line-height:1;-webkit-text-stroke:0.45px #1a1a1a;">d</div>
<div style="position:absolute;left:-271.4px;width:600px;text-align:center;top:363.90000000000003px;font-size:10.5px;font-weight:normal;color:#1a1a1a;white-space:nowrap;line-height:1;-webkit-text-stroke:0.45px #1a1a1a;">k</div>
<div style="position:absolute;left:-271.4px;width:600px;text-align:center;top:375.6px;font-size:10.5px;font-weight:normal;color:#1a1a1a;white-space:nowrap;line-height:1;-webkit-text-stroke:0.45px #1a1a1a;">P</div>
<div style="position:absolute;left:-271.4px;width:600px;text-align:center;top:387.3px;font-size:10.5px;font-weight:normal;color:#1a1a1a;white-space:nowrap;line-height:1;-webkit-text-stroke:0.45px #1a1a1a;">a</div>
<svg style="position:absolute;left:23.5px;top:159px" width="11.0" height="10.0" viewBox="0 0 11 10"><path d="M1 9 L3 6 L8 1 L10 3 L5 8 Z" fill="#f2f2e0" stroke="#b8b8a0" stroke-width="0.8"/><path d="M1 9 L3 6 L5 8 Z" fill="#d9c070"/></svg>
<div style="position:absolute;left:23.1px;top:167.6px;width:11px;height:11px;border-radius:3px;background:linear-gradient(#1a62c0,#063f90);color:#e8f4ff;font-weight:bold;font-size:12.5px;line-height:12px;text-align:center;">?</div>
<div style="position:absolute;left:358px;top:482px;font-size:10.4px;font-weight:bold;color:#333;white-space:nowrap;line-height:1;">rpm</div>
<div style="position:absolute;left:22px;top:492px;width:692px;height:1px;background:#cfcfcf;"></div>
<div style="position:absolute;left:22px;top:493px;width:692px;height:1px;background:#fafafa;"></div>
<div style="position:absolute;left:479px;top:498.3px;width:56px;height:26px;box-sizing:border-box;border:1px solid #b8b8b8;border-radius:2px;background:linear-gradient(#f6f6f6,#e8e8e8);"><svg style="position:absolute;left:0;top:0" width="56" height="26"><g transform=""><g transform="translate(18.0,4.0)"><path d="M6 5.5 Q14 4.5 15.5 16" stroke="#bcbcbc" stroke-width="4.6" fill="none" stroke-linecap="round"/><path d="M1.5 5.5 L7.5 0.8 V10.2 Z" fill="#c4c4c4"/></g></g></svg></div>
<div style="position:absolute;left:537.3px;top:498.3px;width:56.0px;height:26px;box-sizing:border-box;border:1px solid #b8b8b8;border-radius:2px;background:linear-gradient(#f6f6f6,#e8e8e8);"><svg style="position:absolute;left:0;top:0" width="56.0" height="26"><g transform="translate(56.0,0) scale(-1,1)"><g transform="translate(18.0,4.0)"><path d="M6 5.5 Q14 4.5 15.5 16" stroke="#bcbcbc" stroke-width="4.6" fill="none" stroke-linecap="round"/><path d="M1.5 5.5 L7.5 0.8 V10.2 Z" fill="#c4c4c4"/></g></g></svg></div>
<div style="position:absolute;left:595.7px;top:498.3px;width:56.0px;height:26px;box-sizing:border-box;border:1px solid #98a4b2;border-radius:2px;background:linear-gradient(#fdfeff 0%,#eef3f9 45%,#c8d8ea 100%);"><div style="position:absolute;left:0;top:0;width:100%;height:100%;text-align:center;line-height:25px;font-size:10.5px;font-weight:bold;color:#383838;"><u>B</u>urn</div></div>
<div style="position:absolute;left:654.3px;top:498.3px;width:56.40000000000009px;height:26px;box-sizing:border-box;border:1px solid #98a4b2;border-radius:2px;background:linear-gradient(#fdfeff 0%,#eef3f9 45%,#c8d8ea 100%);"><div style="position:absolute;left:0;top:0;width:100%;height:100%;text-align:center;line-height:25px;font-size:10.5px;font-weight:bold;color:#383838;"><u>C</u>lose</div></div>
<div style="position:absolute;left:718px;top:140px;width:435px;height:320px;box-sizing:border-box;background:#ececec;border:1px solid #9a9a9a;border-radius:4px 4px 0 0;box-shadow:0 16px 40px rgba(0,0,0,0.62);"></div>
<div style="position:absolute;left:719px;top:141px;width:433px;height:16px;background:linear-gradient(#f2f2f2,#dadada);border-bottom:1px solid #b0b0b0;border-radius:3px 3px 0 0;"></div>
<div style="position:absolute;left:724.4px;top:143.8px;width:10.4px;height:10.4px;border-radius:50%;box-sizing:border-box;border:1px solid #b02a25;background:radial-gradient(circle at 50% 35%, #ffffff 0%, #e0443e 60%);"></div>
<div style="position:absolute;left:740.8px;top:143.8px;width:10.4px;height:10.4px;border-radius:50%;box-sizing:border-box;border:1px solid #a8a8a8;background:radial-gradient(circle at 50% 35%, #ffffff 0%, #dcdcdc 60%);"></div>
<div style="position:absolute;left:757.1999999999999px;top:143.8px;width:10.4px;height:10.4px;border-radius:50%;box-sizing:border-box;border:1px solid #3a9a2e;background:radial-gradient(circle at 50% 35%, #ffffff 0%, #62c554 60%);"></div>
<div style="position:absolute;left:635.5px;width:600px;text-align:center;top:143px;font-size:11.4px;font-weight:normal;color:#333;white-space:nowrap;line-height:1;">VVT Intake (Relative Timing)</div>
<div style="position:absolute;left:719px;top:157px;width:433px;height:18px;background:linear-gradient(#f8f8f8,#e8e8e8);border-bottom:1px solid #d4d4d4;"></div>
<div style="position:absolute;left:723px;top:161px;font-size:11px;font-weight:normal;color:#222;white-space:nowrap;line-height:1;-webkit-text-stroke:0.3px #222;"><u>F</u>ile</div>
<div style="position:absolute;left:719px;top:175px;width:433px;height:21px;background:#ececec;border-top:1px solid #cdcdcd;box-sizing:border-box;"></div>
<div style="position:absolute;left:1094px;top:180px;width:10.5px;height:10.5px;box-sizing:border-box;border:1px solid #8a8a8a;background:linear-gradient(#fcfcfc,#dcdcdc);border-radius:1px;"></div>
<div style="position:absolute;left:1108px;top:180.5px;font-size:10.8px;font-weight:bold;color:#3c3c3c;white-space:nowrap;line-height:1;">3<u>D</u> View</div>
<div style="position:absolute;left:732.6px;top:196px;width:418.4px;height:214px;box-sizing:border-box;background:#f4f4f4;border-left:1px solid #8a8a8a;border-top:1px solid #8a8a8a;border-right:1px solid #ffffff;border-bottom:1px solid #ffffff;"></div>
<div style="position:absolute;left:733.6px;top:197px;width:416.4px;height:22.599999999999994px;background:linear-gradient(#ffffff,#e4e4e4);"></div>
<div style="position:absolute;left:951.7px;top:200.4px;width:17px;height:16.4px;box-sizing:border-box;border:1px solid #a0a8b4;border-radius:2px;background:linear-gradient(#fbfcfd,#eaeff5 50%,#cfdcea);"><svg style="position:absolute;left:0;top:0" width="17" height="16.4"><circle cx="8.5" cy="8.2" r="6.2" fill="#62b848" stroke="#7fcf5c" stroke-width="1"/><path d="M8.5 3.999999999999999 L12.1 8.399999999999999 H10.0 V12.0 H7.0 V8.399999999999999 H4.9 Z" fill="#f4fff0"/></svg></div>
<div style="position:absolute;left:971.2px;top:200.4px;width:17px;height:16.4px;box-sizing:border-box;border:1px solid #a0a8b4;border-radius:2px;background:linear-gradient(#fbfcfd,#eaeff5 50%,#cfdcea);"><svg style="position:absolute;left:0;top:0" width="17" height="16.4"><circle cx="8.5" cy="8.2" r="6.2" fill="#62b848" stroke="#7fcf5c" stroke-width="1"/><path d="M8.5 12.399999999999999 L12.1 7.999999999999999 H10.0 V4.3999999999999995 H7.0 V7.999999999999999 H4.9 Z" fill="#f4fff0"/></svg></div>
<div style="position:absolute;left:990.7px;top:200.4px;width:17px;height:16.4px;box-sizing:border-box;border:1px solid #a0a8b4;border-radius:2px;background:linear-gradient(#fbfcfd,#eaeff5 50%,#cfdcea);"><svg style="position:absolute;left:0;top:0" width="17" height="16.4"><path d="M5.5 6.8999999999999995 H11.5 M5.5 9.5 H11.5" stroke="#222" stroke-width="1.2"/></svg></div>
<div style="position:absolute;left:1010.2px;top:200.4px;width:17px;height:16.4px;box-sizing:border-box;border:1px solid #a0a8b4;border-radius:2px;background:linear-gradient(#fbfcfd,#eaeff5 50%,#cfdcea);"><svg style="position:absolute;left:0;top:0" width="17" height="16.4"><path d="M8.5 4.8999999999999995 L12.3 11.2 H4.7 Z" fill="#111"/></svg></div>
<div style="position:absolute;left:1029.7px;top:200.4px;width:17px;height:16.4px;box-sizing:border-box;border:1px solid #a0a8b4;border-radius:2px;background:linear-gradient(#fbfcfd,#eaeff5 50%,#cfdcea);"><svg style="position:absolute;left:0;top:0" width="17" height="16.4"><path d="M5.0 5.3999999999999995 H12.0 L8.5 11.399999999999999 Z" fill="#111"/></svg></div>
<div style="position:absolute;left:1049.2px;top:200.4px;width:17px;height:16.4px;box-sizing:border-box;border:1px solid #a0a8b4;border-radius:2px;background:linear-gradient(#fbfcfd,#eaeff5 50%,#cfdcea);"><svg style="position:absolute;left:0;top:0" width="17" height="16.4"><path d="M4.7 8.2 H12.3" stroke="#444" stroke-width="1.6"/></svg></div>
<div style="position:absolute;left:1068.7px;top:200.4px;width:17px;height:16.4px;box-sizing:border-box;border:1px solid #a0a8b4;border-radius:2px;background:linear-gradient(#fbfcfd,#eaeff5 50%,#cfdcea);"><svg style="position:absolute;left:0;top:0" width="17" height="16.4"><path d="M4.7 8.2 H12.3 M8.5 4.3999999999999995 V12.0" stroke="#333" stroke-width="1.5"/></svg></div>
<div style="position:absolute;left:1088.2px;top:200.4px;width:17px;height:16.4px;box-sizing:border-box;border:1px solid #a0a8b4;border-radius:2px;background:linear-gradient(#fbfcfd,#eaeff5 50%,#cfdcea);"><svg style="position:absolute;left:0;top:0" width="17" height="16.4"><g stroke="#111" stroke-width="1.5"><path d="M8.5 4.199999999999999 V12.2"/><path d="M4.9 5.999999999999999 L12.1 10.399999999999999"/><path d="M12.1 5.999999999999999 L4.9 10.399999999999999"/></g></svg></div>
<div style="position:absolute;left:1107.7px;top:200.4px;width:17px;height:16.4px;box-sizing:border-box;border:1px solid #a0a8b4;border-radius:2px;background:linear-gradient(#fbfcfd,#eaeff5 50%,#cfdcea);"><svg style="position:absolute;left:0;top:0" width="17" height="16.4"><path d="M5.3 12.0 L12.3 4.999999999999999" stroke="#3a3ab8" stroke-width="3.2" stroke-linecap="round"/><path d="M5.3 12.0 L8.5 8.799999999999999" stroke="#c8182c" stroke-width="3.2" stroke-linecap="round"/></svg></div>
<div style="position:absolute;left:1127.2px;top:200.4px;width:17px;height:16.4px;box-sizing:border-box;border:1px solid #a0a8b4;border-radius:2px;background:linear-gradient(#fbfcfd,#eaeff5 50%,#cfdcea);"><div style="position:absolute;left:2.0999999999999996px;top:1.75px;width:12.8px;height:12.899999999999999px;background:linear-gradient(90deg,#f03c8c 0%,#f050a0 28%,#7050e8 36%,#5a70f0 62%,#20c8e8 72%,#30d0f0 100%);"></div></div>
<div style="position:absolute;left:737px;top:220.5px;width:44.200000000000045px;height:20.5px;box-sizing:border-box;background:linear-gradient(#d6d6d6,#c6c6c6);border-top:1px solid #f0f0f0;border-bottom:1px solid #8a8a8a;border-right:1px solid #9a9a9a;"></div>
<div style="position:absolute;left:737px;top:220.5px;width:44.200000000000045px;height:20.5px;line-height:19.3px;text-align:center;font-size:14.8px;color:#505050;">85.0</div>
<div style="position:absolute;left:783.0px;top:220.5px;width:45.5px;height:20.5px;box-sizing:border-box;background:#8282fc;border-right:1px solid rgba(60,85,115,0.38);border-bottom:1px solid rgba(60,85,115,0.38);line-height:18.5px;text-align:center;font-size:14.8px;letter-spacing:-0.25px;text-indent:0.25px;color:#141428;-webkit-text-stroke:0.15px #141428;">1.0</div>
<div style="position:absolute;left:828.5px;top:220.5px;width:45.5px;height:20.5px;box-sizing:border-box;background:#82c4b9;border-right:1px solid rgba(60,85,115,0.38);border-bottom:1px solid rgba(60,85,115,0.38);line-height:18.5px;text-align:center;font-size:14.8px;letter-spacing:-0.25px;text-indent:0.25px;color:#141f1d;-webkit-text-stroke:0.15px #141f1d;">10.0</div>
<div style="position:absolute;left:874.0px;top:220.5px;width:45.5px;height:20.5px;box-sizing:border-box;background:#cfae82;border-right:1px solid rgba(60,85,115,0.38);border-bottom:1px solid rgba(60,85,115,0.38);line-height:18.5px;text-align:center;font-size:14.8px;letter-spacing:-0.25px;text-indent:0.25px;color:#211b14;-webkit-text-stroke:0.15px #211b14;">28.0</div>
<div style="position:absolute;left:919.5px;top:220.5px;width:45.5px;height:20.5px;box-sizing:border-box;background:#de9f82;border-right:1px solid rgba(60,85,115,0.38);border-bottom:1px solid rgba(60,85,115,0.38);line-height:18.5px;text-align:center;font-size:14.8px;letter-spacing:-0.25px;text-indent:0.25px;color:#231914;-webkit-text-stroke:0.15px #231914;">30.0</div>
<div style="position:absolute;left:965.0px;top:220.5px;width:46.0px;height:20.5px;box-sizing:border-box;background:#fc8282;border-right:1px solid rgba(60,85,115,0.38);border-bottom:1px solid rgba(60,85,115,0.38);line-height:18.5px;text-align:center;font-size:14.8px;letter-spacing:-0.25px;text-indent:0.25px;color:#281414;-webkit-text-stroke:0.15px #281414;">34.0</div>
<div style="position:absolute;left:1011.0px;top:220.5px;width:45.5px;height:20.5px;box-sizing:border-box;background:#cfae82;border-right:1px solid rgba(60,85,115,0.38);border-bottom:1px solid rgba(60,85,115,0.38);line-height:18.5px;text-align:center;font-size:14.8px;letter-spacing:-0.25px;text-indent:0.25px;color:#211b14;-webkit-text-stroke:0.15px #211b14;">28.0</div>
<div style="position:absolute;left:1056.5px;top:220.5px;width:45.5px;height:20.5px;box-sizing:border-box;background:#82c4b9;border-right:1px solid rgba(60,85,115,0.38);border-bottom:1px solid rgba(60,85,115,0.38);line-height:18.5px;text-align:center;font-size:14.8px;letter-spacing:-0.25px;text-indent:0.25px;color:#141f1d;-webkit-text-stroke:0.15px #141f1d;">10.0</div>
<div style="position:absolute;left:1102.0px;top:220.5px;width:45.5px;height:20.5px;box-sizing:border-box;background:#8282fc;border-right:1px solid rgba(60,85,115,0.38);border-bottom:1px solid rgba(60,85,115,0.38);line-height:18.5px;text-align:center;font-size:14.8px;letter-spacing:-0.25px;text-indent:0.25px;color:#141428;-webkit-text-stroke:0.15px #141428;">1.0</div>
<div style="position:absolute;left:737px;top:241.0px;width:44.200000000000045px;height:20.5px;box-sizing:border-box;background:linear-gradient(#d6d6d6,#c6c6c6);border-top:1px solid #f0f0f0;border-bottom:1px solid #8a8a8a;border-right:1px solid #9a9a9a;"></div>
<div style="position:absolute;left:737px;top:241.0px;width:44.200000000000045px;height:20.5px;line-height:19.3px;text-align:center;font-size:14.8px;color:#505050;">75.0</div>
<div style="position:absolute;left:783.0px;top:241.0px;width:45.5px;height:20.5px;box-sizing:border-box;background:#8282fc;border-right:1px solid rgba(60,85,115,0.38);border-bottom:1px solid rgba(60,85,115,0.38);line-height:18.5px;text-align:center;font-size:14.8px;letter-spacing:-0.25px;text-indent:0.25px;color:#141428;-webkit-text-stroke:0.15px #141428;">1.0</div>
<div style="position:absolute;left:828.5px;top:241.0px;width:45.5px;height:20.5px;box-sizing:border-box;background:#82c4b9;border-right:1px solid rgba(60,85,115,0.38);border-bottom:1px solid rgba(60,85,115,0.38);line-height:18.5px;text-align:center;font-size:14.8px;letter-spacing:-0.25px;text-indent:0.25px;color:#141f1d;-webkit-text-stroke:0.15px #141f1d;">10.0</div>
<div style="position:absolute;left:874.0px;top:241.0px;width:45.5px;height:20.5px;box-sizing:border-box;background:#cfae82;border-right:1px solid rgba(60,85,115,0.38);border-bottom:1px solid rgba(60,85,115,0.38);line-height:18.5px;text-align:center;font-size:14.8px;letter-spacing:-0.25px;text-indent:0.25px;color:#211b14;-webkit-text-stroke:0.15px #211b14;">28.0</div>
<div style="position:absolute;left:919.5px;top:241.0px;width:45.5px;height:20.5px;box-sizing:border-box;background:#de9f82;border-right:1px solid rgba(60,85,115,0.38);border-bottom:1px solid rgba(60,85,115,0.38);line-height:18.5px;text-align:center;font-size:14.8px;letter-spacing:-0.25px;text-indent:0.25px;color:#231914;-webkit-text-stroke:0.15px #231914;">30.0</div>
<div style="position:absolute;left:965.0px;top:241.0px;width:46.0px;height:20.5px;box-sizing:border-box;background:#fc8282;border-right:1px solid rgba(60,85,115,0.38);border-bottom:1px solid rgba(60,85,115,0.38);line-height:18.5px;text-align:center;font-size:14.8px;letter-spacing:-0.25px;text-indent:0.25px;color:#281414;-webkit-text-stroke:0.15px #281414;">34.0</div>
<div style="position:absolute;left:1011.0px;top:241.0px;width:45.5px;height:20.5px;box-sizing:border-box;background:#cfae82;border-right:1px solid rgba(60,85,115,0.38);border-bottom:1px solid rgba(60,85,115,0.38);line-height:18.5px;text-align:center;font-size:14.8px;letter-spacing:-0.25px;text-indent:0.25px;color:#211b14;-webkit-text-stroke:0.15px #211b14;">28.0</div>
<div style="position:absolute;left:1056.5px;top:241.0px;width:45.5px;height:20.5px;box-sizing:border-box;background:#82c4b9;border-right:1px solid rgba(60,85,115,0.38);border-bottom:1px solid rgba(60,85,115,0.38);line-height:18.5px;text-align:center;font-size:14.8px;letter-spacing:-0.25px;text-indent:0.25px;color:#141f1d;-webkit-text-stroke:0.15px #141f1d;">10.0</div>
<div style="position:absolute;left:1102.0px;top:241.0px;width:45.5px;height:20.5px;box-sizing:border-box;background:#8282fc;border-right:1px solid rgba(60,85,115,0.38);border-bottom:1px solid rgba(60,85,115,0.38);line-height:18.5px;text-align:center;font-size:14.8px;letter-spacing:-0.25px;text-indent:0.25px;color:#141428;-webkit-text-stroke:0.15px #141428;">1.0</div>
<div style="position:absolute;left:737px;top:261.5px;width:44.200000000000045px;height:20.0px;box-sizing:border-box;background:linear-gradient(#d6d6d6,#c6c6c6);border-top:1px solid #f0f0f0;border-bottom:1px solid #8a8a8a;border-right:1px solid #9a9a9a;"></div>
<div style="position:absolute;left:737px;top:261.5px;width:44.200000000000045px;height:20.0px;line-height:18.8px;text-align:center;font-size:14.8px;color:#505050;">70.0</div>
<div style="position:absolute;left:783.0px;top:261.5px;width:45.5px;height:20.0px;box-sizing:border-box;background:#8282fc;border-right:1px solid rgba(60,85,115,0.38);border-bottom:1px solid rgba(60,85,115,0.38);line-height:18.0px;text-align:center;font-size:14.8px;letter-spacing:-0.25px;text-indent:0.25px;color:#141428;-webkit-text-stroke:0.15px #141428;">1.0</div>
<div style="position:absolute;left:828.5px;top:261.5px;width:45.5px;height:20.0px;box-sizing:border-box;background:#82c4b9;border-right:1px solid rgba(60,85,115,0.38);border-bottom:1px solid rgba(60,85,115,0.38);line-height:18.0px;text-align:center;font-size:14.8px;letter-spacing:-0.25px;text-indent:0.25px;color:#141f1d;-webkit-text-stroke:0.15px #141f1d;">10.0</div>
<div style="position:absolute;left:874.0px;top:261.5px;width:45.5px;height:20.0px;box-sizing:border-box;background:#cfae82;border-right:1px solid rgba(60,85,115,0.38);border-bottom:1px solid rgba(60,85,115,0.38);line-height:18.0px;text-align:center;font-size:14.8px;letter-spacing:-0.25px;text-indent:0.25px;color:#211b14;-webkit-text-stroke:0.15px #211b14;">28.0</div>
<div style="position:absolute;left:919.5px;top:261.5px;width:45.5px;height:20.0px;box-sizing:border-box;background:#de9f82;border-right:1px solid rgba(60,85,115,0.38);border-bottom:1px solid rgba(60,85,115,0.38);line-height:18.0px;text-align:center;font-size:14.8px;letter-spacing:-0.25px;text-indent:0.25px;color:#231914;-webkit-text-stroke:0.15px #231914;">30.0</div>
<div style="position:absolute;left:965.0px;top:261.5px;width:46.0px;height:20.0px;box-sizing:border-box;background:#fc8282;border-right:1px solid rgba(60,85,115,0.38);border-bottom:1px solid rgba(60,85,115,0.38);line-height:18.0px;text-align:center;font-size:14.8px;letter-spacing:-0.25px;text-indent:0.25px;color:#281414;-webkit-text-stroke:0.15px #281414;">34.0</div>
<div style="position:absolute;left:1011.0px;top:261.5px;width:45.5px;height:20.0px;box-sizing:border-box;background:#cfae82;border-right:1px solid rgba(60,85,115,0.38);border-bottom:1px solid rgba(60,85,115,0.38);line-height:18.0px;text-align:center;font-size:14.8px;letter-spacing:-0.25px;text-indent:0.25px;color:#211b14;-webkit-text-stroke:0.15px #211b14;">28.0</div>
<div style="position:absolute;left:1056.5px;top:261.5px;width:45.5px;height:20.0px;box-sizing:border-box;background:#82c4b9;border-right:1px solid rgba(60,85,115,0.38);border-bottom:1px solid rgba(60,85,115,0.38);line-height:18.0px;text-align:center;font-size:14.8px;letter-spacing:-0.25px;text-indent:0.25px;color:#141f1d;-webkit-text-stroke:0.15px #141f1d;">10.0</div>
<div style="position:absolute;left:1102.0px;top:261.5px;width:45.5px;height:20.0px;box-sizing:border-box;background:#8282fc;border-right:1px solid rgba(60,85,115,0.38);border-bottom:1px solid rgba(60,85,115,0.38);line-height:18.0px;text-align:center;font-size:14.8px;letter-spacing:-0.25px;text-indent:0.25px;color:#141428;-webkit-text-stroke:0.15px #141428;">1.0</div>
<div style="position:absolute;left:737px;top:281.5px;width:44.200000000000045px;height:20.5px;box-sizing:border-box;background:linear-gradient(#d6d6d6,#c6c6c6);border-top:1px solid #f0f0f0;border-bottom:1px solid #8a8a8a;border-right:1px solid #9a9a9a;"></div>
<div style="position:absolute;left:737px;top:281.5px;width:44.200000000000045px;height:20.5px;line-height:19.3px;text-align:center;font-size:14.8px;color:#505050;">60.0</div>
<div style="position:absolute;left:783.0px;top:281.5px;width:45.5px;height:20.5px;box-sizing:border-box;background:#8282fc;border-right:1px solid rgba(60,85,115,0.38);border-bottom:1px solid rgba(60,85,115,0.38);line-height:18.5px;text-align:center;font-size:14.8px;letter-spacing:-0.25px;text-indent:0.25px;color:#141428;-webkit-text-stroke:0.15px #141428;">1.0</div>
<div style="position:absolute;left:828.5px;top:281.5px;width:45.5px;height:20.5px;box-sizing:border-box;background:#82c4b9;border-right:1px solid rgba(60,85,115,0.38);border-bottom:1px solid rgba(60,85,115,0.38);line-height:18.5px;text-align:center;font-size:14.8px;letter-spacing:-0.25px;text-indent:0.25px;color:#141f1d;-webkit-text-stroke:0.15px #141f1d;">10.0</div>
<div style="position:absolute;left:874.0px;top:281.5px;width:45.5px;height:20.5px;box-sizing:border-box;background:#82c4b9;border-right:1px solid rgba(60,85,115,0.38);border-bottom:1px solid rgba(60,85,115,0.38);line-height:18.5px;text-align:center;font-size:14.8px;letter-spacing:-0.25px;text-indent:0.25px;color:#141f1d;-webkit-text-stroke:0.15px #141f1d;">10.0</div>
<div style="position:absolute;left:919.5px;top:281.5px;width:45.5px;height:20.5px;box-sizing:border-box;background:#82c4b9;border-right:1px solid rgba(60,85,115,0.38);border-bottom:1px solid rgba(60,85,115,0.38);line-height:18.5px;text-align:center;font-size:14.8px;letter-spacing:-0.25px;text-indent:0.25px;color:#141f1d;-webkit-text-stroke:0.15px #141f1d;">10.0</div>
<div style="position:absolute;left:965.0px;top:281.5px;width:46.0px;height:20.5px;box-sizing:border-box;background:#82c4b9;border-right:1px solid rgba(60,85,115,0.38);border-bottom:1px solid rgba(60,85,115,0.38);line-height:18.5px;text-align:center;font-size:14.8px;letter-spacing:-0.25px;text-indent:0.25px;color:#141f1d;-webkit-text-stroke:0.15px #141f1d;">10.0</div>
<div style="position:absolute;left:1011.0px;top:281.5px;width:45.5px;height:20.5px;box-sizing:border-box;background:#82c4b9;border-right:1px solid rgba(60,85,115,0.38);border-bottom:1px solid rgba(60,85,115,0.38);line-height:18.5px;text-align:center;font-size:14.8px;letter-spacing:-0.25px;text-indent:0.25px;color:#141f1d;-webkit-text-stroke:0.15px #141f1d;">10.0</div>
<div style="position:absolute;left:1056.5px;top:281.5px;width:45.5px;height:20.5px;box-sizing:border-box;background:#82c4b9;border-right:1px solid rgba(60,85,115,0.38);border-bottom:1px solid rgba(60,85,115,0.38);line-height:18.5px;text-align:center;font-size:14.8px;letter-spacing:-0.25px;text-indent:0.25px;color:#141f1d;-webkit-text-stroke:0.15px #141f1d;">10.0</div>
<div style="position:absolute;left:1102.0px;top:281.5px;width:45.5px;height:20.5px;box-sizing:border-box;background:#8282fc;border-right:1px solid rgba(60,85,115,0.38);border-bottom:1px solid rgba(60,85,115,0.38);line-height:18.5px;text-align:center;font-size:14.8px;letter-spacing:-0.25px;text-indent:0.25px;color:#141428;-webkit-text-stroke:0.15px #141428;">1.0</div>
<div style="position:absolute;left:737px;top:302.0px;width:44.200000000000045px;height:20.0px;box-sizing:border-box;background:linear-gradient(#d6d6d6,#c6c6c6);border-top:1px solid #f0f0f0;border-bottom:1px solid #8a8a8a;border-right:1px solid #9a9a9a;"></div>
<div style="position:absolute;left:737px;top:302.0px;width:44.200000000000045px;height:20.0px;line-height:18.8px;text-align:center;font-size:14.8px;color:#505050;">50.0</div>
<div style="position:absolute;left:783.0px;top:302.0px;width:45.5px;height:20.0px;box-sizing:border-box;background:#8282fc;border-right:1px solid rgba(60,85,115,0.38);border-bottom:1px solid rgba(60,85,115,0.38);line-height:18.0px;text-align:center;font-size:14.8px;letter-spacing:-0.25px;text-indent:0.25px;color:#141428;-webkit-text-stroke:0.15px #141428;">1.0</div>
<div style="position:absolute;left:828.5px;top:302.0px;width:45.5px;height:20.0px;box-sizing:border-box;background:#8282fc;border-right:1px solid rgba(60,85,115,0.38);border-bottom:1px solid rgba(60,85,115,0.38);line-height:18.0px;text-align:center;font-size:14.8px;letter-spacing:-0.25px;text-indent:0.25px;color:#141428;-webkit-text-stroke:0.15px #141428;">1.0</div>
<div style="position:absolute;left:874.0px;top:302.0px;width:45.5px;height:20.0px;box-sizing:border-box;background:#8282fc;border-right:1px solid rgba(60,85,115,0.38);border-bottom:1px solid rgba(60,85,115,0.38);line-height:18.0px;text-align:center;font-size:14.8px;letter-spacing:-0.25px;text-indent:0.25px;color:#141428;-webkit-text-stroke:0.15px #141428;">1.0</div>
<div style="position:absolute;left:919.5px;top:302.0px;width:45.5px;height:20.0px;box-sizing:border-box;background:#8282fc;border-right:1px solid rgba(60,85,115,0.38);border-bottom:1px solid rgba(60,85,115,0.38);line-height:18.0px;text-align:center;font-size:14.8px;letter-spacing:-0.25px;text-indent:0.25px;color:#141428;-webkit-text-stroke:0.15px #141428;">1.0</div>
<div style="position:absolute;left:965.0px;top:302.0px;width:46.0px;height:20.0px;box-sizing:border-box;background:#8282fc;border-right:1px solid rgba(60,85,115,0.38);border-bottom:1px solid rgba(60,85,115,0.38);line-height:18.0px;text-align:center;font-size:14.8px;letter-spacing:-0.25px;text-indent:0.25px;color:#141428;-webkit-text-stroke:0.15px #141428;">1.0</div>
<div style="position:absolute;left:1011.0px;top:302.0px;width:45.5px;height:20.0px;box-sizing:border-box;background:#8282fc;border-right:1px solid rgba(60,85,115,0.38);border-bottom:1px solid rgba(60,85,115,0.38);line-height:18.0px;text-align:center;font-size:14.8px;letter-spacing:-0.25px;text-indent:0.25px;color:#141428;-webkit-text-stroke:0.15px #141428;">1.0</div>
<div style="position:absolute;left:1056.5px;top:302.0px;width:45.5px;height:20.0px;box-sizing:border-box;background:#8282fc;border-right:1px solid rgba(60,85,115,0.38);border-bottom:1px solid rgba(60,85,115,0.38);line-height:18.0px;text-align:center;font-size:14.8px;letter-spacing:-0.25px;text-indent:0.25px;color:#141428;-webkit-text-stroke:0.15px #141428;">1.0</div>
<div style="position:absolute;left:1102.0px;top:302.0px;width:45.5px;height:20.0px;box-sizing:border-box;background:#8282fc;border-right:1px solid rgba(60,85,115,0.38);border-bottom:1px solid rgba(60,85,115,0.38);line-height:18.0px;text-align:center;font-size:14.8px;letter-spacing:-0.25px;text-indent:0.25px;color:#141428;-webkit-text-stroke:0.15px #141428;">1.0</div>
<div style="position:absolute;left:737px;top:322.0px;width:44.200000000000045px;height:20.5px;box-sizing:border-box;background:linear-gradient(#d6d6d6,#c6c6c6);border-top:1px solid #f0f0f0;border-bottom:1px solid #8a8a8a;border-right:1px solid #9a9a9a;"></div>
<div style="position:absolute;left:737px;top:322.0px;width:44.200000000000045px;height:20.5px;line-height:19.3px;text-align:center;font-size:14.8px;color:#505050;">40.0</div>
<div style="position:absolute;left:783.0px;top:322.0px;width:45.5px;height:20.5px;box-sizing:border-box;background:#8282fc;border-right:1px solid rgba(60,85,115,0.38);border-bottom:1px solid rgba(60,85,115,0.38);line-height:18.5px;text-align:center;font-size:14.8px;letter-spacing:-0.25px;text-indent:0.25px;color:#141428;-webkit-text-stroke:0.15px #141428;">1.0</div>
<div style="position:absolute;left:828.5px;top:322.0px;width:45.5px;height:20.5px;box-sizing:border-box;background:#8282fc;border-right:1px solid rgba(60,85,115,0.38);border-bottom:1px solid rgba(60,85,115,0.38);line-height:18.5px;text-align:center;font-size:14.8px;letter-spacing:-0.25px;text-indent:0.25px;color:#141428;-webkit-text-stroke:0.15px #141428;">1.0</div>
<div style="position:absolute;left:874.0px;top:322.0px;width:45.5px;height:20.5px;box-sizing:border-box;background:#8282fc;border-right:1px solid rgba(60,85,115,0.38);border-bottom:1px solid rgba(60,85,115,0.38);line-height:18.5px;text-align:center;font-size:14.8px;letter-spacing:-0.25px;text-indent:0.25px;color:#141428;-webkit-text-stroke:0.15px #141428;">1.0</div>
<div style="position:absolute;left:919.5px;top:322.0px;width:45.5px;height:20.5px;box-sizing:border-box;background:#8282fc;border-right:1px solid rgba(60,85,115,0.38);border-bottom:1px solid rgba(60,85,115,0.38);line-height:18.5px;text-align:center;font-size:14.8px;letter-spacing:-0.25px;text-indent:0.25px;color:#141428;-webkit-text-stroke:0.15px #141428;">1.0</div>
<div style="position:absolute;left:965.0px;top:322.0px;width:46.0px;height:20.5px;box-sizing:border-box;background:#8282fc;border-right:1px solid rgba(60,85,115,0.38);border-bottom:1px solid rgba(60,85,115,0.38);line-height:18.5px;text-align:center;font-size:14.8px;letter-spacing:-0.25px;text-indent:0.25px;color:#141428;-webkit-text-stroke:0.15px #141428;">1.0</div>
<div style="position:absolute;left:1011.0px;top:322.0px;width:45.5px;height:20.5px;box-sizing:border-box;background:#8282fc;border-right:1px solid rgba(60,85,115,0.38);border-bottom:1px solid rgba(60,85,115,0.38);line-height:18.5px;text-align:center;font-size:14.8px;letter-spacing:-0.25px;text-indent:0.25px;color:#141428;-webkit-text-stroke:0.15px #141428;">1.0</div>
<div style="position:absolute;left:1056.5px;top:322.0px;width:45.5px;height:20.5px;box-sizing:border-box;background:#8282fc;border-right:1px solid rgba(60,85,115,0.38);border-bottom:1px solid rgba(60,85,115,0.38);line-height:18.5px;text-align:center;font-size:14.8px;letter-spacing:-0.25px;text-indent:0.25px;color:#141428;-webkit-text-stroke:0.15px #141428;">1.0</div>
<div style="position:absolute;left:1102.0px;top:322.0px;width:45.5px;height:20.5px;box-sizing:border-box;background:#8282fc;border-right:1px solid rgba(60,85,115,0.38);border-bottom:1px solid rgba(60,85,115,0.38);line-height:18.5px;text-align:center;font-size:14.8px;letter-spacing:-0.25px;text-indent:0.25px;color:#141428;-webkit-text-stroke:0.15px #141428;">1.0</div>
<div style="position:absolute;left:737px;top:342.5px;width:44.200000000000045px;height:20.5px;box-sizing:border-box;background:linear-gradient(#d6d6d6,#c6c6c6);border-top:1px solid #f0f0f0;border-bottom:1px solid #8a8a8a;border-right:1px solid #9a9a9a;"></div>
<div style="position:absolute;left:737px;top:342.5px;width:44.200000000000045px;height:20.5px;line-height:19.3px;text-align:center;font-size:14.8px;color:#505050;">30.0</div>
<div style="position:absolute;left:783.0px;top:342.5px;width:45.5px;height:20.5px;box-sizing:border-box;background:#8282fc;border-right:1px solid rgba(60,85,115,0.38);border-bottom:1px solid rgba(60,85,115,0.38);line-height:18.5px;text-align:center;font-size:14.8px;letter-spacing:-0.25px;text-indent:0.25px;color:#141428;-webkit-text-stroke:0.15px #141428;">1.0</div>
<div style="position:absolute;left:828.5px;top:342.5px;width:45.5px;height:20.5px;box-sizing:border-box;background:#8282fc;border-right:1px solid rgba(60,85,115,0.38);border-bottom:1px solid rgba(60,85,115,0.38);line-height:18.5px;text-align:center;font-size:14.8px;letter-spacing:-0.25px;text-indent:0.25px;color:#141428;-webkit-text-stroke:0.15px #141428;">1.0</div>
<div style="position:absolute;left:874.0px;top:342.5px;width:45.5px;height:20.5px;box-sizing:border-box;background:#8282fc;border-right:1px solid rgba(60,85,115,0.38);border-bottom:1px solid rgba(60,85,115,0.38);line-height:18.5px;text-align:center;font-size:14.8px;letter-spacing:-0.25px;text-indent:0.25px;color:#141428;-webkit-text-stroke:0.15px #141428;">1.0</div>
<div style="position:absolute;left:919.5px;top:342.5px;width:45.5px;height:20.5px;box-sizing:border-box;background:#8282fc;border-right:1px solid rgba(60,85,115,0.38);border-bottom:1px solid rgba(60,85,115,0.38);line-height:18.5px;text-align:center;font-size:14.8px;letter-spacing:-0.25px;text-indent:0.25px;color:#141428;-webkit-text-stroke:0.15px #141428;">1.0</div>
<div style="position:absolute;left:965.0px;top:342.5px;width:46.0px;height:20.5px;box-sizing:border-box;background:#8282fc;border-right:1px solid rgba(60,85,115,0.38);border-bottom:1px solid rgba(60,85,115,0.38);line-height:18.5px;text-align:center;font-size:14.8px;letter-spacing:-0.25px;text-indent:0.25px;color:#141428;-webkit-text-stroke:0.15px #141428;">1.0</div>
<div style="position:absolute;left:1011.0px;top:342.5px;width:45.5px;height:20.5px;box-sizing:border-box;background:#8282fc;border-right:1px solid rgba(60,85,115,0.38);border-bottom:1px solid rgba(60,85,115,0.38);line-height:18.5px;text-align:center;font-size:14.8px;letter-spacing:-0.25px;text-indent:0.25px;color:#141428;-webkit-text-stroke:0.15px #141428;">1.0</div>
<div style="position:absolute;left:1056.5px;top:342.5px;width:45.5px;height:20.5px;box-sizing:border-box;background:#8282fc;border-right:1px solid rgba(60,85,115,0.38);border-bottom:1px solid rgba(60,85,115,0.38);line-height:18.5px;text-align:center;font-size:14.8px;letter-spacing:-0.25px;text-indent:0.25px;color:#141428;-webkit-text-stroke:0.15px #141428;">1.0</div>
<div style="position:absolute;left:1102.0px;top:342.5px;width:45.5px;height:20.5px;box-sizing:border-box;background:#8282fc;border-right:1px solid rgba(60,85,115,0.38);border-bottom:1px solid rgba(60,85,115,0.38);line-height:18.5px;text-align:center;font-size:14.8px;letter-spacing:-0.25px;text-indent:0.25px;color:#141428;-webkit-text-stroke:0.15px #141428;">1.0</div>
<div style="position:absolute;left:737px;top:363.0px;width:44.200000000000045px;height:20.0px;box-sizing:border-box;background:linear-gradient(#d6d6d6,#c6c6c6);border-top:1px solid #f0f0f0;border-bottom:1px solid #8a8a8a;border-right:1px solid #9a9a9a;"></div>
<div style="position:absolute;left:737px;top:363.0px;width:44.200000000000045px;height:20.0px;line-height:18.8px;text-align:center;font-size:14.8px;color:#505050;">20.0</div>
<div style="position:absolute;left:783.0px;top:363.0px;width:45.5px;height:20.0px;box-sizing:border-box;background:#8282fc;border-right:1px solid rgba(60,85,115,0.38);border-bottom:1px solid rgba(60,85,115,0.38);line-height:18.0px;text-align:center;font-size:14.8px;letter-spacing:-0.25px;text-indent:0.25px;color:#141428;-webkit-text-stroke:0.15px #141428;">1.0</div>
<div style="position:absolute;left:828.5px;top:363.0px;width:45.5px;height:20.0px;box-sizing:border-box;background:#8282fc;border-right:1px solid rgba(60,85,115,0.38);border-bottom:1px solid rgba(60,85,115,0.38);line-height:18.0px;text-align:center;font-size:14.8px;letter-spacing:-0.25px;text-indent:0.25px;color:#141428;-webkit-text-stroke:0.15px #141428;">1.0</div>
<div style="position:absolute;left:874.0px;top:363.0px;width:45.5px;height:20.0px;box-sizing:border-box;background:#8282fc;border-right:1px solid rgba(60,85,115,0.38);border-bottom:1px solid rgba(60,85,115,0.38);line-height:18.0px;text-align:center;font-size:14.8px;letter-spacing:-0.25px;text-indent:0.25px;color:#141428;-webkit-text-stroke:0.15px #141428;">1.0</div>
<div style="position:absolute;left:919.5px;top:363.0px;width:45.5px;height:20.0px;box-sizing:border-box;background:#8282fc;border-right:1px solid rgba(60,85,115,0.38);border-bottom:1px solid rgba(60,85,115,0.38);line-height:18.0px;text-align:center;font-size:14.8px;letter-spacing:-0.25px;text-indent:0.25px;color:#141428;-webkit-text-stroke:0.15px #141428;">1.0</div>
<div style="position:absolute;left:965.0px;top:363.0px;width:46.0px;height:20.0px;box-sizing:border-box;background:#8282fc;border-right:1px solid rgba(60,85,115,0.38);border-bottom:1px solid rgba(60,85,115,0.38);line-height:18.0px;text-align:center;font-size:14.8px;letter-spacing:-0.25px;text-indent:0.25px;color:#141428;-webkit-text-stroke:0.15px #141428;">1.0</div>
<div style="position:absolute;left:1011.0px;top:363.0px;width:45.5px;height:20.0px;box-sizing:border-box;background:#8282fc;border-right:1px solid rgba(60,85,115,0.38);border-bottom:1px solid rgba(60,85,115,0.38);line-height:18.0px;text-align:center;font-size:14.8px;letter-spacing:-0.25px;text-indent:0.25px;color:#141428;-webkit-text-stroke:0.15px #141428;">1.0</div>
<div style="position:absolute;left:1056.5px;top:363.0px;width:45.5px;height:20.0px;box-sizing:border-box;background:#8282fc;border-right:1px solid rgba(60,85,115,0.38);border-bottom:1px solid rgba(60,85,115,0.38);line-height:18.0px;text-align:center;font-size:14.8px;letter-spacing:-0.25px;text-indent:0.25px;color:#141428;-webkit-text-stroke:0.15px #141428;">1.0</div>
<div style="position:absolute;left:1102.0px;top:363.0px;width:45.5px;height:20.0px;box-sizing:border-box;background:#8282fc;border-right:1px solid rgba(60,85,115,0.38);border-bottom:1px solid rgba(60,85,115,0.38);line-height:18.0px;text-align:center;font-size:14.8px;letter-spacing:-0.25px;text-indent:0.25px;color:#141428;-webkit-text-stroke:0.15px #141428;">1.0</div>
<div style="position:absolute;left:737px;top:383.0px;width:44.200000000000045px;height:23.69999999999999px;box-sizing:border-box;background:linear-gradient(#ffffff,#c0d4ee);border:1px solid #a8b4c4;"><svg style="position:absolute;left:0;top:0" width="44.200000000000045" height="23.69999999999999" viewBox="0 0 44.200000000000045 23.69999999999999"><g transform="translate(16.100000000000023,4.849999999999994)"><path d="M3 0 L0 4 H2 V11 H10 V13 L13 10 L10 7 V9 H4 V4 H6 Z" fill="#111"/></g></svg></div>
<div style="position:absolute;left:783.0px;top:383.0px;width:45.5px;height:23.69999999999999px;box-sizing:border-box;background:#c8c8c8;border-left:1px solid #f4f4f4;border-bottom:1px solid #9a9a9a;line-height:23.69999999999999px;text-align:center;font-size:14.8px;color:#555;">1500</div>
<div style="position:absolute;left:828.5px;top:383.0px;width:45.5px;height:23.69999999999999px;box-sizing:border-box;background:#c8c8c8;border-left:1px solid #f4f4f4;border-bottom:1px solid #9a9a9a;line-height:23.69999999999999px;text-align:center;font-size:14.8px;color:#555;">2000</div>
<div style="position:absolute;left:874.0px;top:383.0px;width:45.5px;height:23.69999999999999px;box-sizing:border-box;background:#c8c8c8;border-left:1px solid #f4f4f4;border-bottom:1px solid #9a9a9a;line-height:23.69999999999999px;text-align:center;font-size:14.8px;color:#555;">2500</div>
<div style="position:absolute;left:919.5px;top:383.0px;width:45.5px;height:23.69999999999999px;box-sizing:border-box;background:#c8c8c8;border-left:1px solid #f4f4f4;border-bottom:1px solid #9a9a9a;line-height:23.69999999999999px;text-align:center;font-size:14.8px;color:#555;">3000</div>
<div style="position:absolute;left:965.0px;top:383.0px;width:46.0px;height:23.69999999999999px;box-sizing:border-box;background:#c8c8c8;border-left:1px solid #f4f4f4;border-bottom:1px solid #9a9a9a;line-height:23.69999999999999px;text-align:center;font-size:14.8px;color:#555;">3500</div>
<div style="position:absolute;left:1011.0px;top:383.0px;width:45.5px;height:23.69999999999999px;box-sizing:border-box;background:#c8c8c8;border-left:1px solid #f4f4f4;border-bottom:1px solid #9a9a9a;line-height:23.69999999999999px;text-align:center;font-size:14.8px;color:#555;">4500</div>
<div style="position:absolute;left:1056.5px;top:383.0px;width:45.5px;height:23.69999999999999px;box-sizing:border-box;background:#c8c8c8;border-left:1px solid #f4f4f4;border-bottom:1px solid #9a9a9a;line-height:23.69999999999999px;text-align:center;font-size:14.8px;color:#555;">5000</div>
<div style="position:absolute;left:1102.0px;top:383.0px;width:45.5px;height:23.69999999999999px;box-sizing:border-box;background:#c8c8c8;border-left:1px solid #f4f4f4;border-bottom:1px solid #9a9a9a;line-height:23.69999999999999px;text-align:center;font-size:14.8px;color:#555;">5500</div>
<div style="position:absolute;left:425.29999999999995px;width:600px;text-align:center;top:255.3px;font-size:10px;font-weight:normal;color:#1a1a1a;white-space:nowrap;line-height:1;-webkit-text-stroke:0.45px #1a1a1a;">v</div>
<div style="position:absolute;left:425.29999999999995px;width:600px;text-align:center;top:266.90000000000003px;font-size:10px;font-weight:normal;color:#1a1a1a;white-space:nowrap;line-height:1;-webkit-text-stroke:0.45px #1a1a1a;">v</div>
<div style="position:absolute;left:425.29999999999995px;width:600px;text-align:center;top:278.5px;font-size:10px;font-weight:normal;color:#1a1a1a;white-space:nowrap;line-height:1;-webkit-text-stroke:0.45px #1a1a1a;">t</div>
<div style="position:absolute;left:425.29999999999995px;width:600px;text-align:center;top:290.1px;font-size:10px;font-weight:normal;color:#1a1a1a;white-space:nowrap;line-height:1;-webkit-text-stroke:0.45px #1a1a1a;">_</div>
<div style="position:absolute;left:425.29999999999995px;width:600px;text-align:center;top:301.7px;font-size:10px;font-weight:normal;color:#1a1a1a;white-space:nowrap;line-height:1;-webkit-text-stroke:0.45px #1a1a1a;">l</div>
<div style="position:absolute;left:425.29999999999995px;width:600px;text-align:center;top:313.3px;font-size:10px;font-weight:normal;color:#1a1a1a;white-space:nowrap;line-height:1;-webkit-text-stroke:0.45px #1a1a1a;">o</div>
<div style="position:absolute;left:425.29999999999995px;width:600px;text-align:center;top:324.9px;font-size:10px;font-weight:normal;color:#1a1a1a;white-space:nowrap;line-height:1;-webkit-text-stroke:0.45px #1a1a1a;">a</div>
<div style="position:absolute;left:425.29999999999995px;width:600px;text-align:center;top:336.5px;font-size:10px;font-weight:normal;color:#1a1a1a;white-space:nowrap;line-height:1;-webkit-text-stroke:0.45px #1a1a1a;">d</div>
<div style="position:absolute;left:425.29999999999995px;width:600px;text-align:center;top:359.7px;font-size:10px;font-weight:normal;color:#1a1a1a;white-space:nowrap;line-height:1;-webkit-text-stroke:0.45px #1a1a1a;">%</div>
<svg style="position:absolute;left:720px;top:196px" width="11.0" height="10.0" viewBox="0 0 11 10"><path d="M1 9 L3 6 L8 1 L10 3 L5 8 Z" fill="#f2f2e0" stroke="#b8b8a0" stroke-width="0.8"/><path d="M1 9 L3 6 L5 8 Z" fill="#d9c070"/></svg>
<div style="position:absolute;left:720px;top:206.7px;width:11px;height:11.9px;border-radius:3px;background:linear-gradient(#1a62c0,#063f90);color:#e8f4ff;font-weight:bold;font-size:13.4px;line-height:12.9px;text-align:center;">?</div>
<div style="position:absolute;left:925px;top:412.5px;font-size:10.4px;font-weight:bold;color:#333;white-space:nowrap;line-height:1;">rpm</div>
<div style="position:absolute;left:719px;top:424.5px;width:433px;height:1px;background:#cfcfcf;"></div>
<div style="position:absolute;left:719px;top:425.5px;width:433px;height:1px;background:#fafafa;"></div>
<div style="position:absolute;left:917.5px;top:429.5px;width:56.0px;height:25.7px;box-sizing:border-box;border:1px solid #b8b8b8;border-radius:2px;background:linear-gradient(#f6f6f6,#e8e8e8);"><svg style="position:absolute;left:0;top:0" width="56.0" height="25.7"><g transform=""><g transform="translate(18.0,3.8499999999999996)"><path d="M6 5.5 Q14 4.5 15.5 16" stroke="#bcbcbc" stroke-width="4.6" fill="none" stroke-linecap="round"/><path d="M1.5 5.5 L7.5 0.8 V10.2 Z" fill="#c4c4c4"/></g></g></svg></div>
<div style="position:absolute;left:975.8px;top:429.5px;width:56.0px;height:25.7px;box-sizing:border-box;border:1px solid #b8b8b8;border-radius:2px;background:linear-gradient(#f6f6f6,#e8e8e8);"><svg style="position:absolute;left:0;top:0" width="56.0" height="25.7"><g transform="translate(56.0,0) scale(-1,1)"><g transform="translate(18.0,3.8499999999999996)"><path d="M6 5.5 Q14 4.5 15.5 16" stroke="#bcbcbc" stroke-width="4.6" fill="none" stroke-linecap="round"/><path d="M1.5 5.5 L7.5 0.8 V10.2 Z" fill="#c4c4c4"/></g></g></svg></div>
<div style="position:absolute;left:1034.6px;top:429.5px;width:56.0px;height:25.7px;box-sizing:border-box;border:1px solid #98a4b2;border-radius:2px;background:linear-gradient(#fdfeff 0%,#eef3f9 45%,#c8d8ea 100%);"><div style="position:absolute;left:0;top:0;width:100%;height:100%;text-align:center;line-height:24.7px;font-size:10.5px;font-weight:bold;color:#383838;"><u>B</u>urn</div></div>
<div style="position:absolute;left:1092.5px;top:429.5px;width:56.0px;height:25.7px;box-sizing:border-box;border:1px solid #98a4b2;border-radius:2px;background:linear-gradient(#fdfeff 0%,#eef3f9 45%,#c8d8ea 100%);"><div style="position:absolute;left:0;top:0;width:100%;height:100%;text-align:center;line-height:24.7px;font-size:10.5px;font-weight:bold;color:#383838;"><u>C</u>lose</div></div>
</body></html>
